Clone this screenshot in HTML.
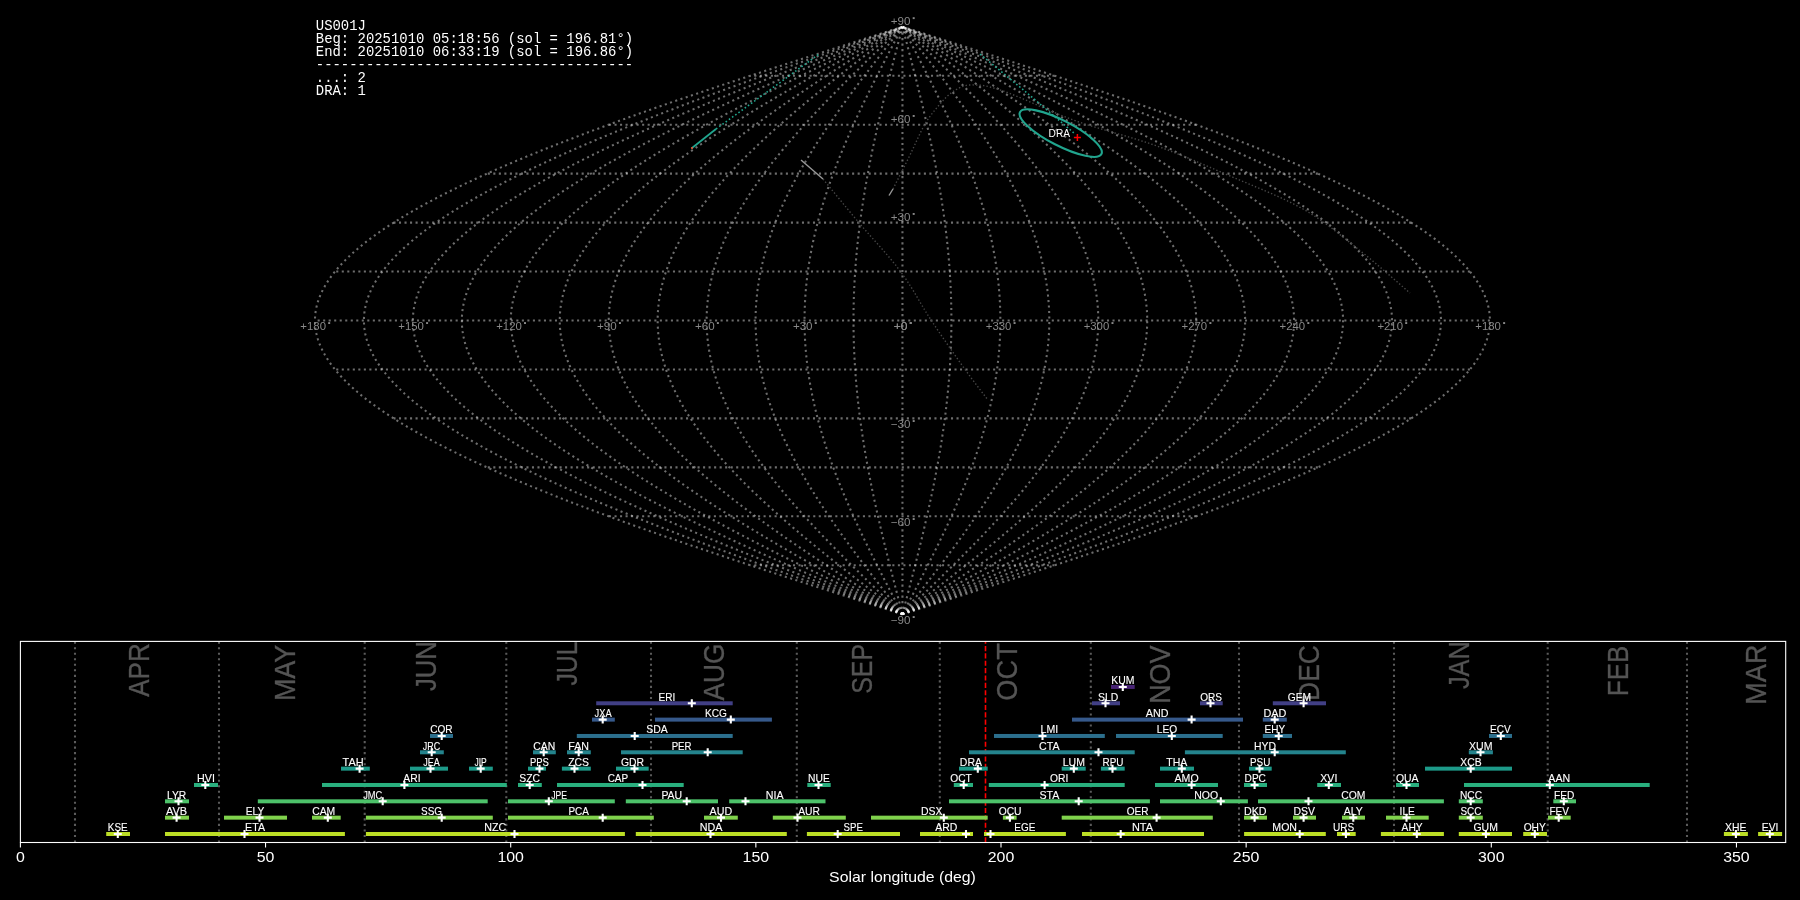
<!DOCTYPE html>
<html><head><meta charset="utf-8"><title>US001J radiants</title>
<style>html,body{margin:0;padding:0;background:#000;width:1800px;height:900px;overflow:hidden}svg{display:block}</style>
</head><body>
<svg width="1800" height="900" viewBox="0 0 1800 900">
<rect width="1800" height="900" fill="#000"/>
<g style="opacity:0.999">
<g fill="none" stroke="#ffffff" stroke-opacity="0.43" stroke-width="2.08" stroke-dasharray="2.08 3.44" stroke-linecap="butt">
<path d="M902.45 614.24 L897.32 612.61 L892.2 610.98 L887.07 609.34 L881.95 607.71 L876.82 606.08 L871.7 604.45 L866.59 602.82 L861.47 601.18 L856.36 599.55 L851.25 597.92 L846.14 596.29 L841.04 594.66 L835.95 593.02 L830.85 591.39 L825.77 589.76 L820.69 588.13 L815.62 586.5 L810.55 584.87 L805.49 583.23 L800.44 581.6 L795.39 579.97 L790.35 578.34 L785.33 576.71 L780.31 575.07 L775.3 573.44 L770.3 571.81 L765.31 570.18 L760.33 568.55 L755.36 566.91 L750.4 565.28 L745.45 563.65 L740.52 562.02 L735.6 560.39 L730.69 558.75 L725.79 557.12 L720.91 555.49 L716.04 553.86 L711.19 552.23 L706.35 550.6 L701.52 548.96 L696.71 547.33 L691.92 545.7 L687.14 544.07 L682.38 542.44 L677.63 540.8 L672.9 539.17 L668.19 537.54 L663.5 535.91 L658.83 534.28 L654.17 532.64 L649.53 531.01 L644.92 529.38 L640.32 527.75 L635.74 526.12 L631.18 524.49 L626.65 522.85 L622.13 521.22 L617.64 519.59 L613.16 517.96 L608.71 516.33 L604.28 514.69 L599.88 513.06 L595.49 511.43 L591.13 509.8 L586.8 508.17 L582.49 506.53 L578.2 504.9 L573.94 503.27 L569.7 501.64 L565.49 500.01 L561.3 498.38 L557.14 496.74 L553 495.11 L548.9 493.48 L544.82 491.85 L540.76 490.22 L536.74 488.58 L532.74 486.95 L528.77 485.32 L524.83 483.69 L520.91 482.06 L517.03 480.42 L513.18 478.79 L509.35 477.16 L505.56 475.53 L501.79 473.9 L498.06 472.27 L494.35 470.63 L490.68 469 L487.04 467.37 L483.43 465.74 L479.85 464.11 L476.31 462.47 L472.8 460.84 L469.32 459.21 L465.87 457.58 L462.46 455.95 L459.07 454.31 L455.73 452.68 L452.42 451.05 L449.14 449.42 L445.89 447.79 L442.69 446.15 L439.51 444.52 L436.37 442.89 L433.27 441.26 L430.2 439.63 L427.17 438 L424.18 436.36 L421.22 434.73 L418.29 433.1 L415.41 431.47 L412.56 429.84 L409.75 428.2 L406.98 426.57 L404.24 424.94 L401.54 423.31 L398.88 421.68 L396.26 420.04 L393.68 418.41 L391.14 416.78 L388.63 415.15 L386.16 413.52 L383.74 411.89 L381.35 410.25 L379 408.62 L376.7 406.99 L374.43 405.36 L372.2 403.73 L370.01 402.09 L367.87 400.46 L365.76 398.83 L363.7 397.2 L361.67 395.57 L359.69 393.93 L357.75 392.3 L355.85 390.67 L353.99 389.04 L352.18 387.41 L350.4 385.78 L348.67 384.14 L346.98 382.51 L345.33 380.88 L343.73 379.25 L342.16 377.62 L340.64 375.98 L339.16 374.35 L337.73 372.72 L336.34 371.09 L334.99 369.46 L333.68 367.82 L332.42 366.19 L331.2 364.56 L330.03 362.93 L328.9 361.3 L327.81 359.67 L326.77 358.03 L325.77 356.4 L324.81 354.77 L323.9 353.14 L323.03 351.51 L322.21 349.87 L321.43 348.24 L320.69 346.61 L320 344.98 L319.35 343.35 L318.75 341.71 L318.19 340.08 L317.68 338.45 L317.21 336.82 L316.78 335.19 L316.4 333.56 L316.07 331.92 L315.78 330.29 L315.53 328.66 L315.33 327.03 L315.17 325.4 L315.06 323.76 L314.99 322.13 L314.97 320.5 L314.99 318.87 L315.06 317.24 L315.17 315.6 L315.33 313.97 L315.53 312.34 L315.78 310.71 L316.07 309.08 L316.4 307.44 L316.78 305.81 L317.21 304.18 L317.68 302.55 L318.19 300.92 L318.75 299.29 L319.35 297.65 L320 296.02 L320.69 294.39 L321.43 292.76 L322.21 291.13 L323.03 289.49 L323.9 287.86 L324.81 286.23 L325.77 284.6 L326.77 282.97 L327.81 281.33 L328.9 279.7 L330.03 278.07 L331.2 276.44 L332.42 274.81 L333.68 273.18 L334.99 271.54 L336.34 269.91 L337.73 268.28 L339.16 266.65 L340.64 265.02 L342.16 263.38 L343.73 261.75 L345.33 260.12 L346.98 258.49 L348.67 256.86 L350.4 255.22 L352.18 253.59 L353.99 251.96 L355.85 250.33 L357.75 248.7 L359.69 247.07 L361.67 245.43 L363.7 243.8 L365.76 242.17 L367.87 240.54 L370.01 238.91 L372.2 237.27 L374.43 235.64 L376.7 234.01 L379 232.38 L381.35 230.75 L383.74 229.11 L386.16 227.48 L388.63 225.85 L391.14 224.22 L393.68 222.59 L396.26 220.96 L398.88 219.32 L401.54 217.69 L404.24 216.06 L406.98 214.43 L409.75 212.8 L412.56 211.16 L415.41 209.53 L418.29 207.9 L421.22 206.27 L424.18 204.64 L427.17 203 L430.2 201.37 L433.27 199.74 L436.37 198.11 L439.51 196.48 L442.69 194.85 L445.89 193.21 L449.14 191.58 L452.42 189.95 L455.73 188.32 L459.07 186.69 L462.46 185.05 L465.87 183.42 L469.32 181.79 L472.8 180.16 L476.31 178.53 L479.85 176.89 L483.43 175.26 L487.04 173.63 L490.68 172 L494.35 170.37 L498.06 168.73 L501.79 167.1 L505.56 165.47 L509.35 163.84 L513.18 162.21 L517.03 160.58 L520.91 158.94 L524.83 157.31 L528.77 155.68 L532.74 154.05 L536.74 152.42 L540.76 150.78 L544.82 149.15 L548.9 147.52 L553 145.89 L557.14 144.26 L561.3 142.62 L565.49 140.99 L569.7 139.36 L573.94 137.73 L578.2 136.1 L582.49 134.47 L586.8 132.83 L591.13 131.2 L595.49 129.57 L599.88 127.94 L604.28 126.31 L608.71 124.67 L613.16 123.04 L617.64 121.41 L622.13 119.78 L626.65 118.15 L631.18 116.51 L635.74 114.88 L640.32 113.25 L644.92 111.62 L649.53 109.99 L654.17 108.36 L658.83 106.72 L663.5 105.09 L668.19 103.46 L672.9 101.83 L677.63 100.2 L682.38 98.56 L687.14 96.93 L691.92 95.3 L696.71 93.67 L701.52 92.04 L706.35 90.4 L711.19 88.77 L716.04 87.14 L720.91 85.51 L725.79 83.88 L730.69 82.25 L735.6 80.61 L740.52 78.98 L745.45 77.35 L750.4 75.72 L755.36 74.09 L760.33 72.45 L765.31 70.82 L770.3 69.19 L775.3 67.56 L780.31 65.93 L785.33 64.29 L790.35 62.66 L795.39 61.03 L800.44 59.4 L805.49 57.77 L810.55 56.13 L815.62 54.5 L820.69 52.87 L825.77 51.24 L830.85 49.61 L835.95 47.98 L841.04 46.34 L846.14 44.71 L851.25 43.08 L856.36 41.45 L861.47 39.82 L866.59 38.18 L871.7 36.55 L876.82 34.92 L881.95 33.29 L887.07 31.66 L892.2 30.02 L897.32 28.39 L902.45 26.76"/>
<path d="M902.45 614.24 L897.75 612.61 L893.05 610.98 L888.35 609.34 L883.66 607.71 L878.96 606.08 L874.27 604.45 L869.57 602.82 L864.88 601.18 L860.2 599.55 L855.51 597.92 L850.84 596.29 L846.16 594.66 L841.49 593.02 L836.82 591.39 L832.16 589.76 L827.5 588.13 L822.85 586.5 L818.21 584.87 L813.57 583.23 L808.94 581.6 L804.31 579.97 L799.7 578.34 L795.09 576.71 L790.49 575.07 L785.89 573.44 L781.31 571.81 L776.73 570.18 L772.17 568.55 L767.62 566.91 L763.07 565.28 L758.54 563.65 L754.01 562.02 L749.5 560.39 L745 558.75 L740.51 557.12 L736.04 555.49 L731.57 553.86 L727.12 552.23 L722.69 550.6 L718.26 548.96 L713.86 547.33 L709.46 545.7 L705.08 544.07 L700.72 542.44 L696.37 540.8 L692.03 539.17 L687.72 537.54 L683.41 535.91 L679.13 534.28 L674.86 532.64 L670.61 531.01 L666.38 529.38 L662.16 527.75 L657.97 526.12 L653.79 524.49 L649.63 522.85 L645.49 521.22 L641.37 519.59 L637.27 517.96 L633.19 516.33 L629.13 514.69 L625.09 513.06 L621.07 511.43 L617.08 509.8 L613.1 508.17 L609.15 506.53 L605.22 504.9 L601.31 503.27 L597.43 501.64 L593.57 500.01 L589.73 498.38 L585.92 496.74 L582.13 495.11 L578.36 493.48 L574.62 491.85 L570.9 490.22 L567.21 488.58 L563.55 486.95 L559.91 485.32 L556.3 483.69 L552.71 482.06 L549.15 480.42 L545.61 478.79 L542.11 477.16 L538.63 475.53 L535.18 473.9 L531.76 472.27 L528.36 470.63 L525 469 L521.66 467.37 L518.35 465.74 L515.07 464.11 L511.82 462.47 L508.6 460.84 L505.41 459.21 L502.25 457.58 L499.12 455.95 L496.02 454.31 L492.96 452.68 L489.92 451.05 L486.91 449.42 L483.94 447.79 L481 446.15 L478.09 444.52 L475.21 442.89 L472.37 441.26 L469.56 439.63 L466.78 438 L464.03 436.36 L461.32 434.73 L458.64 433.1 L456 431.47 L453.38 429.84 L450.81 428.2 L448.27 426.57 L445.76 424.94 L443.29 423.31 L440.85 421.68 L438.44 420.04 L436.08 418.41 L433.74 416.78 L431.45 415.15 L429.19 413.52 L426.96 411.89 L424.78 410.25 L422.62 408.62 L420.51 406.99 L418.43 405.36 L416.39 403.73 L414.38 402.09 L412.42 400.46 L410.49 398.83 L408.59 397.2 L406.74 395.57 L404.92 393.93 L403.14 392.3 L401.4 390.67 L399.7 389.04 L398.03 387.41 L396.41 385.78 L394.82 384.14 L393.27 382.51 L391.76 380.88 L390.29 379.25 L388.85 377.62 L387.46 375.98 L386.11 374.35 L384.79 372.72 L383.51 371.09 L382.28 369.46 L381.08 367.82 L379.93 366.19 L378.81 364.56 L377.73 362.93 L376.69 361.3 L375.7 359.67 L374.74 358.03 L373.82 356.4 L372.95 354.77 L372.11 353.14 L371.31 351.51 L370.56 349.87 L369.84 348.24 L369.17 346.61 L368.54 344.98 L367.94 343.35 L367.39 341.71 L366.88 340.08 L366.41 338.45 L365.98 336.82 L365.59 335.19 L365.24 333.56 L364.93 331.92 L364.67 330.29 L364.44 328.66 L364.26 327.03 L364.11 325.4 L364.01 323.76 L363.95 322.13 L363.93 320.5 L363.95 318.87 L364.01 317.24 L364.11 315.6 L364.26 313.97 L364.44 312.34 L364.67 310.71 L364.93 309.08 L365.24 307.44 L365.59 305.81 L365.98 304.18 L366.41 302.55 L366.88 300.92 L367.39 299.29 L367.94 297.65 L368.54 296.02 L369.17 294.39 L369.84 292.76 L370.56 291.13 L371.31 289.49 L372.11 287.86 L372.95 286.23 L373.82 284.6 L374.74 282.97 L375.7 281.33 L376.69 279.7 L377.73 278.07 L378.81 276.44 L379.93 274.81 L381.08 273.18 L382.28 271.54 L383.51 269.91 L384.79 268.28 L386.11 266.65 L387.46 265.02 L388.85 263.38 L390.29 261.75 L391.76 260.12 L393.27 258.49 L394.82 256.86 L396.41 255.22 L398.03 253.59 L399.7 251.96 L401.4 250.33 L403.14 248.7 L404.92 247.07 L406.74 245.43 L408.59 243.8 L410.49 242.17 L412.42 240.54 L414.38 238.91 L416.39 237.27 L418.43 235.64 L420.51 234.01 L422.62 232.38 L424.78 230.75 L426.96 229.11 L429.19 227.48 L431.45 225.85 L433.74 224.22 L436.08 222.59 L438.44 220.96 L440.85 219.32 L443.29 217.69 L445.76 216.06 L448.27 214.43 L450.81 212.8 L453.38 211.16 L456 209.53 L458.64 207.9 L461.32 206.27 L464.03 204.64 L466.78 203 L469.56 201.37 L472.37 199.74 L475.21 198.11 L478.09 196.48 L481 194.85 L483.94 193.21 L486.91 191.58 L489.92 189.95 L492.96 188.32 L496.02 186.69 L499.12 185.05 L502.25 183.42 L505.41 181.79 L508.6 180.16 L511.82 178.53 L515.07 176.89 L518.35 175.26 L521.66 173.63 L525 172 L528.36 170.37 L531.76 168.73 L535.18 167.1 L538.63 165.47 L542.11 163.84 L545.61 162.21 L549.15 160.58 L552.71 158.94 L556.3 157.31 L559.91 155.68 L563.55 154.05 L567.21 152.42 L570.9 150.78 L574.62 149.15 L578.36 147.52 L582.13 145.89 L585.92 144.26 L589.73 142.62 L593.57 140.99 L597.43 139.36 L601.31 137.73 L605.22 136.1 L609.15 134.47 L613.1 132.83 L617.08 131.2 L621.07 129.57 L625.09 127.94 L629.13 126.31 L633.19 124.67 L637.27 123.04 L641.37 121.41 L645.49 119.78 L649.63 118.15 L653.79 116.51 L657.97 114.88 L662.16 113.25 L666.38 111.62 L670.61 109.99 L674.86 108.36 L679.13 106.72 L683.41 105.09 L687.72 103.46 L692.03 101.83 L696.37 100.2 L700.72 98.56 L705.08 96.93 L709.46 95.3 L713.86 93.67 L718.26 92.04 L722.69 90.4 L727.12 88.77 L731.57 87.14 L736.04 85.51 L740.51 83.88 L745 82.25 L749.5 80.61 L754.01 78.98 L758.54 77.35 L763.07 75.72 L767.62 74.09 L772.17 72.45 L776.73 70.82 L781.31 69.19 L785.89 67.56 L790.49 65.93 L795.09 64.29 L799.7 62.66 L804.31 61.03 L808.94 59.4 L813.57 57.77 L818.21 56.13 L822.85 54.5 L827.5 52.87 L832.16 51.24 L836.82 49.61 L841.49 47.98 L846.16 46.34 L850.84 44.71 L855.51 43.08 L860.2 41.45 L864.88 39.82 L869.57 38.18 L874.27 36.55 L878.96 34.92 L883.66 33.29 L888.35 31.66 L893.05 30.02 L897.75 28.39 L902.45 26.76"/>
<path d="M902.45 614.24 L898.18 612.61 L893.91 610.98 L889.63 609.34 L885.36 607.71 L881.1 606.08 L876.83 604.45 L872.56 602.82 L868.3 601.18 L864.04 599.55 L859.78 597.92 L855.53 596.29 L851.28 594.66 L847.03 593.02 L842.79 591.39 L838.55 589.76 L834.32 588.13 L830.09 586.5 L825.87 584.87 L821.65 583.23 L817.44 581.6 L813.23 579.97 L809.04 578.34 L804.85 576.71 L800.66 575.07 L796.49 573.44 L792.32 571.81 L788.16 570.18 L784.01 568.55 L779.87 566.91 L775.74 565.28 L771.62 563.65 L767.51 562.02 L763.41 560.39 L759.32 558.75 L755.24 557.12 L751.17 555.49 L747.11 553.86 L743.06 552.23 L739.03 550.6 L735.01 548.96 L731 547.33 L727.01 545.7 L723.02 544.07 L719.06 542.44 L715.1 540.8 L711.16 539.17 L707.24 537.54 L703.33 535.91 L699.43 534.28 L695.55 532.64 L691.69 531.01 L687.84 529.38 L684.01 527.75 L680.19 526.12 L676.39 524.49 L672.61 522.85 L668.85 521.22 L665.1 519.59 L661.38 517.96 L657.67 516.33 L653.98 514.69 L650.31 513.06 L646.65 511.43 L643.02 509.8 L639.41 508.17 L635.81 506.53 L632.24 504.9 L628.69 503.27 L625.16 501.64 L621.65 500.01 L618.16 498.38 L614.69 496.74 L611.25 495.11 L607.82 493.48 L604.42 491.85 L601.04 490.22 L597.69 488.58 L594.36 486.95 L591.05 485.32 L587.76 483.69 L584.5 482.06 L581.27 480.42 L578.05 478.79 L574.87 477.16 L571.7 475.53 L568.57 473.9 L565.46 472.27 L562.37 470.63 L559.31 469 L556.28 467.37 L553.27 465.74 L550.29 464.11 L547.33 462.47 L544.4 460.84 L541.5 459.21 L538.63 457.58 L535.79 455.95 L532.97 454.31 L530.18 452.68 L527.42 451.05 L524.69 449.42 L521.99 447.79 L519.31 446.15 L516.67 444.52 L514.05 442.89 L511.47 441.26 L508.91 439.63 L506.38 438 L503.89 436.36 L501.42 434.73 L498.99 433.1 L496.58 431.47 L494.21 429.84 L491.87 428.2 L489.56 426.57 L487.28 424.94 L485.03 423.31 L482.81 421.68 L480.63 420.04 L478.47 418.41 L476.35 416.78 L474.27 415.15 L472.21 413.52 L470.19 411.89 L468.2 410.25 L466.24 408.62 L464.32 406.99 L462.43 405.36 L460.58 403.73 L458.75 402.09 L456.96 400.46 L455.21 398.83 L453.49 397.2 L451.8 395.57 L450.15 393.93 L448.53 392.3 L446.95 390.67 L445.4 389.04 L443.89 387.41 L442.41 385.78 L440.97 384.14 L439.56 382.51 L438.18 380.88 L436.85 379.25 L435.54 377.62 L434.28 375.98 L433.05 374.35 L431.85 372.72 L430.69 371.09 L429.57 369.46 L428.48 367.82 L427.43 366.19 L426.41 364.56 L425.43 362.93 L424.49 361.3 L423.58 359.67 L422.71 358.03 L421.88 356.4 L421.08 354.77 L420.32 353.14 L419.6 351.51 L418.91 349.87 L418.26 348.24 L417.65 346.61 L417.07 344.98 L416.53 343.35 L416.03 341.71 L415.57 340.08 L415.14 338.45 L414.75 336.82 L414.39 335.19 L414.08 333.56 L413.8 331.92 L413.56 330.29 L413.35 328.66 L413.18 327.03 L413.05 325.4 L412.96 323.76 L412.9 322.13 L412.89 320.5 L412.9 318.87 L412.96 317.24 L413.05 315.6 L413.18 313.97 L413.35 312.34 L413.56 310.71 L413.8 309.08 L414.08 307.44 L414.39 305.81 L414.75 304.18 L415.14 302.55 L415.57 300.92 L416.03 299.29 L416.53 297.65 L417.07 296.02 L417.65 294.39 L418.26 292.76 L418.91 291.13 L419.6 289.49 L420.32 287.86 L421.08 286.23 L421.88 284.6 L422.71 282.97 L423.58 281.33 L424.49 279.7 L425.43 278.07 L426.41 276.44 L427.43 274.81 L428.48 273.18 L429.57 271.54 L430.69 269.91 L431.85 268.28 L433.05 266.65 L434.28 265.02 L435.54 263.38 L436.85 261.75 L438.18 260.12 L439.56 258.49 L440.97 256.86 L442.41 255.22 L443.89 253.59 L445.4 251.96 L446.95 250.33 L448.53 248.7 L450.15 247.07 L451.8 245.43 L453.49 243.8 L455.21 242.17 L456.96 240.54 L458.75 238.91 L460.58 237.27 L462.43 235.64 L464.32 234.01 L466.24 232.38 L468.2 230.75 L470.19 229.11 L472.21 227.48 L474.27 225.85 L476.35 224.22 L478.47 222.59 L480.63 220.96 L482.81 219.32 L485.03 217.69 L487.28 216.06 L489.56 214.43 L491.87 212.8 L494.21 211.16 L496.58 209.53 L498.99 207.9 L501.42 206.27 L503.89 204.64 L506.38 203 L508.91 201.37 L511.47 199.74 L514.05 198.11 L516.67 196.48 L519.31 194.85 L521.99 193.21 L524.69 191.58 L527.42 189.95 L530.18 188.32 L532.97 186.69 L535.79 185.05 L538.63 183.42 L541.5 181.79 L544.4 180.16 L547.33 178.53 L550.29 176.89 L553.27 175.26 L556.28 173.63 L559.31 172 L562.37 170.37 L565.46 168.73 L568.57 167.1 L571.7 165.47 L574.87 163.84 L578.05 162.21 L581.27 160.58 L584.5 158.94 L587.76 157.31 L591.05 155.68 L594.36 154.05 L597.69 152.42 L601.04 150.78 L604.42 149.15 L607.82 147.52 L611.25 145.89 L614.69 144.26 L618.16 142.62 L621.65 140.99 L625.16 139.36 L628.69 137.73 L632.24 136.1 L635.81 134.47 L639.41 132.83 L643.02 131.2 L646.65 129.57 L650.31 127.94 L653.98 126.31 L657.67 124.67 L661.38 123.04 L665.1 121.41 L668.85 119.78 L672.61 118.15 L676.39 116.51 L680.19 114.88 L684.01 113.25 L687.84 111.62 L691.69 109.99 L695.55 108.36 L699.43 106.72 L703.33 105.09 L707.24 103.46 L711.16 101.83 L715.1 100.2 L719.06 98.56 L723.02 96.93 L727.01 95.3 L731 93.67 L735.01 92.04 L739.03 90.4 L743.06 88.77 L747.11 87.14 L751.17 85.51 L755.24 83.88 L759.32 82.25 L763.41 80.61 L767.51 78.98 L771.62 77.35 L775.74 75.72 L779.87 74.09 L784.01 72.45 L788.16 70.82 L792.32 69.19 L796.49 67.56 L800.66 65.93 L804.85 64.29 L809.04 62.66 L813.23 61.03 L817.44 59.4 L821.65 57.77 L825.87 56.13 L830.09 54.5 L834.32 52.87 L838.55 51.24 L842.79 49.61 L847.03 47.98 L851.28 46.34 L855.53 44.71 L859.78 43.08 L864.04 41.45 L868.3 39.82 L872.56 38.18 L876.83 36.55 L881.1 34.92 L885.36 33.29 L889.63 31.66 L893.91 30.02 L898.18 28.39 L902.45 26.76"/>
<path d="M902.45 614.24 L898.61 612.61 L894.76 610.98 L890.92 609.34 L887.07 607.71 L883.23 606.08 L879.39 604.45 L875.55 602.82 L871.71 601.18 L867.88 599.55 L864.05 597.92 L860.22 596.29 L856.39 594.66 L852.57 593.02 L848.75 591.39 L844.94 589.76 L841.13 588.13 L837.32 586.5 L833.52 584.87 L829.73 583.23 L825.94 581.6 L822.16 579.97 L818.38 578.34 L814.61 576.71 L810.84 575.07 L807.08 573.44 L803.33 571.81 L799.59 570.18 L795.86 568.55 L792.13 566.91 L788.41 565.28 L784.7 563.65 L781 562.02 L777.31 560.39 L773.63 558.75 L769.96 557.12 L766.29 555.49 L762.64 553.86 L759 552.23 L755.37 550.6 L751.75 548.96 L748.15 547.33 L744.55 545.7 L740.97 544.07 L737.4 542.44 L733.84 540.8 L730.29 539.17 L726.76 537.54 L723.24 535.91 L719.73 534.28 L716.24 532.64 L712.76 531.01 L709.3 529.38 L705.85 527.75 L702.42 526.12 L699 524.49 L695.6 522.85 L692.21 521.22 L688.84 519.59 L685.48 517.96 L682.15 516.33 L678.82 514.69 L675.52 513.06 L672.23 511.43 L668.96 509.8 L665.71 508.17 L662.48 506.53 L659.26 504.9 L656.06 503.27 L652.89 501.64 L649.73 500.01 L646.59 498.38 L643.47 496.74 L640.37 495.11 L637.29 493.48 L634.22 491.85 L631.18 490.22 L628.16 488.58 L625.17 486.95 L622.19 485.32 L619.23 483.69 L616.3 482.06 L613.38 480.42 L610.49 478.79 L607.63 477.16 L604.78 475.53 L601.96 473.9 L599.16 472.27 L596.38 470.63 L593.62 469 L590.89 467.37 L588.19 465.74 L585.5 464.11 L582.84 462.47 L580.21 460.84 L577.6 459.21 L575.01 457.58 L572.45 455.95 L569.92 454.31 L567.41 452.68 L564.92 451.05 L562.47 449.42 L560.03 447.79 L557.63 446.15 L555.25 444.52 L552.89 442.89 L550.56 441.26 L548.26 439.63 L545.99 438 L543.74 436.36 L541.52 434.73 L539.33 433.1 L537.17 431.47 L535.03 429.84 L532.92 428.2 L530.84 426.57 L528.79 424.94 L526.77 423.31 L524.77 421.68 L522.81 420.04 L520.87 418.41 L518.96 416.78 L517.09 415.15 L515.24 413.52 L513.42 411.89 L511.63 410.25 L509.87 408.62 L508.13 406.99 L506.43 405.36 L504.76 403.73 L503.12 402.09 L501.51 400.46 L499.93 398.83 L498.39 397.2 L496.87 395.57 L495.38 393.93 L493.93 392.3 L492.5 390.67 L491.11 389.04 L489.74 387.41 L488.41 385.78 L487.11 384.14 L485.85 382.51 L484.61 380.88 L483.41 379.25 L482.23 377.62 L481.09 375.98 L479.99 374.35 L478.91 372.72 L477.87 371.09 L476.85 369.46 L475.88 367.82 L474.93 366.19 L474.02 364.56 L473.13 362.93 L472.29 361.3 L471.47 359.67 L470.69 358.03 L469.94 356.4 L469.22 354.77 L468.54 353.14 L467.88 351.51 L467.27 349.87 L466.68 348.24 L466.13 346.61 L465.61 344.98 L465.13 343.35 L464.67 341.71 L464.26 340.08 L463.87 338.45 L463.52 336.82 L463.2 335.19 L462.91 333.56 L462.66 331.92 L462.45 330.29 L462.26 328.66 L462.11 327.03 L461.99 325.4 L461.91 323.76 L461.86 322.13 L461.84 320.5 L461.86 318.87 L461.91 317.24 L461.99 315.6 L462.11 313.97 L462.26 312.34 L462.45 310.71 L462.66 309.08 L462.91 307.44 L463.2 305.81 L463.52 304.18 L463.87 302.55 L464.26 300.92 L464.67 299.29 L465.13 297.65 L465.61 296.02 L466.13 294.39 L466.68 292.76 L467.27 291.13 L467.88 289.49 L468.54 287.86 L469.22 286.23 L469.94 284.6 L470.69 282.97 L471.47 281.33 L472.29 279.7 L473.13 278.07 L474.02 276.44 L474.93 274.81 L475.88 273.18 L476.85 271.54 L477.87 269.91 L478.91 268.28 L479.99 266.65 L481.09 265.02 L482.23 263.38 L483.41 261.75 L484.61 260.12 L485.85 258.49 L487.11 256.86 L488.41 255.22 L489.74 253.59 L491.11 251.96 L492.5 250.33 L493.93 248.7 L495.38 247.07 L496.87 245.43 L498.39 243.8 L499.93 242.17 L501.51 240.54 L503.12 238.91 L504.76 237.27 L506.43 235.64 L508.13 234.01 L509.87 232.38 L511.63 230.75 L513.42 229.11 L515.24 227.48 L517.09 225.85 L518.96 224.22 L520.87 222.59 L522.81 220.96 L524.77 219.32 L526.77 217.69 L528.79 216.06 L530.84 214.43 L532.92 212.8 L535.03 211.16 L537.17 209.53 L539.33 207.9 L541.52 206.27 L543.74 204.64 L545.99 203 L548.26 201.37 L550.56 199.74 L552.89 198.11 L555.25 196.48 L557.63 194.85 L560.03 193.21 L562.47 191.58 L564.92 189.95 L567.41 188.32 L569.92 186.69 L572.45 185.05 L575.01 183.42 L577.6 181.79 L580.21 180.16 L582.84 178.53 L585.5 176.89 L588.19 175.26 L590.89 173.63 L593.62 172 L596.38 170.37 L599.16 168.73 L601.96 167.1 L604.78 165.47 L607.63 163.84 L610.49 162.21 L613.38 160.58 L616.3 158.94 L619.23 157.31 L622.19 155.68 L625.17 154.05 L628.16 152.42 L631.18 150.78 L634.22 149.15 L637.29 147.52 L640.37 145.89 L643.47 144.26 L646.59 142.62 L649.73 140.99 L652.89 139.36 L656.06 137.73 L659.26 136.1 L662.48 134.47 L665.71 132.83 L668.96 131.2 L672.23 129.57 L675.52 127.94 L678.82 126.31 L682.15 124.67 L685.48 123.04 L688.84 121.41 L692.21 119.78 L695.6 118.15 L699 116.51 L702.42 114.88 L705.85 113.25 L709.3 111.62 L712.76 109.99 L716.24 108.36 L719.73 106.72 L723.24 105.09 L726.76 103.46 L730.29 101.83 L733.84 100.2 L737.4 98.56 L740.97 96.93 L744.55 95.3 L748.15 93.67 L751.75 92.04 L755.37 90.4 L759 88.77 L762.64 87.14 L766.29 85.51 L769.96 83.88 L773.63 82.25 L777.31 80.61 L781 78.98 L784.7 77.35 L788.41 75.72 L792.13 74.09 L795.86 72.45 L799.59 70.82 L803.33 69.19 L807.08 67.56 L810.84 65.93 L814.61 64.29 L818.38 62.66 L822.16 61.03 L825.94 59.4 L829.73 57.77 L833.52 56.13 L837.32 54.5 L841.13 52.87 L844.94 51.24 L848.75 49.61 L852.57 47.98 L856.39 46.34 L860.22 44.71 L864.05 43.08 L867.88 41.45 L871.71 39.82 L875.55 38.18 L879.39 36.55 L883.23 34.92 L887.07 33.29 L890.92 31.66 L894.76 30.02 L898.61 28.39 L902.45 26.76"/>
<path d="M902.45 614.24 L899.03 612.61 L895.61 610.98 L892.2 609.34 L888.78 607.71 L885.37 606.08 L881.95 604.45 L878.54 602.82 L875.13 601.18 L871.72 599.55 L868.32 597.92 L864.91 596.29 L861.51 594.66 L858.11 593.02 L854.72 591.39 L851.33 589.76 L847.94 588.13 L844.56 586.5 L841.18 584.87 L837.81 583.23 L834.44 581.6 L831.08 579.97 L827.72 578.34 L824.37 576.71 L821.02 575.07 L817.68 573.44 L814.35 571.81 L811.02 570.18 L807.7 568.55 L804.39 566.91 L801.08 565.28 L797.79 563.65 L794.5 562.02 L791.21 560.39 L787.94 558.75 L784.68 557.12 L781.42 555.49 L778.18 553.86 L774.94 552.23 L771.71 550.6 L768.5 548.96 L765.29 547.33 L762.09 545.7 L758.91 544.07 L755.73 542.44 L752.57 540.8 L749.42 539.17 L746.28 537.54 L743.15 535.91 L740.03 534.28 L736.93 532.64 L733.84 531.01 L730.76 529.38 L727.7 527.75 L724.64 526.12 L721.61 524.49 L718.58 522.85 L715.57 521.22 L712.57 519.59 L709.59 517.96 L706.62 516.33 L703.67 514.69 L700.73 513.06 L697.81 511.43 L694.91 509.8 L692.02 508.17 L689.14 506.53 L686.28 504.9 L683.44 503.27 L680.62 501.64 L677.81 500.01 L675.02 498.38 L672.24 496.74 L669.49 495.11 L666.75 493.48 L664.03 491.85 L661.33 490.22 L658.64 488.58 L655.98 486.95 L653.33 485.32 L650.7 483.69 L648.09 482.06 L645.5 480.42 L642.93 478.79 L640.38 477.16 L637.85 475.53 L635.34 473.9 L632.85 472.27 L630.39 470.63 L627.94 469 L625.51 467.37 L623.1 465.74 L620.72 464.11 L618.36 462.47 L616.01 460.84 L613.69 459.21 L611.4 457.58 L609.12 455.95 L606.87 454.31 L604.64 452.68 L602.43 451.05 L600.24 449.42 L598.08 447.79 L595.94 446.15 L593.82 444.52 L591.73 442.89 L589.66 441.26 L587.62 439.63 L585.6 438 L583.6 436.36 L581.63 434.73 L579.68 433.1 L577.76 431.47 L575.86 429.84 L573.98 428.2 L572.13 426.57 L570.31 424.94 L568.51 423.31 L566.74 421.68 L564.99 420.04 L563.27 418.41 L561.57 416.78 L559.9 415.15 L558.26 413.52 L556.64 411.89 L555.05 410.25 L553.49 408.62 L551.95 406.99 L550.44 405.36 L548.95 403.73 L547.49 402.09 L546.06 400.46 L544.66 398.83 L543.28 397.2 L541.93 395.57 L540.61 393.93 L539.32 392.3 L538.05 390.67 L536.81 389.04 L535.6 387.41 L534.42 385.78 L533.26 384.14 L532.14 382.51 L531.04 380.88 L529.97 379.25 L528.92 377.62 L527.91 375.98 L526.93 374.35 L525.97 372.72 L525.04 371.09 L524.14 369.46 L523.27 367.82 L522.43 366.19 L521.62 364.56 L520.84 362.93 L520.08 361.3 L519.36 359.67 L518.66 358.03 L517.99 356.4 L517.36 354.77 L516.75 353.14 L516.17 351.51 L515.62 349.87 L515.1 348.24 L514.61 346.61 L514.15 344.98 L513.72 343.35 L513.32 341.71 L512.94 340.08 L512.6 338.45 L512.29 336.82 L512.01 335.19 L511.75 333.56 L511.53 331.92 L511.33 330.29 L511.17 328.66 L511.04 327.03 L510.93 325.4 L510.86 323.76 L510.81 322.13 L510.8 320.5 L510.81 318.87 L510.86 317.24 L510.93 315.6 L511.04 313.97 L511.17 312.34 L511.33 310.71 L511.53 309.08 L511.75 307.44 L512.01 305.81 L512.29 304.18 L512.6 302.55 L512.94 300.92 L513.32 299.29 L513.72 297.65 L514.15 296.02 L514.61 294.39 L515.1 292.76 L515.62 291.13 L516.17 289.49 L516.75 287.86 L517.36 286.23 L517.99 284.6 L518.66 282.97 L519.36 281.33 L520.08 279.7 L520.84 278.07 L521.62 276.44 L522.43 274.81 L523.27 273.18 L524.14 271.54 L525.04 269.91 L525.97 268.28 L526.93 266.65 L527.91 265.02 L528.92 263.38 L529.97 261.75 L531.04 260.12 L532.14 258.49 L533.26 256.86 L534.42 255.22 L535.6 253.59 L536.81 251.96 L538.05 250.33 L539.32 248.7 L540.61 247.07 L541.93 245.43 L543.28 243.8 L544.66 242.17 L546.06 240.54 L547.49 238.91 L548.95 237.27 L550.44 235.64 L551.95 234.01 L553.49 232.38 L555.05 230.75 L556.64 229.11 L558.26 227.48 L559.9 225.85 L561.57 224.22 L563.27 222.59 L564.99 220.96 L566.74 219.32 L568.51 217.69 L570.31 216.06 L572.13 214.43 L573.98 212.8 L575.86 211.16 L577.76 209.53 L579.68 207.9 L581.63 206.27 L583.6 204.64 L585.6 203 L587.62 201.37 L589.66 199.74 L591.73 198.11 L593.82 196.48 L595.94 194.85 L598.08 193.21 L600.24 191.58 L602.43 189.95 L604.64 188.32 L606.87 186.69 L609.12 185.05 L611.4 183.42 L613.69 181.79 L616.01 180.16 L618.36 178.53 L620.72 176.89 L623.1 175.26 L625.51 173.63 L627.94 172 L630.39 170.37 L632.85 168.73 L635.34 167.1 L637.85 165.47 L640.38 163.84 L642.93 162.21 L645.5 160.58 L648.09 158.94 L650.7 157.31 L653.33 155.68 L655.98 154.05 L658.64 152.42 L661.33 150.78 L664.03 149.15 L666.75 147.52 L669.49 145.89 L672.24 144.26 L675.02 142.62 L677.81 140.99 L680.62 139.36 L683.44 137.73 L686.28 136.1 L689.14 134.47 L692.02 132.83 L694.91 131.2 L697.81 129.57 L700.73 127.94 L703.67 126.31 L706.62 124.67 L709.59 123.04 L712.57 121.41 L715.57 119.78 L718.58 118.15 L721.61 116.51 L724.64 114.88 L727.7 113.25 L730.76 111.62 L733.84 109.99 L736.93 108.36 L740.03 106.72 L743.15 105.09 L746.28 103.46 L749.42 101.83 L752.57 100.2 L755.73 98.56 L758.91 96.93 L762.09 95.3 L765.29 93.67 L768.5 92.04 L771.71 90.4 L774.94 88.77 L778.18 87.14 L781.42 85.51 L784.68 83.88 L787.94 82.25 L791.21 80.61 L794.5 78.98 L797.79 77.35 L801.08 75.72 L804.39 74.09 L807.7 72.45 L811.02 70.82 L814.35 69.19 L817.68 67.56 L821.02 65.93 L824.37 64.29 L827.72 62.66 L831.08 61.03 L834.44 59.4 L837.81 57.77 L841.18 56.13 L844.56 54.5 L847.94 52.87 L851.33 51.24 L854.72 49.61 L858.11 47.98 L861.51 46.34 L864.91 44.71 L868.32 43.08 L871.72 41.45 L875.13 39.82 L878.54 38.18 L881.95 36.55 L885.37 34.92 L888.78 33.29 L892.2 31.66 L895.61 30.02 L899.03 28.39 L902.45 26.76"/>
<path d="M902.45 614.24 L899.46 612.61 L896.47 610.98 L893.48 609.34 L890.49 607.71 L887.5 606.08 L884.51 604.45 L881.53 602.82 L878.54 601.18 L875.56 599.55 L872.58 597.92 L869.6 596.29 L866.63 594.66 L863.66 593.02 L860.69 591.39 L857.72 589.76 L854.76 588.13 L851.8 586.5 L848.84 584.87 L845.89 583.23 L842.94 581.6 L840 579.97 L837.06 578.34 L834.13 576.71 L831.2 575.07 L828.28 573.44 L825.36 571.81 L822.45 570.18 L819.54 568.55 L816.65 566.91 L813.75 565.28 L810.87 563.65 L807.99 562.02 L805.12 560.39 L802.26 558.75 L799.4 557.12 L796.55 555.49 L793.71 553.86 L790.88 552.23 L788.06 550.6 L785.24 548.96 L782.44 547.33 L779.64 545.7 L776.85 544.07 L774.07 542.44 L771.31 540.8 L768.55 539.17 L765.8 537.54 L763.06 535.91 L760.34 534.28 L757.62 532.64 L754.92 531.01 L752.22 529.38 L749.54 527.75 L746.87 526.12 L744.21 524.49 L741.56 522.85 L738.93 521.22 L736.31 519.59 L733.7 517.96 L731.1 516.33 L728.52 514.69 L725.95 513.06 L723.39 511.43 L720.85 509.8 L718.32 508.17 L715.8 506.53 L713.3 504.9 L710.82 503.27 L708.35 501.64 L705.89 500.01 L703.45 498.38 L701.02 496.74 L698.61 495.11 L696.21 493.48 L693.83 491.85 L691.47 490.22 L689.12 488.58 L686.78 486.95 L684.47 485.32 L682.17 483.69 L679.89 482.06 L677.62 480.42 L675.37 478.79 L673.14 477.16 L670.93 475.53 L668.73 473.9 L666.55 472.27 L664.39 470.63 L662.25 469 L660.13 467.37 L658.02 465.74 L655.94 464.11 L653.87 462.47 L651.82 460.84 L649.79 459.21 L647.78 457.58 L645.79 455.95 L643.81 454.31 L641.86 452.68 L639.93 451.05 L638.02 449.42 L636.13 447.79 L634.25 446.15 L632.4 444.52 L630.57 442.89 L628.76 441.26 L626.97 439.63 L625.2 438 L623.46 436.36 L621.73 434.73 L620.03 433.1 L618.34 431.47 L616.68 429.84 L615.04 428.2 L613.42 426.57 L611.83 424.94 L610.25 423.31 L608.7 421.68 L607.17 420.04 L605.67 418.41 L604.18 416.78 L602.72 415.15 L601.28 413.52 L599.87 411.89 L598.48 410.25 L597.11 408.62 L595.76 406.99 L594.44 405.36 L593.14 403.73 L591.86 402.09 L590.61 400.46 L589.38 398.83 L588.18 397.2 L587 395.57 L585.84 393.93 L584.71 392.3 L583.6 390.67 L582.52 389.04 L581.46 387.41 L580.42 385.78 L579.41 384.14 L578.43 382.51 L577.46 380.88 L576.53 379.25 L575.62 377.62 L574.73 375.98 L573.87 374.35 L573.03 372.72 L572.22 371.09 L571.43 369.46 L570.67 367.82 L569.93 366.19 L569.22 364.56 L568.54 362.93 L567.88 361.3 L567.24 359.67 L566.63 358.03 L566.05 356.4 L565.49 354.77 L564.96 353.14 L564.45 351.51 L563.97 349.87 L563.52 348.24 L563.09 346.61 L562.69 344.98 L562.31 343.35 L561.96 341.71 L561.63 340.08 L561.33 338.45 L561.06 336.82 L560.81 335.19 L560.59 333.56 L560.39 331.92 L560.22 330.29 L560.08 328.66 L559.96 327.03 L559.87 325.4 L559.81 323.76 L559.77 322.13 L559.75 320.5 L559.77 318.87 L559.81 317.24 L559.87 315.6 L559.96 313.97 L560.08 312.34 L560.22 310.71 L560.39 309.08 L560.59 307.44 L560.81 305.81 L561.06 304.18 L561.33 302.55 L561.63 300.92 L561.96 299.29 L562.31 297.65 L562.69 296.02 L563.09 294.39 L563.52 292.76 L563.97 291.13 L564.45 289.49 L564.96 287.86 L565.49 286.23 L566.05 284.6 L566.63 282.97 L567.24 281.33 L567.88 279.7 L568.54 278.07 L569.22 276.44 L569.93 274.81 L570.67 273.18 L571.43 271.54 L572.22 269.91 L573.03 268.28 L573.87 266.65 L574.73 265.02 L575.62 263.38 L576.53 261.75 L577.46 260.12 L578.43 258.49 L579.41 256.86 L580.42 255.22 L581.46 253.59 L582.52 251.96 L583.6 250.33 L584.71 248.7 L585.84 247.07 L587 245.43 L588.18 243.8 L589.38 242.17 L590.61 240.54 L591.86 238.91 L593.14 237.27 L594.44 235.64 L595.76 234.01 L597.11 232.38 L598.48 230.75 L599.87 229.11 L601.28 227.48 L602.72 225.85 L604.18 224.22 L605.67 222.59 L607.17 220.96 L608.7 219.32 L610.25 217.69 L611.83 216.06 L613.42 214.43 L615.04 212.8 L616.68 211.16 L618.34 209.53 L620.03 207.9 L621.73 206.27 L623.46 204.64 L625.2 203 L626.97 201.37 L628.76 199.74 L630.57 198.11 L632.4 196.48 L634.25 194.85 L636.13 193.21 L638.02 191.58 L639.93 189.95 L641.86 188.32 L643.81 186.69 L645.79 185.05 L647.78 183.42 L649.79 181.79 L651.82 180.16 L653.87 178.53 L655.94 176.89 L658.02 175.26 L660.13 173.63 L662.25 172 L664.39 170.37 L666.55 168.73 L668.73 167.1 L670.93 165.47 L673.14 163.84 L675.37 162.21 L677.62 160.58 L679.89 158.94 L682.17 157.31 L684.47 155.68 L686.78 154.05 L689.12 152.42 L691.47 150.78 L693.83 149.15 L696.21 147.52 L698.61 145.89 L701.02 144.26 L703.45 142.62 L705.89 140.99 L708.35 139.36 L710.82 137.73 L713.3 136.1 L715.8 134.47 L718.32 132.83 L720.85 131.2 L723.39 129.57 L725.95 127.94 L728.52 126.31 L731.1 124.67 L733.7 123.04 L736.31 121.41 L738.93 119.78 L741.56 118.15 L744.21 116.51 L746.87 114.88 L749.54 113.25 L752.22 111.62 L754.92 109.99 L757.62 108.36 L760.34 106.72 L763.06 105.09 L765.8 103.46 L768.55 101.83 L771.31 100.2 L774.07 98.56 L776.85 96.93 L779.64 95.3 L782.44 93.67 L785.24 92.04 L788.06 90.4 L790.88 88.77 L793.71 87.14 L796.55 85.51 L799.4 83.88 L802.26 82.25 L805.12 80.61 L807.99 78.98 L810.87 77.35 L813.75 75.72 L816.65 74.09 L819.54 72.45 L822.45 70.82 L825.36 69.19 L828.28 67.56 L831.2 65.93 L834.13 64.29 L837.06 62.66 L840 61.03 L842.94 59.4 L845.89 57.77 L848.84 56.13 L851.8 54.5 L854.76 52.87 L857.72 51.24 L860.69 49.61 L863.66 47.98 L866.63 46.34 L869.6 44.71 L872.58 43.08 L875.56 41.45 L878.54 39.82 L881.53 38.18 L884.51 36.55 L887.5 34.92 L890.49 33.29 L893.48 31.66 L896.47 30.02 L899.46 28.39 L902.45 26.76"/>
<path d="M902.45 614.24 L899.89 612.61 L897.32 610.98 L894.76 609.34 L892.2 607.71 L889.64 606.08 L887.08 604.45 L884.52 602.82 L881.96 601.18 L879.4 599.55 L876.85 597.92 L874.3 596.29 L871.75 594.66 L869.2 593.02 L866.65 591.39 L864.11 589.76 L861.57 588.13 L859.03 586.5 L856.5 584.87 L853.97 583.23 L851.44 581.6 L848.92 579.97 L846.4 578.34 L843.89 576.71 L841.38 575.07 L838.87 573.44 L836.37 571.81 L833.88 570.18 L831.39 568.55 L828.9 566.91 L826.42 565.28 L823.95 563.65 L821.48 562.02 L819.02 560.39 L816.57 558.75 L814.12 557.12 L811.68 555.49 L809.25 553.86 L806.82 552.23 L804.4 550.6 L801.99 548.96 L799.58 547.33 L797.18 545.7 L794.79 544.07 L792.41 542.44 L790.04 540.8 L787.68 539.17 L785.32 537.54 L782.98 535.91 L780.64 534.28 L778.31 532.64 L775.99 531.01 L773.68 529.38 L771.38 527.75 L769.1 526.12 L766.82 524.49 L764.55 522.85 L762.29 521.22 L760.04 519.59 L757.81 517.96 L755.58 516.33 L753.37 514.69 L751.16 513.06 L748.97 511.43 L746.79 509.8 L744.62 508.17 L742.47 506.53 L740.32 504.9 L738.19 503.27 L736.07 501.64 L733.97 500.01 L731.87 498.38 L729.79 496.74 L727.73 495.11 L725.67 493.48 L723.63 491.85 L721.61 490.22 L719.59 488.58 L717.59 486.95 L715.61 485.32 L713.64 483.69 L711.68 482.06 L709.74 480.42 L707.81 478.79 L705.9 477.16 L704 475.53 L702.12 473.9 L700.25 472.27 L698.4 470.63 L696.57 469 L694.75 467.37 L692.94 465.74 L691.15 464.11 L689.38 462.47 L687.62 460.84 L685.88 459.21 L684.16 457.58 L682.45 455.95 L680.76 454.31 L679.09 452.68 L677.43 451.05 L675.79 449.42 L674.17 447.79 L672.57 446.15 L670.98 444.52 L669.41 442.89 L667.86 441.26 L666.33 439.63 L664.81 438 L663.31 436.36 L661.83 434.73 L660.37 433.1 L658.93 431.47 L657.51 429.84 L656.1 428.2 L654.71 426.57 L653.35 424.94 L652 423.31 L650.67 421.68 L649.36 420.04 L648.06 418.41 L646.79 416.78 L645.54 415.15 L644.31 413.52 L643.09 411.89 L641.9 410.25 L640.73 408.62 L639.57 406.99 L638.44 405.36 L637.33 403.73 L636.23 402.09 L635.16 400.46 L634.11 398.83 L633.07 397.2 L632.06 395.57 L631.07 393.93 L630.1 392.3 L629.15 390.67 L628.22 389.04 L627.31 387.41 L626.43 385.78 L625.56 384.14 L624.71 382.51 L623.89 380.88 L623.09 379.25 L622.31 377.62 L621.55 375.98 L620.81 374.35 L620.09 372.72 L619.39 371.09 L618.72 369.46 L618.07 367.82 L617.44 366.19 L616.83 364.56 L616.24 362.93 L615.67 361.3 L615.13 359.67 L614.61 358.03 L614.11 356.4 L613.63 354.77 L613.17 353.14 L612.74 351.51 L612.33 349.87 L611.94 348.24 L611.57 346.61 L611.22 344.98 L610.9 343.35 L610.6 341.71 L610.32 340.08 L610.06 338.45 L609.83 336.82 L609.62 335.19 L609.43 333.56 L609.26 331.92 L609.11 330.29 L608.99 328.66 L608.89 327.03 L608.81 325.4 L608.76 323.76 L608.72 322.13 L608.71 320.5 L608.72 318.87 L608.76 317.24 L608.81 315.6 L608.89 313.97 L608.99 312.34 L609.11 310.71 L609.26 309.08 L609.43 307.44 L609.62 305.81 L609.83 304.18 L610.06 302.55 L610.32 300.92 L610.6 299.29 L610.9 297.65 L611.22 296.02 L611.57 294.39 L611.94 292.76 L612.33 291.13 L612.74 289.49 L613.17 287.86 L613.63 286.23 L614.11 284.6 L614.61 282.97 L615.13 281.33 L615.67 279.7 L616.24 278.07 L616.83 276.44 L617.44 274.81 L618.07 273.18 L618.72 271.54 L619.39 269.91 L620.09 268.28 L620.81 266.65 L621.55 265.02 L622.31 263.38 L623.09 261.75 L623.89 260.12 L624.71 258.49 L625.56 256.86 L626.43 255.22 L627.31 253.59 L628.22 251.96 L629.15 250.33 L630.1 248.7 L631.07 247.07 L632.06 245.43 L633.07 243.8 L634.11 242.17 L635.16 240.54 L636.23 238.91 L637.33 237.27 L638.44 235.64 L639.57 234.01 L640.73 232.38 L641.9 230.75 L643.09 229.11 L644.31 227.48 L645.54 225.85 L646.79 224.22 L648.06 222.59 L649.36 220.96 L650.67 219.32 L652 217.69 L653.35 216.06 L654.71 214.43 L656.1 212.8 L657.51 211.16 L658.93 209.53 L660.37 207.9 L661.83 206.27 L663.31 204.64 L664.81 203 L666.33 201.37 L667.86 199.74 L669.41 198.11 L670.98 196.48 L672.57 194.85 L674.17 193.21 L675.79 191.58 L677.43 189.95 L679.09 188.32 L680.76 186.69 L682.45 185.05 L684.16 183.42 L685.88 181.79 L687.62 180.16 L689.38 178.53 L691.15 176.89 L692.94 175.26 L694.75 173.63 L696.57 172 L698.4 170.37 L700.25 168.73 L702.12 167.1 L704 165.47 L705.9 163.84 L707.81 162.21 L709.74 160.58 L711.68 158.94 L713.64 157.31 L715.61 155.68 L717.59 154.05 L719.59 152.42 L721.61 150.78 L723.63 149.15 L725.67 147.52 L727.73 145.89 L729.79 144.26 L731.87 142.62 L733.97 140.99 L736.07 139.36 L738.19 137.73 L740.32 136.1 L742.47 134.47 L744.62 132.83 L746.79 131.2 L748.97 129.57 L751.16 127.94 L753.37 126.31 L755.58 124.67 L757.81 123.04 L760.04 121.41 L762.29 119.78 L764.55 118.15 L766.82 116.51 L769.1 114.88 L771.38 113.25 L773.68 111.62 L775.99 109.99 L778.31 108.36 L780.64 106.72 L782.98 105.09 L785.32 103.46 L787.68 101.83 L790.04 100.2 L792.41 98.56 L794.79 96.93 L797.18 95.3 L799.58 93.67 L801.99 92.04 L804.4 90.4 L806.82 88.77 L809.25 87.14 L811.68 85.51 L814.12 83.88 L816.57 82.25 L819.02 80.61 L821.48 78.98 L823.95 77.35 L826.42 75.72 L828.9 74.09 L831.39 72.45 L833.88 70.82 L836.37 69.19 L838.87 67.56 L841.38 65.93 L843.89 64.29 L846.4 62.66 L848.92 61.03 L851.44 59.4 L853.97 57.77 L856.5 56.13 L859.03 54.5 L861.57 52.87 L864.11 51.24 L866.65 49.61 L869.2 47.98 L871.75 46.34 L874.3 44.71 L876.85 43.08 L879.4 41.45 L881.96 39.82 L884.52 38.18 L887.08 36.55 L889.64 34.92 L892.2 33.29 L894.76 31.66 L897.32 30.02 L899.89 28.39 L902.45 26.76"/>
<path d="M902.45 614.24 L900.31 612.61 L898.18 610.98 L896.04 609.34 L893.91 607.71 L891.77 606.08 L889.64 604.45 L887.51 602.82 L885.37 601.18 L883.24 599.55 L881.12 597.92 L878.99 596.29 L876.86 594.66 L874.74 593.02 L872.62 591.39 L870.5 589.76 L868.38 588.13 L866.27 586.5 L864.16 584.87 L862.05 583.23 L859.94 581.6 L857.84 579.97 L855.74 578.34 L853.65 576.71 L851.56 575.07 L849.47 573.44 L847.39 571.81 L845.31 570.18 L843.23 568.55 L841.16 566.91 L839.1 565.28 L837.03 563.65 L834.98 562.02 L832.93 560.39 L830.88 558.75 L828.84 557.12 L826.81 555.49 L824.78 553.86 L822.76 552.23 L820.74 550.6 L818.73 548.96 L816.73 547.33 L814.73 545.7 L812.74 544.07 L810.75 542.44 L808.78 540.8 L806.81 539.17 L804.84 537.54 L802.89 535.91 L800.94 534.28 L799 532.64 L797.07 531.01 L795.14 529.38 L793.23 527.75 L791.32 526.12 L789.42 524.49 L787.53 522.85 L785.65 521.22 L783.78 519.59 L781.91 517.96 L780.06 516.33 L778.21 514.69 L776.38 513.06 L774.55 511.43 L772.74 509.8 L770.93 508.17 L769.13 506.53 L767.35 504.9 L765.57 503.27 L763.8 501.64 L762.05 500.01 L760.3 498.38 L758.57 496.74 L756.85 495.11 L755.14 493.48 L753.44 491.85 L751.75 490.22 L750.07 488.58 L748.4 486.95 L746.75 485.32 L745.11 483.69 L743.48 482.06 L741.86 480.42 L740.25 478.79 L738.66 477.16 L737.08 475.53 L735.51 473.9 L733.95 472.27 L732.41 470.63 L730.88 469 L729.36 467.37 L727.86 465.74 L726.37 464.11 L724.89 462.47 L723.43 460.84 L721.98 459.21 L720.54 457.58 L719.12 455.95 L717.71 454.31 L716.32 452.68 L714.94 451.05 L713.57 449.42 L712.22 447.79 L710.88 446.15 L709.56 444.52 L708.25 442.89 L706.96 441.26 L705.68 439.63 L704.42 438 L703.17 436.36 L701.94 434.73 L700.72 433.1 L699.52 431.47 L698.33 429.84 L697.16 428.2 L696 426.57 L694.86 424.94 L693.74 423.31 L692.63 421.68 L691.54 420.04 L690.46 418.41 L689.4 416.78 L688.36 415.15 L687.33 413.52 L686.32 411.89 L685.33 410.25 L684.35 408.62 L683.39 406.99 L682.44 405.36 L681.51 403.73 L680.6 402.09 L679.71 400.46 L678.83 398.83 L677.97 397.2 L677.13 395.57 L676.3 393.93 L675.49 392.3 L674.7 390.67 L673.93 389.04 L673.17 387.41 L672.43 385.78 L671.71 384.14 L671 382.51 L670.32 380.88 L669.65 379.25 L669 377.62 L668.36 375.98 L667.75 374.35 L667.15 372.72 L666.57 371.09 L666.01 369.46 L665.46 367.82 L664.94 366.19 L664.43 364.56 L663.94 362.93 L663.47 361.3 L663.02 359.67 L662.58 358.03 L662.16 356.4 L661.77 354.77 L661.39 353.14 L661.02 351.51 L660.68 349.87 L660.36 348.24 L660.05 346.61 L659.76 344.98 L659.49 343.35 L659.24 341.71 L659.01 340.08 L658.79 338.45 L658.6 336.82 L658.42 335.19 L658.26 333.56 L658.12 331.92 L658 330.29 L657.9 328.66 L657.82 327.03 L657.75 325.4 L657.7 323.76 L657.68 322.13 L657.67 320.5 L657.68 318.87 L657.7 317.24 L657.75 315.6 L657.82 313.97 L657.9 312.34 L658 310.71 L658.12 309.08 L658.26 307.44 L658.42 305.81 L658.6 304.18 L658.79 302.55 L659.01 300.92 L659.24 299.29 L659.49 297.65 L659.76 296.02 L660.05 294.39 L660.36 292.76 L660.68 291.13 L661.02 289.49 L661.39 287.86 L661.77 286.23 L662.16 284.6 L662.58 282.97 L663.02 281.33 L663.47 279.7 L663.94 278.07 L664.43 276.44 L664.94 274.81 L665.46 273.18 L666.01 271.54 L666.57 269.91 L667.15 268.28 L667.75 266.65 L668.36 265.02 L669 263.38 L669.65 261.75 L670.32 260.12 L671 258.49 L671.71 256.86 L672.43 255.22 L673.17 253.59 L673.93 251.96 L674.7 250.33 L675.49 248.7 L676.3 247.07 L677.13 245.43 L677.97 243.8 L678.83 242.17 L679.71 240.54 L680.6 238.91 L681.51 237.27 L682.44 235.64 L683.39 234.01 L684.35 232.38 L685.33 230.75 L686.32 229.11 L687.33 227.48 L688.36 225.85 L689.4 224.22 L690.46 222.59 L691.54 220.96 L692.63 219.32 L693.74 217.69 L694.86 216.06 L696 214.43 L697.16 212.8 L698.33 211.16 L699.52 209.53 L700.72 207.9 L701.94 206.27 L703.17 204.64 L704.42 203 L705.68 201.37 L706.96 199.74 L708.25 198.11 L709.56 196.48 L710.88 194.85 L712.22 193.21 L713.57 191.58 L714.94 189.95 L716.32 188.32 L717.71 186.69 L719.12 185.05 L720.54 183.42 L721.98 181.79 L723.43 180.16 L724.89 178.53 L726.37 176.89 L727.86 175.26 L729.36 173.63 L730.88 172 L732.41 170.37 L733.95 168.73 L735.51 167.1 L737.08 165.47 L738.66 163.84 L740.25 162.21 L741.86 160.58 L743.48 158.94 L745.11 157.31 L746.75 155.68 L748.4 154.05 L750.07 152.42 L751.75 150.78 L753.44 149.15 L755.14 147.52 L756.85 145.89 L758.57 144.26 L760.3 142.62 L762.05 140.99 L763.8 139.36 L765.57 137.73 L767.35 136.1 L769.13 134.47 L770.93 132.83 L772.74 131.2 L774.55 129.57 L776.38 127.94 L778.21 126.31 L780.06 124.67 L781.91 123.04 L783.78 121.41 L785.65 119.78 L787.53 118.15 L789.42 116.51 L791.32 114.88 L793.23 113.25 L795.14 111.62 L797.07 109.99 L799 108.36 L800.94 106.72 L802.89 105.09 L804.84 103.46 L806.81 101.83 L808.78 100.2 L810.75 98.56 L812.74 96.93 L814.73 95.3 L816.73 93.67 L818.73 92.04 L820.74 90.4 L822.76 88.77 L824.78 87.14 L826.81 85.51 L828.84 83.88 L830.88 82.25 L832.93 80.61 L834.98 78.98 L837.03 77.35 L839.1 75.72 L841.16 74.09 L843.23 72.45 L845.31 70.82 L847.39 69.19 L849.47 67.56 L851.56 65.93 L853.65 64.29 L855.74 62.66 L857.84 61.03 L859.94 59.4 L862.05 57.77 L864.16 56.13 L866.27 54.5 L868.38 52.87 L870.5 51.24 L872.62 49.61 L874.74 47.98 L876.86 46.34 L878.99 44.71 L881.12 43.08 L883.24 41.45 L885.37 39.82 L887.51 38.18 L889.64 36.55 L891.77 34.92 L893.91 33.29 L896.04 31.66 L898.18 30.02 L900.31 28.39 L902.45 26.76"/>
<path d="M902.45 614.24 L900.74 612.61 L899.03 610.98 L897.32 609.34 L895.62 607.71 L893.91 606.08 L892.2 604.45 L890.5 602.82 L888.79 601.18 L887.09 599.55 L885.38 597.92 L883.68 596.29 L881.98 594.66 L880.28 593.02 L878.58 591.39 L876.89 589.76 L875.2 588.13 L873.51 586.5 L871.82 584.87 L870.13 583.23 L868.45 581.6 L866.76 579.97 L865.08 578.34 L863.41 576.71 L861.74 575.07 L860.07 573.44 L858.4 571.81 L856.74 570.18 L855.08 568.55 L853.42 566.91 L851.77 565.28 L850.12 563.65 L848.47 562.02 L846.83 560.39 L845.2 558.75 L843.56 557.12 L841.94 555.49 L840.31 553.86 L838.7 552.23 L837.08 550.6 L835.47 548.96 L833.87 547.33 L832.27 545.7 L830.68 544.07 L829.09 542.44 L827.51 540.8 L825.93 539.17 L824.36 537.54 L822.8 535.91 L821.24 534.28 L819.69 532.64 L818.14 531.01 L816.61 529.38 L815.07 527.75 L813.55 526.12 L812.03 524.49 L810.52 522.85 L809.01 521.22 L807.51 519.59 L806.02 517.96 L804.54 516.33 L803.06 514.69 L801.59 513.06 L800.13 511.43 L798.68 509.8 L797.23 508.17 L795.8 506.53 L794.37 504.9 L792.95 503.27 L791.53 501.64 L790.13 500.01 L788.73 498.38 L787.35 496.74 L785.97 495.11 L784.6 493.48 L783.24 491.85 L781.89 490.22 L780.55 488.58 L779.21 486.95 L777.89 485.32 L776.58 483.69 L775.27 482.06 L773.98 480.42 L772.69 478.79 L771.42 477.16 L770.15 475.53 L768.9 473.9 L767.65 472.27 L766.42 470.63 L765.19 469 L763.98 467.37 L762.78 465.74 L761.58 464.11 L760.4 462.47 L759.23 460.84 L758.07 459.21 L756.92 457.58 L755.79 455.95 L754.66 454.31 L753.54 452.68 L752.44 451.05 L751.35 449.42 L750.26 447.79 L749.2 446.15 L748.14 444.52 L747.09 442.89 L746.06 441.26 L745.03 439.63 L744.02 438 L743.03 436.36 L742.04 434.73 L741.06 433.1 L740.1 431.47 L739.15 429.84 L738.22 428.2 L737.29 426.57 L736.38 424.94 L735.48 423.31 L734.59 421.68 L733.72 420.04 L732.86 418.41 L732.01 416.78 L731.18 415.15 L730.35 413.52 L729.55 411.89 L728.75 410.25 L727.97 408.62 L727.2 406.99 L726.44 405.36 L725.7 403.73 L724.97 402.09 L724.26 400.46 L723.55 398.83 L722.87 397.2 L722.19 395.57 L721.53 393.93 L720.88 392.3 L720.25 390.67 L719.63 389.04 L719.03 387.41 L718.43 385.78 L717.86 384.14 L717.29 382.51 L716.74 380.88 L716.21 379.25 L715.69 377.62 L715.18 375.98 L714.69 374.35 L714.21 372.72 L713.75 371.09 L713.3 369.46 L712.86 367.82 L712.44 366.19 L712.03 364.56 L711.64 362.93 L711.27 361.3 L710.9 359.67 L710.56 358.03 L710.22 356.4 L709.9 354.77 L709.6 353.14 L709.31 351.51 L709.04 349.87 L708.78 348.24 L708.53 346.61 L708.3 344.98 L708.08 343.35 L707.88 341.71 L707.7 340.08 L707.53 338.45 L707.37 336.82 L707.23 335.19 L707.1 333.56 L706.99 331.92 L706.89 330.29 L706.81 328.66 L706.74 327.03 L706.69 325.4 L706.65 323.76 L706.63 322.13 L706.62 320.5 L706.63 318.87 L706.65 317.24 L706.69 315.6 L706.74 313.97 L706.81 312.34 L706.89 310.71 L706.99 309.08 L707.1 307.44 L707.23 305.81 L707.37 304.18 L707.53 302.55 L707.7 300.92 L707.88 299.29 L708.08 297.65 L708.3 296.02 L708.53 294.39 L708.78 292.76 L709.04 291.13 L709.31 289.49 L709.6 287.86 L709.9 286.23 L710.22 284.6 L710.56 282.97 L710.9 281.33 L711.27 279.7 L711.64 278.07 L712.03 276.44 L712.44 274.81 L712.86 273.18 L713.3 271.54 L713.75 269.91 L714.21 268.28 L714.69 266.65 L715.18 265.02 L715.69 263.38 L716.21 261.75 L716.74 260.12 L717.29 258.49 L717.86 256.86 L718.43 255.22 L719.03 253.59 L719.63 251.96 L720.25 250.33 L720.88 248.7 L721.53 247.07 L722.19 245.43 L722.87 243.8 L723.55 242.17 L724.26 240.54 L724.97 238.91 L725.7 237.27 L726.44 235.64 L727.2 234.01 L727.97 232.38 L728.75 230.75 L729.55 229.11 L730.35 227.48 L731.18 225.85 L732.01 224.22 L732.86 222.59 L733.72 220.96 L734.59 219.32 L735.48 217.69 L736.38 216.06 L737.29 214.43 L738.22 212.8 L739.15 211.16 L740.1 209.53 L741.06 207.9 L742.04 206.27 L743.03 204.64 L744.02 203 L745.03 201.37 L746.06 199.74 L747.09 198.11 L748.14 196.48 L749.2 194.85 L750.26 193.21 L751.35 191.58 L752.44 189.95 L753.54 188.32 L754.66 186.69 L755.79 185.05 L756.92 183.42 L758.07 181.79 L759.23 180.16 L760.4 178.53 L761.58 176.89 L762.78 175.26 L763.98 173.63 L765.19 172 L766.42 170.37 L767.65 168.73 L768.9 167.1 L770.15 165.47 L771.42 163.84 L772.69 162.21 L773.98 160.58 L775.27 158.94 L776.58 157.31 L777.89 155.68 L779.21 154.05 L780.55 152.42 L781.89 150.78 L783.24 149.15 L784.6 147.52 L785.97 145.89 L787.35 144.26 L788.73 142.62 L790.13 140.99 L791.53 139.36 L792.95 137.73 L794.37 136.1 L795.8 134.47 L797.23 132.83 L798.68 131.2 L800.13 129.57 L801.59 127.94 L803.06 126.31 L804.54 124.67 L806.02 123.04 L807.51 121.41 L809.01 119.78 L810.52 118.15 L812.03 116.51 L813.55 114.88 L815.07 113.25 L816.61 111.62 L818.14 109.99 L819.69 108.36 L821.24 106.72 L822.8 105.09 L824.36 103.46 L825.93 101.83 L827.51 100.2 L829.09 98.56 L830.68 96.93 L832.27 95.3 L833.87 93.67 L835.47 92.04 L837.08 90.4 L838.7 88.77 L840.31 87.14 L841.94 85.51 L843.56 83.88 L845.2 82.25 L846.83 80.61 L848.47 78.98 L850.12 77.35 L851.77 75.72 L853.42 74.09 L855.08 72.45 L856.74 70.82 L858.4 69.19 L860.07 67.56 L861.74 65.93 L863.41 64.29 L865.08 62.66 L866.76 61.03 L868.45 59.4 L870.13 57.77 L871.82 56.13 L873.51 54.5 L875.2 52.87 L876.89 51.24 L878.58 49.61 L880.28 47.98 L881.98 46.34 L883.68 44.71 L885.38 43.08 L887.09 41.45 L888.79 39.82 L890.5 38.18 L892.2 36.55 L893.91 34.92 L895.62 33.29 L897.32 31.66 L899.03 30.02 L900.74 28.39 L902.45 26.76"/>
<path d="M902.45 614.24 L901.17 612.61 L899.89 610.98 L898.61 609.34 L897.32 607.71 L896.04 606.08 L894.76 604.45 L893.48 602.82 L892.2 601.18 L890.93 599.55 L889.65 597.92 L888.37 596.29 L887.1 594.66 L885.82 593.02 L884.55 591.39 L883.28 589.76 L882.01 588.13 L880.74 586.5 L879.47 584.87 L878.21 583.23 L876.95 581.6 L875.69 579.97 L874.43 578.34 L873.17 576.71 L871.91 575.07 L870.66 573.44 L869.41 571.81 L868.16 570.18 L866.92 568.55 L865.68 566.91 L864.44 565.28 L863.2 563.65 L861.97 562.02 L860.74 560.39 L859.51 558.75 L858.29 557.12 L857.06 555.49 L855.85 553.86 L854.63 552.23 L853.42 550.6 L852.22 548.96 L851.02 547.33 L849.82 545.7 L848.62 544.07 L847.43 542.44 L846.25 540.8 L845.06 539.17 L843.89 537.54 L842.71 535.91 L841.54 534.28 L840.38 532.64 L839.22 531.01 L838.07 529.38 L836.92 527.75 L835.77 526.12 L834.63 524.49 L833.5 522.85 L832.37 521.22 L831.25 519.59 L830.13 517.96 L829.02 516.33 L827.91 514.69 L826.81 513.06 L825.71 511.43 L824.62 509.8 L823.54 508.17 L822.46 506.53 L821.39 504.9 L820.32 503.27 L819.26 501.64 L818.21 500.01 L817.16 498.38 L816.12 496.74 L815.09 495.11 L814.06 493.48 L813.04 491.85 L812.03 490.22 L811.02 488.58 L810.02 486.95 L809.03 485.32 L808.04 483.69 L807.07 482.06 L806.09 480.42 L805.13 478.79 L804.18 477.16 L803.23 475.53 L802.29 473.9 L801.35 472.27 L800.43 470.63 L799.51 469 L798.6 467.37 L797.7 465.74 L796.8 464.11 L795.91 462.47 L795.04 460.84 L794.17 459.21 L793.3 457.58 L792.45 455.95 L791.61 454.31 L790.77 452.68 L789.94 451.05 L789.12 449.42 L788.31 447.79 L787.51 446.15 L786.72 444.52 L785.93 442.89 L785.15 441.26 L784.39 439.63 L783.63 438 L782.88 436.36 L782.14 434.73 L781.41 433.1 L780.69 431.47 L779.98 429.84 L779.27 428.2 L778.58 426.57 L777.9 424.94 L777.22 423.31 L776.56 421.68 L775.9 420.04 L775.26 418.41 L774.62 416.78 L774 415.15 L773.38 413.52 L772.77 411.89 L772.18 410.25 L771.59 408.62 L771.01 406.99 L770.44 405.36 L769.89 403.73 L769.34 402.09 L768.8 400.46 L768.28 398.83 L767.76 397.2 L767.26 395.57 L766.76 393.93 L766.28 392.3 L765.8 390.67 L765.34 389.04 L764.88 387.41 L764.44 385.78 L764 384.14 L763.58 382.51 L763.17 380.88 L762.77 379.25 L762.38 377.62 L762 375.98 L761.63 374.35 L761.27 372.72 L760.92 371.09 L760.58 369.46 L760.26 367.82 L759.94 366.19 L759.64 364.56 L759.34 362.93 L759.06 361.3 L758.79 359.67 L758.53 358.03 L758.28 356.4 L758.04 354.77 L757.81 353.14 L757.59 351.51 L757.39 349.87 L757.19 348.24 L757.01 346.61 L756.84 344.98 L756.68 343.35 L756.52 341.71 L756.39 340.08 L756.26 338.45 L756.14 336.82 L756.03 335.19 L755.94 333.56 L755.85 331.92 L755.78 330.29 L755.72 328.66 L755.67 327.03 L755.63 325.4 L755.6 323.76 L755.59 322.13 L755.58 320.5 L755.59 318.87 L755.6 317.24 L755.63 315.6 L755.67 313.97 L755.72 312.34 L755.78 310.71 L755.85 309.08 L755.94 307.44 L756.03 305.81 L756.14 304.18 L756.26 302.55 L756.39 300.92 L756.52 299.29 L756.68 297.65 L756.84 296.02 L757.01 294.39 L757.19 292.76 L757.39 291.13 L757.59 289.49 L757.81 287.86 L758.04 286.23 L758.28 284.6 L758.53 282.97 L758.79 281.33 L759.06 279.7 L759.34 278.07 L759.64 276.44 L759.94 274.81 L760.26 273.18 L760.58 271.54 L760.92 269.91 L761.27 268.28 L761.63 266.65 L762 265.02 L762.38 263.38 L762.77 261.75 L763.17 260.12 L763.58 258.49 L764 256.86 L764.44 255.22 L764.88 253.59 L765.34 251.96 L765.8 250.33 L766.28 248.7 L766.76 247.07 L767.26 245.43 L767.76 243.8 L768.28 242.17 L768.8 240.54 L769.34 238.91 L769.89 237.27 L770.44 235.64 L771.01 234.01 L771.59 232.38 L772.18 230.75 L772.77 229.11 L773.38 227.48 L774 225.85 L774.62 224.22 L775.26 222.59 L775.9 220.96 L776.56 219.32 L777.22 217.69 L777.9 216.06 L778.58 214.43 L779.27 212.8 L779.98 211.16 L780.69 209.53 L781.41 207.9 L782.14 206.27 L782.88 204.64 L783.63 203 L784.39 201.37 L785.15 199.74 L785.93 198.11 L786.72 196.48 L787.51 194.85 L788.31 193.21 L789.12 191.58 L789.94 189.95 L790.77 188.32 L791.61 186.69 L792.45 185.05 L793.3 183.42 L794.17 181.79 L795.04 180.16 L795.91 178.53 L796.8 176.89 L797.7 175.26 L798.6 173.63 L799.51 172 L800.43 170.37 L801.35 168.73 L802.29 167.1 L803.23 165.47 L804.18 163.84 L805.13 162.21 L806.09 160.58 L807.07 158.94 L808.04 157.31 L809.03 155.68 L810.02 154.05 L811.02 152.42 L812.03 150.78 L813.04 149.15 L814.06 147.52 L815.09 145.89 L816.12 144.26 L817.16 142.62 L818.21 140.99 L819.26 139.36 L820.32 137.73 L821.39 136.1 L822.46 134.47 L823.54 132.83 L824.62 131.2 L825.71 129.57 L826.81 127.94 L827.91 126.31 L829.02 124.67 L830.13 123.04 L831.25 121.41 L832.37 119.78 L833.5 118.15 L834.63 116.51 L835.77 114.88 L836.92 113.25 L838.07 111.62 L839.22 109.99 L840.38 108.36 L841.54 106.72 L842.71 105.09 L843.89 103.46 L845.06 101.83 L846.25 100.2 L847.43 98.56 L848.62 96.93 L849.82 95.3 L851.02 93.67 L852.22 92.04 L853.42 90.4 L854.63 88.77 L855.85 87.14 L857.06 85.51 L858.29 83.88 L859.51 82.25 L860.74 80.61 L861.97 78.98 L863.2 77.35 L864.44 75.72 L865.68 74.09 L866.92 72.45 L868.16 70.82 L869.41 69.19 L870.66 67.56 L871.91 65.93 L873.17 64.29 L874.43 62.66 L875.69 61.03 L876.95 59.4 L878.21 57.77 L879.47 56.13 L880.74 54.5 L882.01 52.87 L883.28 51.24 L884.55 49.61 L885.82 47.98 L887.1 46.34 L888.37 44.71 L889.65 43.08 L890.93 41.45 L892.2 39.82 L893.48 38.18 L894.76 36.55 L896.04 34.92 L897.32 33.29 L898.61 31.66 L899.89 30.02 L901.17 28.39 L902.45 26.76"/>
<path d="M902.45 614.24 L901.6 612.61 L900.74 610.98 L899.89 609.34 L899.03 607.71 L898.18 606.08 L897.33 604.45 L896.47 602.82 L895.62 601.18 L894.77 599.55 L893.92 597.92 L893.07 596.29 L892.22 594.66 L891.37 593.02 L890.52 591.39 L889.67 589.76 L888.82 588.13 L887.98 586.5 L887.13 584.87 L886.29 583.23 L885.45 581.6 L884.61 579.97 L883.77 578.34 L882.93 576.71 L882.09 575.07 L881.26 573.44 L880.42 571.81 L879.59 570.18 L878.76 568.55 L877.93 566.91 L877.11 565.28 L876.28 563.65 L875.46 562.02 L874.64 560.39 L873.82 558.75 L873.01 557.12 L872.19 555.49 L871.38 553.86 L870.57 552.23 L869.77 550.6 L868.96 548.96 L868.16 547.33 L867.36 545.7 L866.56 544.07 L865.77 542.44 L864.98 540.8 L864.19 539.17 L863.41 537.54 L862.63 535.91 L861.85 534.28 L861.07 532.64 L860.3 531.01 L859.53 529.38 L858.76 527.75 L858 526.12 L857.24 524.49 L856.48 522.85 L855.73 521.22 L854.98 519.59 L854.24 517.96 L853.49 516.33 L852.76 514.69 L852.02 513.06 L851.29 511.43 L850.56 509.8 L849.84 508.17 L849.12 506.53 L848.41 504.9 L847.7 503.27 L846.99 501.64 L846.29 500.01 L845.59 498.38 L844.9 496.74 L844.21 495.11 L843.52 493.48 L842.84 491.85 L842.17 490.22 L841.5 488.58 L840.83 486.95 L840.17 485.32 L839.51 483.69 L838.86 482.06 L838.21 480.42 L837.57 478.79 L836.93 477.16 L836.3 475.53 L835.67 473.9 L835.05 472.27 L834.43 470.63 L833.82 469 L833.22 467.37 L832.61 465.74 L832.02 464.11 L831.43 462.47 L830.84 460.84 L830.26 459.21 L829.69 457.58 L829.12 455.95 L828.55 454.31 L828 452.68 L827.44 451.05 L826.9 449.42 L826.36 447.79 L825.82 446.15 L825.29 444.52 L824.77 442.89 L824.25 441.26 L823.74 439.63 L823.24 438 L822.74 436.36 L822.24 434.73 L821.76 433.1 L821.28 431.47 L820.8 429.84 L820.33 428.2 L819.87 426.57 L819.42 424.94 L818.97 423.31 L818.52 421.68 L818.09 420.04 L817.65 418.41 L817.23 416.78 L816.81 415.15 L816.4 413.52 L816 411.89 L815.6 410.25 L815.21 408.62 L814.82 406.99 L814.45 405.36 L814.08 403.73 L813.71 402.09 L813.35 400.46 L813 398.83 L812.66 397.2 L812.32 395.57 L811.99 393.93 L811.67 392.3 L811.35 390.67 L811.04 389.04 L810.74 387.41 L810.44 385.78 L810.15 384.14 L809.87 382.51 L809.6 380.88 L809.33 379.25 L809.07 377.62 L808.82 375.98 L808.57 374.35 L808.33 372.72 L808.1 371.09 L807.87 369.46 L807.66 367.82 L807.45 366.19 L807.24 364.56 L807.05 362.93 L806.86 361.3 L806.68 359.67 L806.5 358.03 L806.34 356.4 L806.18 354.77 L806.02 353.14 L805.88 351.51 L805.74 349.87 L805.61 348.24 L805.49 346.61 L805.37 344.98 L805.27 343.35 L805.17 341.71 L805.07 340.08 L804.99 338.45 L804.91 336.82 L804.84 335.19 L804.78 333.56 L804.72 331.92 L804.67 330.29 L804.63 328.66 L804.6 327.03 L804.57 325.4 L804.55 323.76 L804.54 322.13 L804.54 320.5 L804.54 318.87 L804.55 317.24 L804.57 315.6 L804.6 313.97 L804.63 312.34 L804.67 310.71 L804.72 309.08 L804.78 307.44 L804.84 305.81 L804.91 304.18 L804.99 302.55 L805.07 300.92 L805.17 299.29 L805.27 297.65 L805.37 296.02 L805.49 294.39 L805.61 292.76 L805.74 291.13 L805.88 289.49 L806.02 287.86 L806.18 286.23 L806.34 284.6 L806.5 282.97 L806.68 281.33 L806.86 279.7 L807.05 278.07 L807.24 276.44 L807.45 274.81 L807.66 273.18 L807.87 271.54 L808.1 269.91 L808.33 268.28 L808.57 266.65 L808.82 265.02 L809.07 263.38 L809.33 261.75 L809.6 260.12 L809.87 258.49 L810.15 256.86 L810.44 255.22 L810.74 253.59 L811.04 251.96 L811.35 250.33 L811.67 248.7 L811.99 247.07 L812.32 245.43 L812.66 243.8 L813 242.17 L813.35 240.54 L813.71 238.91 L814.08 237.27 L814.45 235.64 L814.82 234.01 L815.21 232.38 L815.6 230.75 L816 229.11 L816.4 227.48 L816.81 225.85 L817.23 224.22 L817.65 222.59 L818.09 220.96 L818.52 219.32 L818.97 217.69 L819.42 216.06 L819.87 214.43 L820.33 212.8 L820.8 211.16 L821.28 209.53 L821.76 207.9 L822.24 206.27 L822.74 204.64 L823.24 203 L823.74 201.37 L824.25 199.74 L824.77 198.11 L825.29 196.48 L825.82 194.85 L826.36 193.21 L826.9 191.58 L827.44 189.95 L828 188.32 L828.55 186.69 L829.12 185.05 L829.69 183.42 L830.26 181.79 L830.84 180.16 L831.43 178.53 L832.02 176.89 L832.61 175.26 L833.22 173.63 L833.82 172 L834.43 170.37 L835.05 168.73 L835.67 167.1 L836.3 165.47 L836.93 163.84 L837.57 162.21 L838.21 160.58 L838.86 158.94 L839.51 157.31 L840.17 155.68 L840.83 154.05 L841.5 152.42 L842.17 150.78 L842.84 149.15 L843.52 147.52 L844.21 145.89 L844.9 144.26 L845.59 142.62 L846.29 140.99 L846.99 139.36 L847.7 137.73 L848.41 136.1 L849.12 134.47 L849.84 132.83 L850.56 131.2 L851.29 129.57 L852.02 127.94 L852.76 126.31 L853.49 124.67 L854.24 123.04 L854.98 121.41 L855.73 119.78 L856.48 118.15 L857.24 116.51 L858 114.88 L858.76 113.25 L859.53 111.62 L860.3 109.99 L861.07 108.36 L861.85 106.72 L862.63 105.09 L863.41 103.46 L864.19 101.83 L864.98 100.2 L865.77 98.56 L866.56 96.93 L867.36 95.3 L868.16 93.67 L868.96 92.04 L869.77 90.4 L870.57 88.77 L871.38 87.14 L872.19 85.51 L873.01 83.88 L873.82 82.25 L874.64 80.61 L875.46 78.98 L876.28 77.35 L877.11 75.72 L877.93 74.09 L878.76 72.45 L879.59 70.82 L880.42 69.19 L881.26 67.56 L882.09 65.93 L882.93 64.29 L883.77 62.66 L884.61 61.03 L885.45 59.4 L886.29 57.77 L887.13 56.13 L887.98 54.5 L888.82 52.87 L889.67 51.24 L890.52 49.61 L891.37 47.98 L892.22 46.34 L893.07 44.71 L893.92 43.08 L894.77 41.45 L895.62 39.82 L896.47 38.18 L897.33 36.55 L898.18 34.92 L899.03 33.29 L899.89 31.66 L900.74 30.02 L901.6 28.39 L902.45 26.76"/>
<path d="M902.45 614.24 L902.02 612.61 L901.6 610.98 L901.17 609.34 L900.74 607.71 L900.31 606.08 L899.89 604.45 L899.46 602.82 L899.03 601.18 L898.61 599.55 L898.18 597.92 L897.76 596.29 L897.33 594.66 L896.91 593.02 L896.48 591.39 L896.06 589.76 L895.64 588.13 L895.21 586.5 L894.79 584.87 L894.37 583.23 L893.95 581.6 L893.53 579.97 L893.11 578.34 L892.69 576.71 L892.27 575.07 L891.85 573.44 L891.44 571.81 L891.02 570.18 L890.61 568.55 L890.19 566.91 L889.78 565.28 L889.37 563.65 L888.96 562.02 L888.55 560.39 L888.14 558.75 L887.73 557.12 L887.32 555.49 L886.92 553.86 L886.51 552.23 L886.11 550.6 L885.71 548.96 L885.31 547.33 L884.91 545.7 L884.51 544.07 L884.11 542.44 L883.72 540.8 L883.32 539.17 L882.93 537.54 L882.54 535.91 L882.15 534.28 L881.76 532.64 L881.37 531.01 L880.99 529.38 L880.61 527.75 L880.22 526.12 L879.84 524.49 L879.47 522.85 L879.09 521.22 L878.72 519.59 L878.34 517.96 L877.97 516.33 L877.6 514.69 L877.24 513.06 L876.87 511.43 L876.51 509.8 L876.15 508.17 L875.79 506.53 L875.43 504.9 L875.07 503.27 L874.72 501.64 L874.37 500.01 L874.02 498.38 L873.67 496.74 L873.33 495.11 L872.99 493.48 L872.65 491.85 L872.31 490.22 L871.97 488.58 L871.64 486.95 L871.31 485.32 L870.98 483.69 L870.66 482.06 L870.33 480.42 L870.01 478.79 L869.69 477.16 L869.38 475.53 L869.06 473.9 L868.75 472.27 L868.44 470.63 L868.14 469 L867.83 467.37 L867.53 465.74 L867.23 464.11 L866.94 462.47 L866.65 460.84 L866.36 459.21 L866.07 457.58 L865.78 455.95 L865.5 454.31 L865.22 452.68 L864.95 451.05 L864.67 449.42 L864.4 447.79 L864.14 446.15 L863.87 444.52 L863.61 442.89 L863.35 441.26 L863.1 439.63 L862.84 438 L862.59 436.36 L862.35 434.73 L862.1 433.1 L861.86 431.47 L861.63 429.84 L861.39 428.2 L861.16 426.57 L860.93 424.94 L860.71 423.31 L860.49 421.68 L860.27 420.04 L860.05 418.41 L859.84 416.78 L859.63 415.15 L859.43 413.52 L859.22 411.89 L859.03 410.25 L858.83 408.62 L858.64 406.99 L858.45 405.36 L858.26 403.73 L858.08 402.09 L857.9 400.46 L857.73 398.83 L857.55 397.2 L857.39 395.57 L857.22 393.93 L857.06 392.3 L856.9 390.67 L856.75 389.04 L856.59 387.41 L856.45 385.78 L856.3 384.14 L856.16 382.51 L856.02 380.88 L855.89 379.25 L855.76 377.62 L855.63 375.98 L855.51 374.35 L855.39 372.72 L855.27 371.09 L855.16 369.46 L855.05 367.82 L854.95 366.19 L854.85 364.56 L854.75 362.93 L854.65 361.3 L854.56 359.67 L854.48 358.03 L854.39 356.4 L854.31 354.77 L854.24 353.14 L854.16 351.51 L854.1 349.87 L854.03 348.24 L853.97 346.61 L853.91 344.98 L853.86 343.35 L853.81 341.71 L853.76 340.08 L853.72 338.45 L853.68 336.82 L853.64 335.19 L853.61 333.56 L853.58 331.92 L853.56 330.29 L853.54 328.66 L853.52 327.03 L853.51 325.4 L853.5 323.76 L853.5 322.13 L853.49 320.5 L853.5 318.87 L853.5 317.24 L853.51 315.6 L853.52 313.97 L853.54 312.34 L853.56 310.71 L853.58 309.08 L853.61 307.44 L853.64 305.81 L853.68 304.18 L853.72 302.55 L853.76 300.92 L853.81 299.29 L853.86 297.65 L853.91 296.02 L853.97 294.39 L854.03 292.76 L854.1 291.13 L854.16 289.49 L854.24 287.86 L854.31 286.23 L854.39 284.6 L854.48 282.97 L854.56 281.33 L854.65 279.7 L854.75 278.07 L854.85 276.44 L854.95 274.81 L855.05 273.18 L855.16 271.54 L855.27 269.91 L855.39 268.28 L855.51 266.65 L855.63 265.02 L855.76 263.38 L855.89 261.75 L856.02 260.12 L856.16 258.49 L856.3 256.86 L856.45 255.22 L856.59 253.59 L856.75 251.96 L856.9 250.33 L857.06 248.7 L857.22 247.07 L857.39 245.43 L857.55 243.8 L857.73 242.17 L857.9 240.54 L858.08 238.91 L858.26 237.27 L858.45 235.64 L858.64 234.01 L858.83 232.38 L859.03 230.75 L859.22 229.11 L859.43 227.48 L859.63 225.85 L859.84 224.22 L860.05 222.59 L860.27 220.96 L860.49 219.32 L860.71 217.69 L860.93 216.06 L861.16 214.43 L861.39 212.8 L861.63 211.16 L861.86 209.53 L862.1 207.9 L862.35 206.27 L862.59 204.64 L862.84 203 L863.1 201.37 L863.35 199.74 L863.61 198.11 L863.87 196.48 L864.14 194.85 L864.4 193.21 L864.67 191.58 L864.95 189.95 L865.22 188.32 L865.5 186.69 L865.78 185.05 L866.07 183.42 L866.36 181.79 L866.65 180.16 L866.94 178.53 L867.23 176.89 L867.53 175.26 L867.83 173.63 L868.14 172 L868.44 170.37 L868.75 168.73 L869.06 167.1 L869.38 165.47 L869.69 163.84 L870.01 162.21 L870.33 160.58 L870.66 158.94 L870.98 157.31 L871.31 155.68 L871.64 154.05 L871.97 152.42 L872.31 150.78 L872.65 149.15 L872.99 147.52 L873.33 145.89 L873.67 144.26 L874.02 142.62 L874.37 140.99 L874.72 139.36 L875.07 137.73 L875.43 136.1 L875.79 134.47 L876.15 132.83 L876.51 131.2 L876.87 129.57 L877.24 127.94 L877.6 126.31 L877.97 124.67 L878.34 123.04 L878.72 121.41 L879.09 119.78 L879.47 118.15 L879.84 116.51 L880.22 114.88 L880.61 113.25 L880.99 111.62 L881.37 109.99 L881.76 108.36 L882.15 106.72 L882.54 105.09 L882.93 103.46 L883.32 101.83 L883.72 100.2 L884.11 98.56 L884.51 96.93 L884.91 95.3 L885.31 93.67 L885.71 92.04 L886.11 90.4 L886.51 88.77 L886.92 87.14 L887.32 85.51 L887.73 83.88 L888.14 82.25 L888.55 80.61 L888.96 78.98 L889.37 77.35 L889.78 75.72 L890.19 74.09 L890.61 72.45 L891.02 70.82 L891.44 69.19 L891.85 67.56 L892.27 65.93 L892.69 64.29 L893.11 62.66 L893.53 61.03 L893.95 59.4 L894.37 57.77 L894.79 56.13 L895.21 54.5 L895.64 52.87 L896.06 51.24 L896.48 49.61 L896.91 47.98 L897.33 46.34 L897.76 44.71 L898.18 43.08 L898.61 41.45 L899.03 39.82 L899.46 38.18 L899.89 36.55 L900.31 34.92 L900.74 33.29 L901.17 31.66 L901.6 30.02 L902.02 28.39 L902.45 26.76"/>
<path d="M902.45 614.24 L902.45 612.61 L902.45 610.98 L902.45 609.34 L902.45 607.71 L902.45 606.08 L902.45 604.45 L902.45 602.82 L902.45 601.18 L902.45 599.55 L902.45 597.92 L902.45 596.29 L902.45 594.66 L902.45 593.02 L902.45 591.39 L902.45 589.76 L902.45 588.13 L902.45 586.5 L902.45 584.87 L902.45 583.23 L902.45 581.6 L902.45 579.97 L902.45 578.34 L902.45 576.71 L902.45 575.07 L902.45 573.44 L902.45 571.81 L902.45 570.18 L902.45 568.55 L902.45 566.91 L902.45 565.28 L902.45 563.65 L902.45 562.02 L902.45 560.39 L902.45 558.75 L902.45 557.12 L902.45 555.49 L902.45 553.86 L902.45 552.23 L902.45 550.6 L902.45 548.96 L902.45 547.33 L902.45 545.7 L902.45 544.07 L902.45 542.44 L902.45 540.8 L902.45 539.17 L902.45 537.54 L902.45 535.91 L902.45 534.28 L902.45 532.64 L902.45 531.01 L902.45 529.38 L902.45 527.75 L902.45 526.12 L902.45 524.49 L902.45 522.85 L902.45 521.22 L902.45 519.59 L902.45 517.96 L902.45 516.33 L902.45 514.69 L902.45 513.06 L902.45 511.43 L902.45 509.8 L902.45 508.17 L902.45 506.53 L902.45 504.9 L902.45 503.27 L902.45 501.64 L902.45 500.01 L902.45 498.38 L902.45 496.74 L902.45 495.11 L902.45 493.48 L902.45 491.85 L902.45 490.22 L902.45 488.58 L902.45 486.95 L902.45 485.32 L902.45 483.69 L902.45 482.06 L902.45 480.42 L902.45 478.79 L902.45 477.16 L902.45 475.53 L902.45 473.9 L902.45 472.27 L902.45 470.63 L902.45 469 L902.45 467.37 L902.45 465.74 L902.45 464.11 L902.45 462.47 L902.45 460.84 L902.45 459.21 L902.45 457.58 L902.45 455.95 L902.45 454.31 L902.45 452.68 L902.45 451.05 L902.45 449.42 L902.45 447.79 L902.45 446.15 L902.45 444.52 L902.45 442.89 L902.45 441.26 L902.45 439.63 L902.45 438 L902.45 436.36 L902.45 434.73 L902.45 433.1 L902.45 431.47 L902.45 429.84 L902.45 428.2 L902.45 426.57 L902.45 424.94 L902.45 423.31 L902.45 421.68 L902.45 420.04 L902.45 418.41 L902.45 416.78 L902.45 415.15 L902.45 413.52 L902.45 411.89 L902.45 410.25 L902.45 408.62 L902.45 406.99 L902.45 405.36 L902.45 403.73 L902.45 402.09 L902.45 400.46 L902.45 398.83 L902.45 397.2 L902.45 395.57 L902.45 393.93 L902.45 392.3 L902.45 390.67 L902.45 389.04 L902.45 387.41 L902.45 385.78 L902.45 384.14 L902.45 382.51 L902.45 380.88 L902.45 379.25 L902.45 377.62 L902.45 375.98 L902.45 374.35 L902.45 372.72 L902.45 371.09 L902.45 369.46 L902.45 367.82 L902.45 366.19 L902.45 364.56 L902.45 362.93 L902.45 361.3 L902.45 359.67 L902.45 358.03 L902.45 356.4 L902.45 354.77 L902.45 353.14 L902.45 351.51 L902.45 349.87 L902.45 348.24 L902.45 346.61 L902.45 344.98 L902.45 343.35 L902.45 341.71 L902.45 340.08 L902.45 338.45 L902.45 336.82 L902.45 335.19 L902.45 333.56 L902.45 331.92 L902.45 330.29 L902.45 328.66 L902.45 327.03 L902.45 325.4 L902.45 323.76 L902.45 322.13 L902.45 320.5 L902.45 318.87 L902.45 317.24 L902.45 315.6 L902.45 313.97 L902.45 312.34 L902.45 310.71 L902.45 309.08 L902.45 307.44 L902.45 305.81 L902.45 304.18 L902.45 302.55 L902.45 300.92 L902.45 299.29 L902.45 297.65 L902.45 296.02 L902.45 294.39 L902.45 292.76 L902.45 291.13 L902.45 289.49 L902.45 287.86 L902.45 286.23 L902.45 284.6 L902.45 282.97 L902.45 281.33 L902.45 279.7 L902.45 278.07 L902.45 276.44 L902.45 274.81 L902.45 273.18 L902.45 271.54 L902.45 269.91 L902.45 268.28 L902.45 266.65 L902.45 265.02 L902.45 263.38 L902.45 261.75 L902.45 260.12 L902.45 258.49 L902.45 256.86 L902.45 255.22 L902.45 253.59 L902.45 251.96 L902.45 250.33 L902.45 248.7 L902.45 247.07 L902.45 245.43 L902.45 243.8 L902.45 242.17 L902.45 240.54 L902.45 238.91 L902.45 237.27 L902.45 235.64 L902.45 234.01 L902.45 232.38 L902.45 230.75 L902.45 229.11 L902.45 227.48 L902.45 225.85 L902.45 224.22 L902.45 222.59 L902.45 220.96 L902.45 219.32 L902.45 217.69 L902.45 216.06 L902.45 214.43 L902.45 212.8 L902.45 211.16 L902.45 209.53 L902.45 207.9 L902.45 206.27 L902.45 204.64 L902.45 203 L902.45 201.37 L902.45 199.74 L902.45 198.11 L902.45 196.48 L902.45 194.85 L902.45 193.21 L902.45 191.58 L902.45 189.95 L902.45 188.32 L902.45 186.69 L902.45 185.05 L902.45 183.42 L902.45 181.79 L902.45 180.16 L902.45 178.53 L902.45 176.89 L902.45 175.26 L902.45 173.63 L902.45 172 L902.45 170.37 L902.45 168.73 L902.45 167.1 L902.45 165.47 L902.45 163.84 L902.45 162.21 L902.45 160.58 L902.45 158.94 L902.45 157.31 L902.45 155.68 L902.45 154.05 L902.45 152.42 L902.45 150.78 L902.45 149.15 L902.45 147.52 L902.45 145.89 L902.45 144.26 L902.45 142.62 L902.45 140.99 L902.45 139.36 L902.45 137.73 L902.45 136.1 L902.45 134.47 L902.45 132.83 L902.45 131.2 L902.45 129.57 L902.45 127.94 L902.45 126.31 L902.45 124.67 L902.45 123.04 L902.45 121.41 L902.45 119.78 L902.45 118.15 L902.45 116.51 L902.45 114.88 L902.45 113.25 L902.45 111.62 L902.45 109.99 L902.45 108.36 L902.45 106.72 L902.45 105.09 L902.45 103.46 L902.45 101.83 L902.45 100.2 L902.45 98.56 L902.45 96.93 L902.45 95.3 L902.45 93.67 L902.45 92.04 L902.45 90.4 L902.45 88.77 L902.45 87.14 L902.45 85.51 L902.45 83.88 L902.45 82.25 L902.45 80.61 L902.45 78.98 L902.45 77.35 L902.45 75.72 L902.45 74.09 L902.45 72.45 L902.45 70.82 L902.45 69.19 L902.45 67.56 L902.45 65.93 L902.45 64.29 L902.45 62.66 L902.45 61.03 L902.45 59.4 L902.45 57.77 L902.45 56.13 L902.45 54.5 L902.45 52.87 L902.45 51.24 L902.45 49.61 L902.45 47.98 L902.45 46.34 L902.45 44.71 L902.45 43.08 L902.45 41.45 L902.45 39.82 L902.45 38.18 L902.45 36.55 L902.45 34.92 L902.45 33.29 L902.45 31.66 L902.45 30.02 L902.45 28.39 L902.45 26.76"/>
<path d="M902.45 614.24 L902.88 612.61 L903.3 610.98 L903.73 609.34 L904.16 607.71 L904.59 606.08 L905.01 604.45 L905.44 602.82 L905.87 601.18 L906.29 599.55 L906.72 597.92 L907.14 596.29 L907.57 594.66 L907.99 593.02 L908.42 591.39 L908.84 589.76 L909.26 588.13 L909.69 586.5 L910.11 584.87 L910.53 583.23 L910.95 581.6 L911.37 579.97 L911.79 578.34 L912.21 576.71 L912.63 575.07 L913.05 573.44 L913.46 571.81 L913.88 570.18 L914.29 568.55 L914.71 566.91 L915.12 565.28 L915.53 563.65 L915.94 562.02 L916.35 560.39 L916.76 558.75 L917.17 557.12 L917.58 555.49 L917.98 553.86 L918.39 552.23 L918.79 550.6 L919.19 548.96 L919.59 547.33 L919.99 545.7 L920.39 544.07 L920.79 542.44 L921.18 540.8 L921.58 539.17 L921.97 537.54 L922.36 535.91 L922.75 534.28 L923.14 532.64 L923.53 531.01 L923.91 529.38 L924.29 527.75 L924.68 526.12 L925.06 524.49 L925.43 522.85 L925.81 521.22 L926.18 519.59 L926.56 517.96 L926.93 516.33 L927.3 514.69 L927.66 513.06 L928.03 511.43 L928.39 509.8 L928.75 508.17 L929.11 506.53 L929.47 504.9 L929.83 503.27 L930.18 501.64 L930.53 500.01 L930.88 498.38 L931.23 496.74 L931.57 495.11 L931.91 493.48 L932.25 491.85 L932.59 490.22 L932.93 488.58 L933.26 486.95 L933.59 485.32 L933.92 483.69 L934.24 482.06 L934.57 480.42 L934.89 478.79 L935.21 477.16 L935.52 475.53 L935.84 473.9 L936.15 472.27 L936.46 470.63 L936.76 469 L937.07 467.37 L937.37 465.74 L937.67 464.11 L937.96 462.47 L938.25 460.84 L938.54 459.21 L938.83 457.58 L939.12 455.95 L939.4 454.31 L939.68 452.68 L939.95 451.05 L940.23 449.42 L940.5 447.79 L940.76 446.15 L941.03 444.52 L941.29 442.89 L941.55 441.26 L941.8 439.63 L942.06 438 L942.31 436.36 L942.55 434.73 L942.8 433.1 L943.04 431.47 L943.27 429.84 L943.51 428.2 L943.74 426.57 L943.97 424.94 L944.19 423.31 L944.41 421.68 L944.63 420.04 L944.85 418.41 L945.06 416.78 L945.27 415.15 L945.47 413.52 L945.68 411.89 L945.87 410.25 L946.07 408.62 L946.26 406.99 L946.45 405.36 L946.64 403.73 L946.82 402.09 L947 400.46 L947.17 398.83 L947.35 397.2 L947.51 395.57 L947.68 393.93 L947.84 392.3 L948 390.67 L948.15 389.04 L948.31 387.41 L948.45 385.78 L948.6 384.14 L948.74 382.51 L948.88 380.88 L949.01 379.25 L949.14 377.62 L949.27 375.98 L949.39 374.35 L949.51 372.72 L949.63 371.09 L949.74 369.46 L949.85 367.82 L949.95 366.19 L950.05 364.56 L950.15 362.93 L950.25 361.3 L950.34 359.67 L950.42 358.03 L950.51 356.4 L950.59 354.77 L950.66 353.14 L950.74 351.51 L950.8 349.87 L950.87 348.24 L950.93 346.61 L950.99 344.98 L951.04 343.35 L951.09 341.71 L951.14 340.08 L951.18 338.45 L951.22 336.82 L951.26 335.19 L951.29 333.56 L951.32 331.92 L951.34 330.29 L951.36 328.66 L951.38 327.03 L951.39 325.4 L951.4 323.76 L951.4 322.13 L951.41 320.5 L951.4 318.87 L951.4 317.24 L951.39 315.6 L951.38 313.97 L951.36 312.34 L951.34 310.71 L951.32 309.08 L951.29 307.44 L951.26 305.81 L951.22 304.18 L951.18 302.55 L951.14 300.92 L951.09 299.29 L951.04 297.65 L950.99 296.02 L950.93 294.39 L950.87 292.76 L950.8 291.13 L950.74 289.49 L950.66 287.86 L950.59 286.23 L950.51 284.6 L950.42 282.97 L950.34 281.33 L950.25 279.7 L950.15 278.07 L950.05 276.44 L949.95 274.81 L949.85 273.18 L949.74 271.54 L949.63 269.91 L949.51 268.28 L949.39 266.65 L949.27 265.02 L949.14 263.38 L949.01 261.75 L948.88 260.12 L948.74 258.49 L948.6 256.86 L948.45 255.22 L948.31 253.59 L948.15 251.96 L948 250.33 L947.84 248.7 L947.68 247.07 L947.51 245.43 L947.35 243.8 L947.17 242.17 L947 240.54 L946.82 238.91 L946.64 237.27 L946.45 235.64 L946.26 234.01 L946.07 232.38 L945.87 230.75 L945.68 229.11 L945.47 227.48 L945.27 225.85 L945.06 224.22 L944.85 222.59 L944.63 220.96 L944.41 219.32 L944.19 217.69 L943.97 216.06 L943.74 214.43 L943.51 212.8 L943.27 211.16 L943.04 209.53 L942.8 207.9 L942.55 206.27 L942.31 204.64 L942.06 203 L941.8 201.37 L941.55 199.74 L941.29 198.11 L941.03 196.48 L940.76 194.85 L940.5 193.21 L940.23 191.58 L939.95 189.95 L939.68 188.32 L939.4 186.69 L939.12 185.05 L938.83 183.42 L938.54 181.79 L938.25 180.16 L937.96 178.53 L937.67 176.89 L937.37 175.26 L937.07 173.63 L936.76 172 L936.46 170.37 L936.15 168.73 L935.84 167.1 L935.52 165.47 L935.21 163.84 L934.89 162.21 L934.57 160.58 L934.24 158.94 L933.92 157.31 L933.59 155.68 L933.26 154.05 L932.93 152.42 L932.59 150.78 L932.25 149.15 L931.91 147.52 L931.57 145.89 L931.23 144.26 L930.88 142.62 L930.53 140.99 L930.18 139.36 L929.83 137.73 L929.47 136.1 L929.11 134.47 L928.75 132.83 L928.39 131.2 L928.03 129.57 L927.66 127.94 L927.3 126.31 L926.93 124.67 L926.56 123.04 L926.18 121.41 L925.81 119.78 L925.43 118.15 L925.06 116.51 L924.68 114.88 L924.29 113.25 L923.91 111.62 L923.53 109.99 L923.14 108.36 L922.75 106.72 L922.36 105.09 L921.97 103.46 L921.58 101.83 L921.18 100.2 L920.79 98.56 L920.39 96.93 L919.99 95.3 L919.59 93.67 L919.19 92.04 L918.79 90.4 L918.39 88.77 L917.98 87.14 L917.58 85.51 L917.17 83.88 L916.76 82.25 L916.35 80.61 L915.94 78.98 L915.53 77.35 L915.12 75.72 L914.71 74.09 L914.29 72.45 L913.88 70.82 L913.46 69.19 L913.05 67.56 L912.63 65.93 L912.21 64.29 L911.79 62.66 L911.37 61.03 L910.95 59.4 L910.53 57.77 L910.11 56.13 L909.69 54.5 L909.26 52.87 L908.84 51.24 L908.42 49.61 L907.99 47.98 L907.57 46.34 L907.14 44.71 L906.72 43.08 L906.29 41.45 L905.87 39.82 L905.44 38.18 L905.01 36.55 L904.59 34.92 L904.16 33.29 L903.73 31.66 L903.3 30.02 L902.88 28.39 L902.45 26.76"/>
<path d="M902.45 614.24 L903.3 612.61 L904.16 610.98 L905.01 609.34 L905.87 607.71 L906.72 606.08 L907.57 604.45 L908.43 602.82 L909.28 601.18 L910.13 599.55 L910.98 597.92 L911.83 596.29 L912.68 594.66 L913.53 593.02 L914.38 591.39 L915.23 589.76 L916.08 588.13 L916.92 586.5 L917.77 584.87 L918.61 583.23 L919.45 581.6 L920.29 579.97 L921.13 578.34 L921.97 576.71 L922.81 575.07 L923.64 573.44 L924.48 571.81 L925.31 570.18 L926.14 568.55 L926.97 566.91 L927.79 565.28 L928.62 563.65 L929.44 562.02 L930.26 560.39 L931.08 558.75 L931.89 557.12 L932.71 555.49 L933.52 553.86 L934.33 552.23 L935.13 550.6 L935.94 548.96 L936.74 547.33 L937.54 545.7 L938.34 544.07 L939.13 542.44 L939.92 540.8 L940.71 539.17 L941.49 537.54 L942.27 535.91 L943.05 534.28 L943.83 532.64 L944.6 531.01 L945.37 529.38 L946.14 527.75 L946.9 526.12 L947.66 524.49 L948.42 522.85 L949.17 521.22 L949.92 519.59 L950.66 517.96 L951.41 516.33 L952.14 514.69 L952.88 513.06 L953.61 511.43 L954.34 509.8 L955.06 508.17 L955.78 506.53 L956.49 504.9 L957.2 503.27 L957.91 501.64 L958.61 500.01 L959.31 498.38 L960 496.74 L960.69 495.11 L961.38 493.48 L962.06 491.85 L962.73 490.22 L963.4 488.58 L964.07 486.95 L964.73 485.32 L965.39 483.69 L966.04 482.06 L966.69 480.42 L967.33 478.79 L967.97 477.16 L968.6 475.53 L969.23 473.9 L969.85 472.27 L970.47 470.63 L971.08 469 L971.68 467.37 L972.29 465.74 L972.88 464.11 L973.47 462.47 L974.06 460.84 L974.64 459.21 L975.21 457.58 L975.78 455.95 L976.35 454.31 L976.9 452.68 L977.46 451.05 L978 449.42 L978.54 447.79 L979.08 446.15 L979.61 444.52 L980.13 442.89 L980.65 441.26 L981.16 439.63 L981.66 438 L982.16 436.36 L982.66 434.73 L983.14 433.1 L983.62 431.47 L984.1 429.84 L984.57 428.2 L985.03 426.57 L985.48 424.94 L985.93 423.31 L986.38 421.68 L986.81 420.04 L987.25 418.41 L987.67 416.78 L988.09 415.15 L988.5 413.52 L988.9 411.89 L989.3 410.25 L989.69 408.62 L990.08 406.99 L990.45 405.36 L990.82 403.73 L991.19 402.09 L991.55 400.46 L991.9 398.83 L992.24 397.2 L992.58 395.57 L992.91 393.93 L993.23 392.3 L993.55 390.67 L993.86 389.04 L994.16 387.41 L994.46 385.78 L994.75 384.14 L995.03 382.51 L995.3 380.88 L995.57 379.25 L995.83 377.62 L996.08 375.98 L996.33 374.35 L996.57 372.72 L996.8 371.09 L997.03 369.46 L997.24 367.82 L997.45 366.19 L997.66 364.56 L997.85 362.93 L998.04 361.3 L998.22 359.67 L998.4 358.03 L998.56 356.4 L998.72 354.77 L998.88 353.14 L999.02 351.51 L999.16 349.87 L999.29 348.24 L999.41 346.61 L999.53 344.98 L999.63 343.35 L999.73 341.71 L999.83 340.08 L999.91 338.45 L999.99 336.82 L1000.06 335.19 L1000.12 333.56 L1000.18 331.92 L1000.23 330.29 L1000.27 328.66 L1000.3 327.03 L1000.33 325.4 L1000.35 323.76 L1000.36 322.13 L1000.36 320.5 L1000.36 318.87 L1000.35 317.24 L1000.33 315.6 L1000.3 313.97 L1000.27 312.34 L1000.23 310.71 L1000.18 309.08 L1000.12 307.44 L1000.06 305.81 L999.99 304.18 L999.91 302.55 L999.83 300.92 L999.73 299.29 L999.63 297.65 L999.53 296.02 L999.41 294.39 L999.29 292.76 L999.16 291.13 L999.02 289.49 L998.88 287.86 L998.72 286.23 L998.56 284.6 L998.4 282.97 L998.22 281.33 L998.04 279.7 L997.85 278.07 L997.66 276.44 L997.45 274.81 L997.24 273.18 L997.03 271.54 L996.8 269.91 L996.57 268.28 L996.33 266.65 L996.08 265.02 L995.83 263.38 L995.57 261.75 L995.3 260.12 L995.03 258.49 L994.75 256.86 L994.46 255.22 L994.16 253.59 L993.86 251.96 L993.55 250.33 L993.23 248.7 L992.91 247.07 L992.58 245.43 L992.24 243.8 L991.9 242.17 L991.55 240.54 L991.19 238.91 L990.82 237.27 L990.45 235.64 L990.08 234.01 L989.69 232.38 L989.3 230.75 L988.9 229.11 L988.5 227.48 L988.09 225.85 L987.67 224.22 L987.25 222.59 L986.81 220.96 L986.38 219.32 L985.93 217.69 L985.48 216.06 L985.03 214.43 L984.57 212.8 L984.1 211.16 L983.62 209.53 L983.14 207.9 L982.66 206.27 L982.16 204.64 L981.66 203 L981.16 201.37 L980.65 199.74 L980.13 198.11 L979.61 196.48 L979.08 194.85 L978.54 193.21 L978 191.58 L977.46 189.95 L976.9 188.32 L976.35 186.69 L975.78 185.05 L975.21 183.42 L974.64 181.79 L974.06 180.16 L973.47 178.53 L972.88 176.89 L972.29 175.26 L971.68 173.63 L971.08 172 L970.47 170.37 L969.85 168.73 L969.23 167.1 L968.6 165.47 L967.97 163.84 L967.33 162.21 L966.69 160.58 L966.04 158.94 L965.39 157.31 L964.73 155.68 L964.07 154.05 L963.4 152.42 L962.73 150.78 L962.06 149.15 L961.38 147.52 L960.69 145.89 L960 144.26 L959.31 142.62 L958.61 140.99 L957.91 139.36 L957.2 137.73 L956.49 136.1 L955.78 134.47 L955.06 132.83 L954.34 131.2 L953.61 129.57 L952.88 127.94 L952.14 126.31 L951.41 124.67 L950.66 123.04 L949.92 121.41 L949.17 119.78 L948.42 118.15 L947.66 116.51 L946.9 114.88 L946.14 113.25 L945.37 111.62 L944.6 109.99 L943.83 108.36 L943.05 106.72 L942.27 105.09 L941.49 103.46 L940.71 101.83 L939.92 100.2 L939.13 98.56 L938.34 96.93 L937.54 95.3 L936.74 93.67 L935.94 92.04 L935.13 90.4 L934.33 88.77 L933.52 87.14 L932.71 85.51 L931.89 83.88 L931.08 82.25 L930.26 80.61 L929.44 78.98 L928.62 77.35 L927.79 75.72 L926.97 74.09 L926.14 72.45 L925.31 70.82 L924.48 69.19 L923.64 67.56 L922.81 65.93 L921.97 64.29 L921.13 62.66 L920.29 61.03 L919.45 59.4 L918.61 57.77 L917.77 56.13 L916.92 54.5 L916.08 52.87 L915.23 51.24 L914.38 49.61 L913.53 47.98 L912.68 46.34 L911.83 44.71 L910.98 43.08 L910.13 41.45 L909.28 39.82 L908.43 38.18 L907.57 36.55 L906.72 34.92 L905.87 33.29 L905.01 31.66 L904.16 30.02 L903.3 28.39 L902.45 26.76"/>
<path d="M902.45 614.24 L903.73 612.61 L905.01 610.98 L906.29 609.34 L907.58 607.71 L908.86 606.08 L910.14 604.45 L911.42 602.82 L912.7 601.18 L913.97 599.55 L915.25 597.92 L916.53 596.29 L917.8 594.66 L919.08 593.02 L920.35 591.39 L921.62 589.76 L922.89 588.13 L924.16 586.5 L925.43 584.87 L926.69 583.23 L927.95 581.6 L929.21 579.97 L930.47 578.34 L931.73 576.71 L932.99 575.07 L934.24 573.44 L935.49 571.81 L936.74 570.18 L937.98 568.55 L939.22 566.91 L940.46 565.28 L941.7 563.65 L942.93 562.02 L944.16 560.39 L945.39 558.75 L946.61 557.12 L947.84 555.49 L949.05 553.86 L950.27 552.23 L951.48 550.6 L952.68 548.96 L953.88 547.33 L955.08 545.7 L956.28 544.07 L957.47 542.44 L958.65 540.8 L959.84 539.17 L961.01 537.54 L962.19 535.91 L963.36 534.28 L964.52 532.64 L965.68 531.01 L966.83 529.38 L967.98 527.75 L969.13 526.12 L970.27 524.49 L971.4 522.85 L972.53 521.22 L973.65 519.59 L974.77 517.96 L975.88 516.33 L976.99 514.69 L978.09 513.06 L979.19 511.43 L980.28 509.8 L981.36 508.17 L982.44 506.53 L983.51 504.9 L984.58 503.27 L985.64 501.64 L986.69 500.01 L987.74 498.38 L988.78 496.74 L989.81 495.11 L990.84 493.48 L991.86 491.85 L992.87 490.22 L993.88 488.58 L994.88 486.95 L995.87 485.32 L996.86 483.69 L997.83 482.06 L998.81 480.42 L999.77 478.79 L1000.72 477.16 L1001.67 475.53 L1002.61 473.9 L1003.55 472.27 L1004.47 470.63 L1005.39 469 L1006.3 467.37 L1007.2 465.74 L1008.1 464.11 L1008.99 462.47 L1009.86 460.84 L1010.73 459.21 L1011.6 457.58 L1012.45 455.95 L1013.29 454.31 L1014.13 452.68 L1014.96 451.05 L1015.78 449.42 L1016.59 447.79 L1017.39 446.15 L1018.18 444.52 L1018.97 442.89 L1019.75 441.26 L1020.51 439.63 L1021.27 438 L1022.02 436.36 L1022.76 434.73 L1023.49 433.1 L1024.21 431.47 L1024.92 429.84 L1025.63 428.2 L1026.32 426.57 L1027 424.94 L1027.68 423.31 L1028.34 421.68 L1029 420.04 L1029.64 418.41 L1030.28 416.78 L1030.9 415.15 L1031.52 413.52 L1032.13 411.89 L1032.72 410.25 L1033.31 408.62 L1033.89 406.99 L1034.46 405.36 L1035.01 403.73 L1035.56 402.09 L1036.1 400.46 L1036.62 398.83 L1037.14 397.2 L1037.64 395.57 L1038.14 393.93 L1038.62 392.3 L1039.1 390.67 L1039.56 389.04 L1040.02 387.41 L1040.46 385.78 L1040.9 384.14 L1041.32 382.51 L1041.73 380.88 L1042.13 379.25 L1042.52 377.62 L1042.9 375.98 L1043.27 374.35 L1043.63 372.72 L1043.98 371.09 L1044.32 369.46 L1044.64 367.82 L1044.96 366.19 L1045.26 364.56 L1045.56 362.93 L1045.84 361.3 L1046.11 359.67 L1046.37 358.03 L1046.62 356.4 L1046.86 354.77 L1047.09 353.14 L1047.31 351.51 L1047.51 349.87 L1047.71 348.24 L1047.89 346.61 L1048.06 344.98 L1048.22 343.35 L1048.38 341.71 L1048.51 340.08 L1048.64 338.45 L1048.76 336.82 L1048.87 335.19 L1048.96 333.56 L1049.05 331.92 L1049.12 330.29 L1049.18 328.66 L1049.23 327.03 L1049.27 325.4 L1049.3 323.76 L1049.31 322.13 L1049.32 320.5 L1049.31 318.87 L1049.3 317.24 L1049.27 315.6 L1049.23 313.97 L1049.18 312.34 L1049.12 310.71 L1049.05 309.08 L1048.96 307.44 L1048.87 305.81 L1048.76 304.18 L1048.64 302.55 L1048.51 300.92 L1048.38 299.29 L1048.22 297.65 L1048.06 296.02 L1047.89 294.39 L1047.71 292.76 L1047.51 291.13 L1047.31 289.49 L1047.09 287.86 L1046.86 286.23 L1046.62 284.6 L1046.37 282.97 L1046.11 281.33 L1045.84 279.7 L1045.56 278.07 L1045.26 276.44 L1044.96 274.81 L1044.64 273.18 L1044.32 271.54 L1043.98 269.91 L1043.63 268.28 L1043.27 266.65 L1042.9 265.02 L1042.52 263.38 L1042.13 261.75 L1041.73 260.12 L1041.32 258.49 L1040.9 256.86 L1040.46 255.22 L1040.02 253.59 L1039.56 251.96 L1039.1 250.33 L1038.62 248.7 L1038.14 247.07 L1037.64 245.43 L1037.14 243.8 L1036.62 242.17 L1036.1 240.54 L1035.56 238.91 L1035.01 237.27 L1034.46 235.64 L1033.89 234.01 L1033.31 232.38 L1032.72 230.75 L1032.13 229.11 L1031.52 227.48 L1030.9 225.85 L1030.28 224.22 L1029.64 222.59 L1029 220.96 L1028.34 219.32 L1027.68 217.69 L1027 216.06 L1026.32 214.43 L1025.63 212.8 L1024.92 211.16 L1024.21 209.53 L1023.49 207.9 L1022.76 206.27 L1022.02 204.64 L1021.27 203 L1020.51 201.37 L1019.75 199.74 L1018.97 198.11 L1018.18 196.48 L1017.39 194.85 L1016.59 193.21 L1015.78 191.58 L1014.96 189.95 L1014.13 188.32 L1013.29 186.69 L1012.45 185.05 L1011.6 183.42 L1010.73 181.79 L1009.86 180.16 L1008.99 178.53 L1008.1 176.89 L1007.2 175.26 L1006.3 173.63 L1005.39 172 L1004.47 170.37 L1003.55 168.73 L1002.61 167.1 L1001.67 165.47 L1000.72 163.84 L999.77 162.21 L998.81 160.58 L997.83 158.94 L996.86 157.31 L995.87 155.68 L994.88 154.05 L993.88 152.42 L992.87 150.78 L991.86 149.15 L990.84 147.52 L989.81 145.89 L988.78 144.26 L987.74 142.62 L986.69 140.99 L985.64 139.36 L984.58 137.73 L983.51 136.1 L982.44 134.47 L981.36 132.83 L980.28 131.2 L979.19 129.57 L978.09 127.94 L976.99 126.31 L975.88 124.67 L974.77 123.04 L973.65 121.41 L972.53 119.78 L971.4 118.15 L970.27 116.51 L969.13 114.88 L967.98 113.25 L966.83 111.62 L965.68 109.99 L964.52 108.36 L963.36 106.72 L962.19 105.09 L961.01 103.46 L959.84 101.83 L958.65 100.2 L957.47 98.56 L956.28 96.93 L955.08 95.3 L953.88 93.67 L952.68 92.04 L951.48 90.4 L950.27 88.77 L949.05 87.14 L947.84 85.51 L946.61 83.88 L945.39 82.25 L944.16 80.61 L942.93 78.98 L941.7 77.35 L940.46 75.72 L939.22 74.09 L937.98 72.45 L936.74 70.82 L935.49 69.19 L934.24 67.56 L932.99 65.93 L931.73 64.29 L930.47 62.66 L929.21 61.03 L927.95 59.4 L926.69 57.77 L925.43 56.13 L924.16 54.5 L922.89 52.87 L921.62 51.24 L920.35 49.61 L919.08 47.98 L917.8 46.34 L916.53 44.71 L915.25 43.08 L913.97 41.45 L912.7 39.82 L911.42 38.18 L910.14 36.55 L908.86 34.92 L907.58 33.29 L906.29 31.66 L905.01 30.02 L903.73 28.39 L902.45 26.76"/>
<path d="M902.45 614.24 L904.16 612.61 L905.87 610.98 L907.58 609.34 L909.28 607.71 L910.99 606.08 L912.7 604.45 L914.4 602.82 L916.11 601.18 L917.81 599.55 L919.52 597.92 L921.22 596.29 L922.92 594.66 L924.62 593.02 L926.32 591.39 L928.01 589.76 L929.7 588.13 L931.39 586.5 L933.08 584.87 L934.77 583.23 L936.45 581.6 L938.14 579.97 L939.82 578.34 L941.49 576.71 L943.16 575.07 L944.83 573.44 L946.5 571.81 L948.16 570.18 L949.82 568.55 L951.48 566.91 L953.13 565.28 L954.78 563.65 L956.43 562.02 L958.07 560.39 L959.7 558.75 L961.34 557.12 L962.96 555.49 L964.59 553.86 L966.2 552.23 L967.82 550.6 L969.43 548.96 L971.03 547.33 L972.63 545.7 L974.22 544.07 L975.81 542.44 L977.39 540.8 L978.97 539.17 L980.54 537.54 L982.1 535.91 L983.66 534.28 L985.21 532.64 L986.76 531.01 L988.29 529.38 L989.83 527.75 L991.35 526.12 L992.87 524.49 L994.38 522.85 L995.89 521.22 L997.39 519.59 L998.88 517.96 L1000.36 516.33 L1001.84 514.69 L1003.31 513.06 L1004.77 511.43 L1006.22 509.8 L1007.67 508.17 L1009.1 506.53 L1010.53 504.9 L1011.95 503.27 L1013.37 501.64 L1014.77 500.01 L1016.17 498.38 L1017.55 496.74 L1018.93 495.11 L1020.3 493.48 L1021.66 491.85 L1023.01 490.22 L1024.35 488.58 L1025.69 486.95 L1027.01 485.32 L1028.32 483.69 L1029.63 482.06 L1030.92 480.42 L1032.21 478.79 L1033.48 477.16 L1034.75 475.53 L1036 473.9 L1037.25 472.27 L1038.48 470.63 L1039.71 469 L1040.92 467.37 L1042.12 465.74 L1043.32 464.11 L1044.5 462.47 L1045.67 460.84 L1046.83 459.21 L1047.98 457.58 L1049.11 455.95 L1050.24 454.31 L1051.36 452.68 L1052.46 451.05 L1053.55 449.42 L1054.64 447.79 L1055.7 446.15 L1056.76 444.52 L1057.81 442.89 L1058.84 441.26 L1059.87 439.63 L1060.88 438 L1061.87 436.36 L1062.86 434.73 L1063.84 433.1 L1064.8 431.47 L1065.75 429.84 L1066.68 428.2 L1067.61 426.57 L1068.52 424.94 L1069.42 423.31 L1070.31 421.68 L1071.18 420.04 L1072.04 418.41 L1072.89 416.78 L1073.72 415.15 L1074.55 413.52 L1075.35 411.89 L1076.15 410.25 L1076.93 408.62 L1077.7 406.99 L1078.46 405.36 L1079.2 403.73 L1079.93 402.09 L1080.64 400.46 L1081.35 398.83 L1082.03 397.2 L1082.71 395.57 L1083.37 393.93 L1084.02 392.3 L1084.65 390.67 L1085.27 389.04 L1085.87 387.41 L1086.47 385.78 L1087.04 384.14 L1087.61 382.51 L1088.16 380.88 L1088.69 379.25 L1089.21 377.62 L1089.72 375.98 L1090.21 374.35 L1090.69 372.72 L1091.15 371.09 L1091.6 369.46 L1092.04 367.82 L1092.46 366.19 L1092.87 364.56 L1093.26 362.93 L1093.63 361.3 L1094 359.67 L1094.34 358.03 L1094.68 356.4 L1095 354.77 L1095.3 353.14 L1095.59 351.51 L1095.86 349.87 L1096.12 348.24 L1096.37 346.61 L1096.6 344.98 L1096.82 343.35 L1097.02 341.71 L1097.2 340.08 L1097.37 338.45 L1097.53 336.82 L1097.67 335.19 L1097.8 333.56 L1097.91 331.92 L1098.01 330.29 L1098.09 328.66 L1098.16 327.03 L1098.21 325.4 L1098.25 323.76 L1098.27 322.13 L1098.28 320.5 L1098.27 318.87 L1098.25 317.24 L1098.21 315.6 L1098.16 313.97 L1098.09 312.34 L1098.01 310.71 L1097.91 309.08 L1097.8 307.44 L1097.67 305.81 L1097.53 304.18 L1097.37 302.55 L1097.2 300.92 L1097.02 299.29 L1096.82 297.65 L1096.6 296.02 L1096.37 294.39 L1096.12 292.76 L1095.86 291.13 L1095.59 289.49 L1095.3 287.86 L1095 286.23 L1094.68 284.6 L1094.34 282.97 L1094 281.33 L1093.63 279.7 L1093.26 278.07 L1092.87 276.44 L1092.46 274.81 L1092.04 273.18 L1091.6 271.54 L1091.15 269.91 L1090.69 268.28 L1090.21 266.65 L1089.72 265.02 L1089.21 263.38 L1088.69 261.75 L1088.16 260.12 L1087.61 258.49 L1087.04 256.86 L1086.47 255.22 L1085.87 253.59 L1085.27 251.96 L1084.65 250.33 L1084.02 248.7 L1083.37 247.07 L1082.71 245.43 L1082.03 243.8 L1081.35 242.17 L1080.64 240.54 L1079.93 238.91 L1079.2 237.27 L1078.46 235.64 L1077.7 234.01 L1076.93 232.38 L1076.15 230.75 L1075.35 229.11 L1074.55 227.48 L1073.72 225.85 L1072.89 224.22 L1072.04 222.59 L1071.18 220.96 L1070.31 219.32 L1069.42 217.69 L1068.52 216.06 L1067.61 214.43 L1066.68 212.8 L1065.75 211.16 L1064.8 209.53 L1063.84 207.9 L1062.86 206.27 L1061.87 204.64 L1060.88 203 L1059.87 201.37 L1058.84 199.74 L1057.81 198.11 L1056.76 196.48 L1055.7 194.85 L1054.64 193.21 L1053.55 191.58 L1052.46 189.95 L1051.36 188.32 L1050.24 186.69 L1049.11 185.05 L1047.98 183.42 L1046.83 181.79 L1045.67 180.16 L1044.5 178.53 L1043.32 176.89 L1042.12 175.26 L1040.92 173.63 L1039.71 172 L1038.48 170.37 L1037.25 168.73 L1036 167.1 L1034.75 165.47 L1033.48 163.84 L1032.21 162.21 L1030.92 160.58 L1029.63 158.94 L1028.32 157.31 L1027.01 155.68 L1025.69 154.05 L1024.35 152.42 L1023.01 150.78 L1021.66 149.15 L1020.3 147.52 L1018.93 145.89 L1017.55 144.26 L1016.17 142.62 L1014.77 140.99 L1013.37 139.36 L1011.95 137.73 L1010.53 136.1 L1009.1 134.47 L1007.67 132.83 L1006.22 131.2 L1004.77 129.57 L1003.31 127.94 L1001.84 126.31 L1000.36 124.67 L998.88 123.04 L997.39 121.41 L995.89 119.78 L994.38 118.15 L992.87 116.51 L991.35 114.88 L989.83 113.25 L988.29 111.62 L986.76 109.99 L985.21 108.36 L983.66 106.72 L982.1 105.09 L980.54 103.46 L978.97 101.83 L977.39 100.2 L975.81 98.56 L974.22 96.93 L972.63 95.3 L971.03 93.67 L969.43 92.04 L967.82 90.4 L966.2 88.77 L964.59 87.14 L962.96 85.51 L961.34 83.88 L959.7 82.25 L958.07 80.61 L956.43 78.98 L954.78 77.35 L953.13 75.72 L951.48 74.09 L949.82 72.45 L948.16 70.82 L946.5 69.19 L944.83 67.56 L943.16 65.93 L941.49 64.29 L939.82 62.66 L938.14 61.03 L936.45 59.4 L934.77 57.77 L933.08 56.13 L931.39 54.5 L929.7 52.87 L928.01 51.24 L926.32 49.61 L924.62 47.98 L922.92 46.34 L921.22 44.71 L919.52 43.08 L917.81 41.45 L916.11 39.82 L914.4 38.18 L912.7 36.55 L910.99 34.92 L909.28 33.29 L907.58 31.66 L905.87 30.02 L904.16 28.39 L902.45 26.76"/>
<path d="M902.45 614.24 L904.59 612.61 L906.72 610.98 L908.86 609.34 L910.99 607.71 L913.13 606.08 L915.26 604.45 L917.39 602.82 L919.53 601.18 L921.66 599.55 L923.78 597.92 L925.91 596.29 L928.04 594.66 L930.16 593.02 L932.28 591.39 L934.4 589.76 L936.52 588.13 L938.63 586.5 L940.74 584.87 L942.85 583.23 L944.96 581.6 L947.06 579.97 L949.16 578.34 L951.25 576.71 L953.34 575.07 L955.43 573.44 L957.51 571.81 L959.59 570.18 L961.67 568.55 L963.74 566.91 L965.8 565.28 L967.87 563.65 L969.92 562.02 L971.97 560.39 L974.02 558.75 L976.06 557.12 L978.09 555.49 L980.12 553.86 L982.14 552.23 L984.16 550.6 L986.17 548.96 L988.17 547.33 L990.17 545.7 L992.16 544.07 L994.15 542.44 L996.12 540.8 L998.09 539.17 L1000.06 537.54 L1002.01 535.91 L1003.96 534.28 L1005.9 532.64 L1007.83 531.01 L1009.76 529.38 L1011.67 527.75 L1013.58 526.12 L1015.48 524.49 L1017.37 522.85 L1019.25 521.22 L1021.12 519.59 L1022.99 517.96 L1024.84 516.33 L1026.69 514.69 L1028.52 513.06 L1030.35 511.43 L1032.16 509.8 L1033.97 508.17 L1035.77 506.53 L1037.55 504.9 L1039.33 503.27 L1041.1 501.64 L1042.85 500.01 L1044.6 498.38 L1046.33 496.74 L1048.05 495.11 L1049.76 493.48 L1051.46 491.85 L1053.15 490.22 L1054.83 488.58 L1056.5 486.95 L1058.15 485.32 L1059.79 483.69 L1061.42 482.06 L1063.04 480.42 L1064.65 478.79 L1066.24 477.16 L1067.82 475.53 L1069.39 473.9 L1070.95 472.27 L1072.49 470.63 L1074.02 469 L1075.54 467.37 L1077.04 465.74 L1078.53 464.11 L1080.01 462.47 L1081.47 460.84 L1082.92 459.21 L1084.36 457.58 L1085.78 455.95 L1087.19 454.31 L1088.58 452.68 L1089.96 451.05 L1091.33 449.42 L1092.68 447.79 L1094.02 446.15 L1095.34 444.52 L1096.65 442.89 L1097.94 441.26 L1099.22 439.63 L1100.48 438 L1101.73 436.36 L1102.96 434.73 L1104.18 433.1 L1105.38 431.47 L1106.57 429.84 L1107.74 428.2 L1108.9 426.57 L1110.04 424.94 L1111.16 423.31 L1112.27 421.68 L1113.36 420.04 L1114.44 418.41 L1115.5 416.78 L1116.54 415.15 L1117.57 413.52 L1118.58 411.89 L1119.57 410.25 L1120.55 408.62 L1121.51 406.99 L1122.46 405.36 L1123.39 403.73 L1124.3 402.09 L1125.19 400.46 L1126.07 398.83 L1126.93 397.2 L1127.77 395.57 L1128.6 393.93 L1129.41 392.3 L1130.2 390.67 L1130.97 389.04 L1131.73 387.41 L1132.47 385.78 L1133.19 384.14 L1133.9 382.51 L1134.58 380.88 L1135.25 379.25 L1135.9 377.62 L1136.54 375.98 L1137.15 374.35 L1137.75 372.72 L1138.33 371.09 L1138.89 369.46 L1139.44 367.82 L1139.96 366.19 L1140.47 364.56 L1140.96 362.93 L1141.43 361.3 L1141.88 359.67 L1142.32 358.03 L1142.74 356.4 L1143.13 354.77 L1143.51 353.14 L1143.88 351.51 L1144.22 349.87 L1144.54 348.24 L1144.85 346.61 L1145.14 344.98 L1145.41 343.35 L1145.66 341.71 L1145.89 340.08 L1146.11 338.45 L1146.3 336.82 L1146.48 335.19 L1146.64 333.56 L1146.78 331.92 L1146.9 330.29 L1147 328.66 L1147.08 327.03 L1147.15 325.4 L1147.2 323.76 L1147.22 322.13 L1147.23 320.5 L1147.22 318.87 L1147.2 317.24 L1147.15 315.6 L1147.08 313.97 L1147 312.34 L1146.9 310.71 L1146.78 309.08 L1146.64 307.44 L1146.48 305.81 L1146.3 304.18 L1146.11 302.55 L1145.89 300.92 L1145.66 299.29 L1145.41 297.65 L1145.14 296.02 L1144.85 294.39 L1144.54 292.76 L1144.22 291.13 L1143.88 289.49 L1143.51 287.86 L1143.13 286.23 L1142.74 284.6 L1142.32 282.97 L1141.88 281.33 L1141.43 279.7 L1140.96 278.07 L1140.47 276.44 L1139.96 274.81 L1139.44 273.18 L1138.89 271.54 L1138.33 269.91 L1137.75 268.28 L1137.15 266.65 L1136.54 265.02 L1135.9 263.38 L1135.25 261.75 L1134.58 260.12 L1133.9 258.49 L1133.19 256.86 L1132.47 255.22 L1131.73 253.59 L1130.97 251.96 L1130.2 250.33 L1129.41 248.7 L1128.6 247.07 L1127.77 245.43 L1126.93 243.8 L1126.07 242.17 L1125.19 240.54 L1124.3 238.91 L1123.39 237.27 L1122.46 235.64 L1121.51 234.01 L1120.55 232.38 L1119.57 230.75 L1118.58 229.11 L1117.57 227.48 L1116.54 225.85 L1115.5 224.22 L1114.44 222.59 L1113.36 220.96 L1112.27 219.32 L1111.16 217.69 L1110.04 216.06 L1108.9 214.43 L1107.74 212.8 L1106.57 211.16 L1105.38 209.53 L1104.18 207.9 L1102.96 206.27 L1101.73 204.64 L1100.48 203 L1099.22 201.37 L1097.94 199.74 L1096.65 198.11 L1095.34 196.48 L1094.02 194.85 L1092.68 193.21 L1091.33 191.58 L1089.96 189.95 L1088.58 188.32 L1087.19 186.69 L1085.78 185.05 L1084.36 183.42 L1082.92 181.79 L1081.47 180.16 L1080.01 178.53 L1078.53 176.89 L1077.04 175.26 L1075.54 173.63 L1074.02 172 L1072.49 170.37 L1070.95 168.73 L1069.39 167.1 L1067.82 165.47 L1066.24 163.84 L1064.65 162.21 L1063.04 160.58 L1061.42 158.94 L1059.79 157.31 L1058.15 155.68 L1056.5 154.05 L1054.83 152.42 L1053.15 150.78 L1051.46 149.15 L1049.76 147.52 L1048.05 145.89 L1046.33 144.26 L1044.6 142.62 L1042.85 140.99 L1041.1 139.36 L1039.33 137.73 L1037.55 136.1 L1035.77 134.47 L1033.97 132.83 L1032.16 131.2 L1030.35 129.57 L1028.52 127.94 L1026.69 126.31 L1024.84 124.67 L1022.99 123.04 L1021.12 121.41 L1019.25 119.78 L1017.37 118.15 L1015.48 116.51 L1013.58 114.88 L1011.67 113.25 L1009.76 111.62 L1007.83 109.99 L1005.9 108.36 L1003.96 106.72 L1002.01 105.09 L1000.06 103.46 L998.09 101.83 L996.12 100.2 L994.15 98.56 L992.16 96.93 L990.17 95.3 L988.17 93.67 L986.17 92.04 L984.16 90.4 L982.14 88.77 L980.12 87.14 L978.09 85.51 L976.06 83.88 L974.02 82.25 L971.97 80.61 L969.92 78.98 L967.87 77.35 L965.8 75.72 L963.74 74.09 L961.67 72.45 L959.59 70.82 L957.51 69.19 L955.43 67.56 L953.34 65.93 L951.25 64.29 L949.16 62.66 L947.06 61.03 L944.96 59.4 L942.85 57.77 L940.74 56.13 L938.63 54.5 L936.52 52.87 L934.4 51.24 L932.28 49.61 L930.16 47.98 L928.04 46.34 L925.91 44.71 L923.78 43.08 L921.66 41.45 L919.53 39.82 L917.39 38.18 L915.26 36.55 L913.13 34.92 L910.99 33.29 L908.86 31.66 L906.72 30.02 L904.59 28.39 L902.45 26.76"/>
<path d="M902.45 614.24 L905.01 612.61 L907.58 610.98 L910.14 609.34 L912.7 607.71 L915.26 606.08 L917.82 604.45 L920.38 602.82 L922.94 601.18 L925.5 599.55 L928.05 597.92 L930.6 596.29 L933.15 594.66 L935.7 593.02 L938.25 591.39 L940.79 589.76 L943.33 588.13 L945.87 586.5 L948.4 584.87 L950.93 583.23 L953.46 581.6 L955.98 579.97 L958.5 578.34 L961.01 576.71 L963.52 575.07 L966.03 573.44 L968.53 571.81 L971.02 570.18 L973.51 568.55 L976 566.91 L978.48 565.28 L980.95 563.65 L983.42 562.02 L985.88 560.39 L988.33 558.75 L990.78 557.12 L993.22 555.49 L995.65 553.86 L998.08 552.23 L1000.5 550.6 L1002.91 548.96 L1005.32 547.33 L1007.72 545.7 L1010.11 544.07 L1012.49 542.44 L1014.86 540.8 L1017.22 539.17 L1019.58 537.54 L1021.92 535.91 L1024.26 534.28 L1026.59 532.64 L1028.91 531.01 L1031.22 529.38 L1033.52 527.75 L1035.8 526.12 L1038.08 524.49 L1040.35 522.85 L1042.61 521.22 L1044.86 519.59 L1047.09 517.96 L1049.32 516.33 L1051.53 514.69 L1053.74 513.06 L1055.93 511.43 L1058.11 509.8 L1060.28 508.17 L1062.43 506.53 L1064.58 504.9 L1066.71 503.27 L1068.83 501.64 L1070.93 500.01 L1073.03 498.38 L1075.11 496.74 L1077.17 495.11 L1079.23 493.48 L1081.27 491.85 L1083.29 490.22 L1085.31 488.58 L1087.31 486.95 L1089.29 485.32 L1091.26 483.69 L1093.22 482.06 L1095.16 480.42 L1097.09 478.79 L1099 477.16 L1100.9 475.53 L1102.78 473.9 L1104.65 472.27 L1106.5 470.63 L1108.33 469 L1110.15 467.37 L1111.96 465.74 L1113.75 464.11 L1115.52 462.47 L1117.28 460.84 L1119.02 459.21 L1120.74 457.58 L1122.45 455.95 L1124.14 454.31 L1125.81 452.68 L1127.47 451.05 L1129.11 449.42 L1130.73 447.79 L1132.33 446.15 L1133.92 444.52 L1135.49 442.89 L1137.04 441.26 L1138.57 439.63 L1140.09 438 L1141.59 436.36 L1143.07 434.73 L1144.53 433.1 L1145.97 431.47 L1147.39 429.84 L1148.8 428.2 L1150.19 426.57 L1151.55 424.94 L1152.9 423.31 L1154.23 421.68 L1155.54 420.04 L1156.84 418.41 L1158.11 416.78 L1159.36 415.15 L1160.59 413.52 L1161.81 411.89 L1163 410.25 L1164.17 408.62 L1165.33 406.99 L1166.46 405.36 L1167.57 403.73 L1168.67 402.09 L1169.74 400.46 L1170.79 398.83 L1171.83 397.2 L1172.84 395.57 L1173.83 393.93 L1174.8 392.3 L1175.75 390.67 L1176.68 389.04 L1177.59 387.41 L1178.47 385.78 L1179.34 384.14 L1180.19 382.51 L1181.01 380.88 L1181.81 379.25 L1182.59 377.62 L1183.35 375.98 L1184.09 374.35 L1184.81 372.72 L1185.51 371.09 L1186.18 369.46 L1186.83 367.82 L1187.46 366.19 L1188.07 364.56 L1188.66 362.93 L1189.23 361.3 L1189.77 359.67 L1190.29 358.03 L1190.79 356.4 L1191.27 354.77 L1191.73 353.14 L1192.16 351.51 L1192.57 349.87 L1192.96 348.24 L1193.33 346.61 L1193.68 344.98 L1194 343.35 L1194.3 341.71 L1194.58 340.08 L1194.84 338.45 L1195.07 336.82 L1195.28 335.19 L1195.47 333.56 L1195.64 331.92 L1195.79 330.29 L1195.91 328.66 L1196.01 327.03 L1196.09 325.4 L1196.14 323.76 L1196.18 322.13 L1196.19 320.5 L1196.18 318.87 L1196.14 317.24 L1196.09 315.6 L1196.01 313.97 L1195.91 312.34 L1195.79 310.71 L1195.64 309.08 L1195.47 307.44 L1195.28 305.81 L1195.07 304.18 L1194.84 302.55 L1194.58 300.92 L1194.3 299.29 L1194 297.65 L1193.68 296.02 L1193.33 294.39 L1192.96 292.76 L1192.57 291.13 L1192.16 289.49 L1191.73 287.86 L1191.27 286.23 L1190.79 284.6 L1190.29 282.97 L1189.77 281.33 L1189.23 279.7 L1188.66 278.07 L1188.07 276.44 L1187.46 274.81 L1186.83 273.18 L1186.18 271.54 L1185.51 269.91 L1184.81 268.28 L1184.09 266.65 L1183.35 265.02 L1182.59 263.38 L1181.81 261.75 L1181.01 260.12 L1180.19 258.49 L1179.34 256.86 L1178.47 255.22 L1177.59 253.59 L1176.68 251.96 L1175.75 250.33 L1174.8 248.7 L1173.83 247.07 L1172.84 245.43 L1171.83 243.8 L1170.79 242.17 L1169.74 240.54 L1168.67 238.91 L1167.57 237.27 L1166.46 235.64 L1165.33 234.01 L1164.17 232.38 L1163 230.75 L1161.81 229.11 L1160.59 227.48 L1159.36 225.85 L1158.11 224.22 L1156.84 222.59 L1155.54 220.96 L1154.23 219.32 L1152.9 217.69 L1151.55 216.06 L1150.19 214.43 L1148.8 212.8 L1147.39 211.16 L1145.97 209.53 L1144.53 207.9 L1143.07 206.27 L1141.59 204.64 L1140.09 203 L1138.57 201.37 L1137.04 199.74 L1135.49 198.11 L1133.92 196.48 L1132.33 194.85 L1130.73 193.21 L1129.11 191.58 L1127.47 189.95 L1125.81 188.32 L1124.14 186.69 L1122.45 185.05 L1120.74 183.42 L1119.02 181.79 L1117.28 180.16 L1115.52 178.53 L1113.75 176.89 L1111.96 175.26 L1110.15 173.63 L1108.33 172 L1106.5 170.37 L1104.65 168.73 L1102.78 167.1 L1100.9 165.47 L1099 163.84 L1097.09 162.21 L1095.16 160.58 L1093.22 158.94 L1091.26 157.31 L1089.29 155.68 L1087.31 154.05 L1085.31 152.42 L1083.29 150.78 L1081.27 149.15 L1079.23 147.52 L1077.17 145.89 L1075.11 144.26 L1073.03 142.62 L1070.93 140.99 L1068.83 139.36 L1066.71 137.73 L1064.58 136.1 L1062.43 134.47 L1060.28 132.83 L1058.11 131.2 L1055.93 129.57 L1053.74 127.94 L1051.53 126.31 L1049.32 124.67 L1047.09 123.04 L1044.86 121.41 L1042.61 119.78 L1040.35 118.15 L1038.08 116.51 L1035.8 114.88 L1033.52 113.25 L1031.22 111.62 L1028.91 109.99 L1026.59 108.36 L1024.26 106.72 L1021.92 105.09 L1019.58 103.46 L1017.22 101.83 L1014.86 100.2 L1012.49 98.56 L1010.11 96.93 L1007.72 95.3 L1005.32 93.67 L1002.91 92.04 L1000.5 90.4 L998.08 88.77 L995.65 87.14 L993.22 85.51 L990.78 83.88 L988.33 82.25 L985.88 80.61 L983.42 78.98 L980.95 77.35 L978.48 75.72 L976 74.09 L973.51 72.45 L971.02 70.82 L968.53 69.19 L966.03 67.56 L963.52 65.93 L961.01 64.29 L958.5 62.66 L955.98 61.03 L953.46 59.4 L950.93 57.77 L948.4 56.13 L945.87 54.5 L943.33 52.87 L940.79 51.24 L938.25 49.61 L935.7 47.98 L933.15 46.34 L930.6 44.71 L928.05 43.08 L925.5 41.45 L922.94 39.82 L920.38 38.18 L917.82 36.55 L915.26 34.92 L912.7 33.29 L910.14 31.66 L907.58 30.02 L905.01 28.39 L902.45 26.76"/>
<path d="M902.45 614.24 L905.44 612.61 L908.43 610.98 L911.42 609.34 L914.41 607.71 L917.4 606.08 L920.39 604.45 L923.37 602.82 L926.36 601.18 L929.34 599.55 L932.32 597.92 L935.3 596.29 L938.27 594.66 L941.24 593.02 L944.21 591.39 L947.18 589.76 L950.14 588.13 L953.1 586.5 L956.06 584.87 L959.01 583.23 L961.96 581.6 L964.9 579.97 L967.84 578.34 L970.77 576.71 L973.7 575.07 L976.62 573.44 L979.54 571.81 L982.45 570.18 L985.36 568.55 L988.25 566.91 L991.15 565.28 L994.03 563.65 L996.91 562.02 L999.78 560.39 L1002.64 558.75 L1005.5 557.12 L1008.35 555.49 L1011.19 553.86 L1014.02 552.23 L1016.84 550.6 L1019.66 548.96 L1022.46 547.33 L1025.26 545.7 L1028.05 544.07 L1030.83 542.44 L1033.59 540.8 L1036.35 539.17 L1039.1 537.54 L1041.84 535.91 L1044.56 534.28 L1047.28 532.64 L1049.98 531.01 L1052.68 529.38 L1055.36 527.75 L1058.03 526.12 L1060.69 524.49 L1063.34 522.85 L1065.97 521.22 L1068.59 519.59 L1071.2 517.96 L1073.8 516.33 L1076.38 514.69 L1078.95 513.06 L1081.51 511.43 L1084.05 509.8 L1086.58 508.17 L1089.1 506.53 L1091.6 504.9 L1094.08 503.27 L1096.55 501.64 L1099.01 500.01 L1101.45 498.38 L1103.88 496.74 L1106.29 495.11 L1108.69 493.48 L1111.07 491.85 L1113.43 490.22 L1115.78 488.58 L1118.12 486.95 L1120.43 485.32 L1122.73 483.69 L1125.01 482.06 L1127.28 480.42 L1129.53 478.79 L1131.76 477.16 L1133.97 475.53 L1136.17 473.9 L1138.35 472.27 L1140.51 470.63 L1142.65 469 L1144.77 467.37 L1146.88 465.74 L1148.96 464.11 L1151.03 462.47 L1153.08 460.84 L1155.11 459.21 L1157.12 457.58 L1159.11 455.95 L1161.09 454.31 L1163.04 452.68 L1164.97 451.05 L1166.88 449.42 L1168.77 447.79 L1170.65 446.15 L1172.5 444.52 L1174.33 442.89 L1176.14 441.26 L1177.93 439.63 L1179.7 438 L1181.44 436.36 L1183.17 434.73 L1184.87 433.1 L1186.56 431.47 L1188.22 429.84 L1189.86 428.2 L1191.48 426.57 L1193.07 424.94 L1194.65 423.31 L1196.2 421.68 L1197.73 420.04 L1199.23 418.41 L1200.72 416.78 L1202.18 415.15 L1203.62 413.52 L1205.03 411.89 L1206.42 410.25 L1207.79 408.62 L1209.14 406.99 L1210.46 405.36 L1211.76 403.73 L1213.04 402.09 L1214.29 400.46 L1215.52 398.83 L1216.72 397.2 L1217.9 395.57 L1219.06 393.93 L1220.19 392.3 L1221.3 390.67 L1222.38 389.04 L1223.44 387.41 L1224.48 385.78 L1225.49 384.14 L1226.47 382.51 L1227.44 380.88 L1228.37 379.25 L1229.28 377.62 L1230.17 375.98 L1231.03 374.35 L1231.87 372.72 L1232.68 371.09 L1233.47 369.46 L1234.23 367.82 L1234.97 366.19 L1235.68 364.56 L1236.36 362.93 L1237.02 361.3 L1237.66 359.67 L1238.27 358.03 L1238.85 356.4 L1239.41 354.77 L1239.94 353.14 L1240.45 351.51 L1240.93 349.87 L1241.38 348.24 L1241.81 346.61 L1242.21 344.98 L1242.59 343.35 L1242.94 341.71 L1243.27 340.08 L1243.57 338.45 L1243.84 336.82 L1244.09 335.19 L1244.31 333.56 L1244.51 331.92 L1244.68 330.29 L1244.82 328.66 L1244.94 327.03 L1245.03 325.4 L1245.09 323.76 L1245.13 322.13 L1245.15 320.5 L1245.13 318.87 L1245.09 317.24 L1245.03 315.6 L1244.94 313.97 L1244.82 312.34 L1244.68 310.71 L1244.51 309.08 L1244.31 307.44 L1244.09 305.81 L1243.84 304.18 L1243.57 302.55 L1243.27 300.92 L1242.94 299.29 L1242.59 297.65 L1242.21 296.02 L1241.81 294.39 L1241.38 292.76 L1240.93 291.13 L1240.45 289.49 L1239.94 287.86 L1239.41 286.23 L1238.85 284.6 L1238.27 282.97 L1237.66 281.33 L1237.02 279.7 L1236.36 278.07 L1235.68 276.44 L1234.97 274.81 L1234.23 273.18 L1233.47 271.54 L1232.68 269.91 L1231.87 268.28 L1231.03 266.65 L1230.17 265.02 L1229.28 263.38 L1228.37 261.75 L1227.44 260.12 L1226.47 258.49 L1225.49 256.86 L1224.48 255.22 L1223.44 253.59 L1222.38 251.96 L1221.3 250.33 L1220.19 248.7 L1219.06 247.07 L1217.9 245.43 L1216.72 243.8 L1215.52 242.17 L1214.29 240.54 L1213.04 238.91 L1211.76 237.27 L1210.46 235.64 L1209.14 234.01 L1207.79 232.38 L1206.42 230.75 L1205.03 229.11 L1203.62 227.48 L1202.18 225.85 L1200.72 224.22 L1199.23 222.59 L1197.73 220.96 L1196.2 219.32 L1194.65 217.69 L1193.07 216.06 L1191.48 214.43 L1189.86 212.8 L1188.22 211.16 L1186.56 209.53 L1184.87 207.9 L1183.17 206.27 L1181.44 204.64 L1179.7 203 L1177.93 201.37 L1176.14 199.74 L1174.33 198.11 L1172.5 196.48 L1170.65 194.85 L1168.77 193.21 L1166.88 191.58 L1164.97 189.95 L1163.04 188.32 L1161.09 186.69 L1159.11 185.05 L1157.12 183.42 L1155.11 181.79 L1153.08 180.16 L1151.03 178.53 L1148.96 176.89 L1146.88 175.26 L1144.77 173.63 L1142.65 172 L1140.51 170.37 L1138.35 168.73 L1136.17 167.1 L1133.97 165.47 L1131.76 163.84 L1129.53 162.21 L1127.28 160.58 L1125.01 158.94 L1122.73 157.31 L1120.43 155.68 L1118.12 154.05 L1115.78 152.42 L1113.43 150.78 L1111.07 149.15 L1108.69 147.52 L1106.29 145.89 L1103.88 144.26 L1101.45 142.62 L1099.01 140.99 L1096.55 139.36 L1094.08 137.73 L1091.6 136.1 L1089.1 134.47 L1086.58 132.83 L1084.05 131.2 L1081.51 129.57 L1078.95 127.94 L1076.38 126.31 L1073.8 124.67 L1071.2 123.04 L1068.59 121.41 L1065.97 119.78 L1063.34 118.15 L1060.69 116.51 L1058.03 114.88 L1055.36 113.25 L1052.68 111.62 L1049.98 109.99 L1047.28 108.36 L1044.56 106.72 L1041.84 105.09 L1039.1 103.46 L1036.35 101.83 L1033.59 100.2 L1030.83 98.56 L1028.05 96.93 L1025.26 95.3 L1022.46 93.67 L1019.66 92.04 L1016.84 90.4 L1014.02 88.77 L1011.19 87.14 L1008.35 85.51 L1005.5 83.88 L1002.64 82.25 L999.78 80.61 L996.91 78.98 L994.03 77.35 L991.15 75.72 L988.25 74.09 L985.36 72.45 L982.45 70.82 L979.54 69.19 L976.62 67.56 L973.7 65.93 L970.77 64.29 L967.84 62.66 L964.9 61.03 L961.96 59.4 L959.01 57.77 L956.06 56.13 L953.1 54.5 L950.14 52.87 L947.18 51.24 L944.21 49.61 L941.24 47.98 L938.27 46.34 L935.3 44.71 L932.32 43.08 L929.34 41.45 L926.36 39.82 L923.37 38.18 L920.39 36.55 L917.4 34.92 L914.41 33.29 L911.42 31.66 L908.43 30.02 L905.44 28.39 L902.45 26.76"/>
<path d="M902.45 614.24 L905.87 612.61 L909.29 610.98 L912.7 609.34 L916.12 607.71 L919.53 606.08 L922.95 604.45 L926.36 602.82 L929.77 601.18 L933.18 599.55 L936.58 597.92 L939.99 596.29 L943.39 594.66 L946.79 593.02 L950.18 591.39 L953.57 589.76 L956.96 588.13 L960.34 586.5 L963.72 584.87 L967.09 583.23 L970.46 581.6 L973.82 579.97 L977.18 578.34 L980.53 576.71 L983.88 575.07 L987.22 573.44 L990.55 571.81 L993.88 570.18 L997.2 568.55 L1000.51 566.91 L1003.82 565.28 L1007.11 563.65 L1010.4 562.02 L1013.69 560.39 L1016.96 558.75 L1020.22 557.12 L1023.48 555.49 L1026.72 553.86 L1029.96 552.23 L1033.19 550.6 L1036.4 548.96 L1039.61 547.33 L1042.81 545.7 L1045.99 544.07 L1049.17 542.44 L1052.33 540.8 L1055.48 539.17 L1058.62 537.54 L1061.75 535.91 L1064.87 534.28 L1067.97 532.64 L1071.06 531.01 L1074.14 529.38 L1077.2 527.75 L1080.26 526.12 L1083.29 524.49 L1086.32 522.85 L1089.33 521.22 L1092.33 519.59 L1095.31 517.96 L1098.28 516.33 L1101.23 514.69 L1104.17 513.06 L1107.09 511.43 L1109.99 509.8 L1112.88 508.17 L1115.76 506.53 L1118.62 504.9 L1121.46 503.27 L1124.28 501.64 L1127.09 500.01 L1129.88 498.38 L1132.66 496.74 L1135.41 495.11 L1138.15 493.48 L1140.87 491.85 L1143.57 490.22 L1146.26 488.58 L1148.92 486.95 L1151.57 485.32 L1154.2 483.69 L1156.81 482.06 L1159.4 480.42 L1161.97 478.79 L1164.52 477.16 L1167.05 475.53 L1169.56 473.9 L1172.05 472.27 L1174.51 470.63 L1176.96 469 L1179.39 467.37 L1181.8 465.74 L1184.18 464.11 L1186.54 462.47 L1188.89 460.84 L1191.21 459.21 L1193.5 457.58 L1195.78 455.95 L1198.03 454.31 L1200.26 452.68 L1202.47 451.05 L1204.66 449.42 L1206.82 447.79 L1208.96 446.15 L1211.08 444.52 L1213.17 442.89 L1215.24 441.26 L1217.28 439.63 L1219.3 438 L1221.3 436.36 L1223.27 434.73 L1225.22 433.1 L1227.14 431.47 L1229.04 429.84 L1230.92 428.2 L1232.77 426.57 L1234.59 424.94 L1236.39 423.31 L1238.16 421.68 L1239.91 420.04 L1241.63 418.41 L1243.33 416.78 L1245 415.15 L1246.64 413.52 L1248.26 411.89 L1249.85 410.25 L1251.41 408.62 L1252.95 406.99 L1254.46 405.36 L1255.95 403.73 L1257.41 402.09 L1258.84 400.46 L1260.24 398.83 L1261.62 397.2 L1262.97 395.57 L1264.29 393.93 L1265.58 392.3 L1266.85 390.67 L1268.09 389.04 L1269.3 387.41 L1270.48 385.78 L1271.64 384.14 L1272.76 382.51 L1273.86 380.88 L1274.93 379.25 L1275.98 377.62 L1276.99 375.98 L1277.97 374.35 L1278.93 372.72 L1279.86 371.09 L1280.76 369.46 L1281.63 367.82 L1282.47 366.19 L1283.28 364.56 L1284.06 362.93 L1284.82 361.3 L1285.54 359.67 L1286.24 358.03 L1286.91 356.4 L1287.54 354.77 L1288.15 353.14 L1288.73 351.51 L1289.28 349.87 L1289.8 348.24 L1290.29 346.61 L1290.75 344.98 L1291.18 343.35 L1291.58 341.71 L1291.96 340.08 L1292.3 338.45 L1292.61 336.82 L1292.89 335.19 L1293.15 333.56 L1293.37 331.92 L1293.57 330.29 L1293.73 328.66 L1293.86 327.03 L1293.97 325.4 L1294.04 323.76 L1294.09 322.13 L1294.1 320.5 L1294.09 318.87 L1294.04 317.24 L1293.97 315.6 L1293.86 313.97 L1293.73 312.34 L1293.57 310.71 L1293.37 309.08 L1293.15 307.44 L1292.89 305.81 L1292.61 304.18 L1292.3 302.55 L1291.96 300.92 L1291.58 299.29 L1291.18 297.65 L1290.75 296.02 L1290.29 294.39 L1289.8 292.76 L1289.28 291.13 L1288.73 289.49 L1288.15 287.86 L1287.54 286.23 L1286.91 284.6 L1286.24 282.97 L1285.54 281.33 L1284.82 279.7 L1284.06 278.07 L1283.28 276.44 L1282.47 274.81 L1281.63 273.18 L1280.76 271.54 L1279.86 269.91 L1278.93 268.28 L1277.97 266.65 L1276.99 265.02 L1275.98 263.38 L1274.93 261.75 L1273.86 260.12 L1272.76 258.49 L1271.64 256.86 L1270.48 255.22 L1269.3 253.59 L1268.09 251.96 L1266.85 250.33 L1265.58 248.7 L1264.29 247.07 L1262.97 245.43 L1261.62 243.8 L1260.24 242.17 L1258.84 240.54 L1257.41 238.91 L1255.95 237.27 L1254.46 235.64 L1252.95 234.01 L1251.41 232.38 L1249.85 230.75 L1248.26 229.11 L1246.64 227.48 L1245 225.85 L1243.33 224.22 L1241.63 222.59 L1239.91 220.96 L1238.16 219.32 L1236.39 217.69 L1234.59 216.06 L1232.77 214.43 L1230.92 212.8 L1229.04 211.16 L1227.14 209.53 L1225.22 207.9 L1223.27 206.27 L1221.3 204.64 L1219.3 203 L1217.28 201.37 L1215.24 199.74 L1213.17 198.11 L1211.08 196.48 L1208.96 194.85 L1206.82 193.21 L1204.66 191.58 L1202.47 189.95 L1200.26 188.32 L1198.03 186.69 L1195.78 185.05 L1193.5 183.42 L1191.21 181.79 L1188.89 180.16 L1186.54 178.53 L1184.18 176.89 L1181.8 175.26 L1179.39 173.63 L1176.96 172 L1174.51 170.37 L1172.05 168.73 L1169.56 167.1 L1167.05 165.47 L1164.52 163.84 L1161.97 162.21 L1159.4 160.58 L1156.81 158.94 L1154.2 157.31 L1151.57 155.68 L1148.92 154.05 L1146.26 152.42 L1143.57 150.78 L1140.87 149.15 L1138.15 147.52 L1135.41 145.89 L1132.66 144.26 L1129.88 142.62 L1127.09 140.99 L1124.28 139.36 L1121.46 137.73 L1118.62 136.1 L1115.76 134.47 L1112.88 132.83 L1109.99 131.2 L1107.09 129.57 L1104.17 127.94 L1101.23 126.31 L1098.28 124.67 L1095.31 123.04 L1092.33 121.41 L1089.33 119.78 L1086.32 118.15 L1083.29 116.51 L1080.26 114.88 L1077.2 113.25 L1074.14 111.62 L1071.06 109.99 L1067.97 108.36 L1064.87 106.72 L1061.75 105.09 L1058.62 103.46 L1055.48 101.83 L1052.33 100.2 L1049.17 98.56 L1045.99 96.93 L1042.81 95.3 L1039.61 93.67 L1036.4 92.04 L1033.19 90.4 L1029.96 88.77 L1026.72 87.14 L1023.48 85.51 L1020.22 83.88 L1016.96 82.25 L1013.69 80.61 L1010.4 78.98 L1007.11 77.35 L1003.82 75.72 L1000.51 74.09 L997.2 72.45 L993.88 70.82 L990.55 69.19 L987.22 67.56 L983.88 65.93 L980.53 64.29 L977.18 62.66 L973.82 61.03 L970.46 59.4 L967.09 57.77 L963.72 56.13 L960.34 54.5 L956.96 52.87 L953.57 51.24 L950.18 49.61 L946.79 47.98 L943.39 46.34 L939.99 44.71 L936.58 43.08 L933.18 41.45 L929.77 39.82 L926.36 38.18 L922.95 36.55 L919.53 34.92 L916.12 33.29 L912.7 31.66 L909.29 30.02 L905.87 28.39 L902.45 26.76"/>
<path d="M902.45 614.24 L906.29 612.61 L910.14 610.98 L913.98 609.34 L917.83 607.71 L921.67 606.08 L925.51 604.45 L929.35 602.82 L933.19 601.18 L937.02 599.55 L940.85 597.92 L944.68 596.29 L948.51 594.66 L952.33 593.02 L956.15 591.39 L959.96 589.76 L963.77 588.13 L967.58 586.5 L971.38 584.87 L975.17 583.23 L978.96 581.6 L982.74 579.97 L986.52 578.34 L990.29 576.71 L994.06 575.07 L997.82 573.44 L1001.57 571.81 L1005.31 570.18 L1009.04 568.55 L1012.77 566.91 L1016.49 565.28 L1020.2 563.65 L1023.9 562.02 L1027.59 560.39 L1031.27 558.75 L1034.94 557.12 L1038.61 555.49 L1042.26 553.86 L1045.9 552.23 L1049.53 550.6 L1053.15 548.96 L1056.75 547.33 L1060.35 545.7 L1063.93 544.07 L1067.5 542.44 L1071.06 540.8 L1074.61 539.17 L1078.14 537.54 L1081.66 535.91 L1085.17 534.28 L1088.66 532.64 L1092.14 531.01 L1095.6 529.38 L1099.05 527.75 L1102.48 526.12 L1105.9 524.49 L1109.3 522.85 L1112.69 521.22 L1116.06 519.59 L1119.42 517.96 L1122.75 516.33 L1126.08 514.69 L1129.38 513.06 L1132.67 511.43 L1135.94 509.8 L1139.19 508.17 L1142.42 506.53 L1145.64 504.9 L1148.84 503.27 L1152.01 501.64 L1155.17 500.01 L1158.31 498.38 L1161.43 496.74 L1164.53 495.11 L1167.61 493.48 L1170.68 491.85 L1173.72 490.22 L1176.74 488.58 L1179.73 486.95 L1182.71 485.32 L1185.67 483.69 L1188.6 482.06 L1191.52 480.42 L1194.41 478.79 L1197.27 477.16 L1200.12 475.53 L1202.94 473.9 L1205.74 472.27 L1208.52 470.63 L1211.28 469 L1214.01 467.37 L1216.71 465.74 L1219.4 464.11 L1222.06 462.47 L1224.69 460.84 L1227.3 459.21 L1229.89 457.58 L1232.45 455.95 L1234.98 454.31 L1237.49 452.68 L1239.98 451.05 L1242.43 449.42 L1244.87 447.79 L1247.27 446.15 L1249.65 444.52 L1252.01 442.89 L1254.34 441.26 L1256.64 439.63 L1258.91 438 L1261.16 436.36 L1263.38 434.73 L1265.57 433.1 L1267.73 431.47 L1269.87 429.84 L1271.98 428.2 L1274.06 426.57 L1276.11 424.94 L1278.13 423.31 L1280.13 421.68 L1282.09 420.04 L1284.03 418.41 L1285.94 416.78 L1287.81 415.15 L1289.66 413.52 L1291.48 411.89 L1293.27 410.25 L1295.03 408.62 L1296.77 406.99 L1298.47 405.36 L1300.14 403.73 L1301.78 402.09 L1303.39 400.46 L1304.97 398.83 L1306.51 397.2 L1308.03 395.57 L1309.52 393.93 L1310.97 392.3 L1312.4 390.67 L1313.79 389.04 L1315.16 387.41 L1316.49 385.78 L1317.79 384.14 L1319.05 382.51 L1320.29 380.88 L1321.49 379.25 L1322.67 377.62 L1323.81 375.98 L1324.91 374.35 L1325.99 372.72 L1327.03 371.09 L1328.05 369.46 L1329.02 367.82 L1329.97 366.19 L1330.88 364.56 L1331.77 362.93 L1332.61 361.3 L1333.43 359.67 L1334.21 358.03 L1334.96 356.4 L1335.68 354.77 L1336.36 353.14 L1337.02 351.51 L1337.63 349.87 L1338.22 348.24 L1338.77 346.61 L1339.29 344.98 L1339.77 343.35 L1340.23 341.71 L1340.64 340.08 L1341.03 338.45 L1341.38 336.82 L1341.7 335.19 L1341.99 333.56 L1342.24 331.92 L1342.45 330.29 L1342.64 328.66 L1342.79 327.03 L1342.91 325.4 L1342.99 323.76 L1343.04 322.13 L1343.06 320.5 L1343.04 318.87 L1342.99 317.24 L1342.91 315.6 L1342.79 313.97 L1342.64 312.34 L1342.45 310.71 L1342.24 309.08 L1341.99 307.44 L1341.7 305.81 L1341.38 304.18 L1341.03 302.55 L1340.64 300.92 L1340.23 299.29 L1339.77 297.65 L1339.29 296.02 L1338.77 294.39 L1338.22 292.76 L1337.63 291.13 L1337.02 289.49 L1336.36 287.86 L1335.68 286.23 L1334.96 284.6 L1334.21 282.97 L1333.43 281.33 L1332.61 279.7 L1331.77 278.07 L1330.88 276.44 L1329.97 274.81 L1329.02 273.18 L1328.05 271.54 L1327.03 269.91 L1325.99 268.28 L1324.91 266.65 L1323.81 265.02 L1322.67 263.38 L1321.49 261.75 L1320.29 260.12 L1319.05 258.49 L1317.79 256.86 L1316.49 255.22 L1315.16 253.59 L1313.79 251.96 L1312.4 250.33 L1310.97 248.7 L1309.52 247.07 L1308.03 245.43 L1306.51 243.8 L1304.97 242.17 L1303.39 240.54 L1301.78 238.91 L1300.14 237.27 L1298.47 235.64 L1296.77 234.01 L1295.03 232.38 L1293.27 230.75 L1291.48 229.11 L1289.66 227.48 L1287.81 225.85 L1285.94 224.22 L1284.03 222.59 L1282.09 220.96 L1280.13 219.32 L1278.13 217.69 L1276.11 216.06 L1274.06 214.43 L1271.98 212.8 L1269.87 211.16 L1267.73 209.53 L1265.57 207.9 L1263.38 206.27 L1261.16 204.64 L1258.91 203 L1256.64 201.37 L1254.34 199.74 L1252.01 198.11 L1249.65 196.48 L1247.27 194.85 L1244.87 193.21 L1242.43 191.58 L1239.98 189.95 L1237.49 188.32 L1234.98 186.69 L1232.45 185.05 L1229.89 183.42 L1227.3 181.79 L1224.69 180.16 L1222.06 178.53 L1219.4 176.89 L1216.71 175.26 L1214.01 173.63 L1211.28 172 L1208.52 170.37 L1205.74 168.73 L1202.94 167.1 L1200.12 165.47 L1197.27 163.84 L1194.41 162.21 L1191.52 160.58 L1188.6 158.94 L1185.67 157.31 L1182.71 155.68 L1179.73 154.05 L1176.74 152.42 L1173.72 150.78 L1170.68 149.15 L1167.61 147.52 L1164.53 145.89 L1161.43 144.26 L1158.31 142.62 L1155.17 140.99 L1152.01 139.36 L1148.84 137.73 L1145.64 136.1 L1142.42 134.47 L1139.19 132.83 L1135.94 131.2 L1132.67 129.57 L1129.38 127.94 L1126.08 126.31 L1122.75 124.67 L1119.42 123.04 L1116.06 121.41 L1112.69 119.78 L1109.3 118.15 L1105.9 116.51 L1102.48 114.88 L1099.05 113.25 L1095.6 111.62 L1092.14 109.99 L1088.66 108.36 L1085.17 106.72 L1081.66 105.09 L1078.14 103.46 L1074.61 101.83 L1071.06 100.2 L1067.5 98.56 L1063.93 96.93 L1060.35 95.3 L1056.75 93.67 L1053.15 92.04 L1049.53 90.4 L1045.9 88.77 L1042.26 87.14 L1038.61 85.51 L1034.94 83.88 L1031.27 82.25 L1027.59 80.61 L1023.9 78.98 L1020.2 77.35 L1016.49 75.72 L1012.77 74.09 L1009.04 72.45 L1005.31 70.82 L1001.57 69.19 L997.82 67.56 L994.06 65.93 L990.29 64.29 L986.52 62.66 L982.74 61.03 L978.96 59.4 L975.17 57.77 L971.38 56.13 L967.58 54.5 L963.77 52.87 L959.96 51.24 L956.15 49.61 L952.33 47.98 L948.51 46.34 L944.68 44.71 L940.85 43.08 L937.02 41.45 L933.19 39.82 L929.35 38.18 L925.51 36.55 L921.67 34.92 L917.83 33.29 L913.98 31.66 L910.14 30.02 L906.29 28.39 L902.45 26.76"/>
<path d="M902.45 614.24 L906.72 612.61 L910.99 610.98 L915.27 609.34 L919.54 607.71 L923.8 606.08 L928.07 604.45 L932.34 602.82 L936.6 601.18 L940.86 599.55 L945.12 597.92 L949.37 596.29 L953.62 594.66 L957.87 593.02 L962.11 591.39 L966.35 589.76 L970.58 588.13 L974.81 586.5 L979.03 584.87 L983.25 583.23 L987.46 581.6 L991.67 579.97 L995.86 578.34 L1000.05 576.71 L1004.24 575.07 L1008.41 573.44 L1012.58 571.81 L1016.74 570.18 L1020.89 568.55 L1025.03 566.91 L1029.16 565.28 L1033.28 563.65 L1037.39 562.02 L1041.49 560.39 L1045.58 558.75 L1049.66 557.12 L1053.73 555.49 L1057.79 553.86 L1061.84 552.23 L1065.87 550.6 L1069.89 548.96 L1073.9 547.33 L1077.89 545.7 L1081.88 544.07 L1085.84 542.44 L1089.8 540.8 L1093.74 539.17 L1097.66 537.54 L1101.57 535.91 L1105.47 534.28 L1109.35 532.64 L1113.21 531.01 L1117.06 529.38 L1120.89 527.75 L1124.71 526.12 L1128.51 524.49 L1132.29 522.85 L1136.05 521.22 L1139.8 519.59 L1143.52 517.96 L1147.23 516.33 L1150.92 514.69 L1154.59 513.06 L1158.25 511.43 L1161.88 509.8 L1165.49 508.17 L1169.09 506.53 L1172.66 504.9 L1176.21 503.27 L1179.74 501.64 L1183.25 500.01 L1186.74 498.38 L1190.21 496.74 L1193.65 495.11 L1197.08 493.48 L1200.48 491.85 L1203.86 490.22 L1207.21 488.58 L1210.54 486.95 L1213.85 485.32 L1217.14 483.69 L1220.4 482.06 L1223.63 480.42 L1226.85 478.79 L1230.03 477.16 L1233.2 475.53 L1236.33 473.9 L1239.44 472.27 L1242.53 470.63 L1245.59 469 L1248.62 467.37 L1251.63 465.74 L1254.61 464.11 L1257.57 462.47 L1260.5 460.84 L1263.4 459.21 L1266.27 457.58 L1269.11 455.95 L1271.93 454.31 L1274.72 452.68 L1277.48 451.05 L1280.21 449.42 L1282.91 447.79 L1285.59 446.15 L1288.23 444.52 L1290.85 442.89 L1293.43 441.26 L1295.99 439.63 L1298.52 438 L1301.01 436.36 L1303.48 434.73 L1305.91 433.1 L1308.32 431.47 L1310.69 429.84 L1313.03 428.2 L1315.34 426.57 L1317.62 424.94 L1319.87 423.31 L1322.09 421.68 L1324.27 420.04 L1326.43 418.41 L1328.55 416.78 L1330.63 415.15 L1332.69 413.52 L1334.71 411.89 L1336.7 410.25 L1338.66 408.62 L1340.58 406.99 L1342.47 405.36 L1344.32 403.73 L1346.15 402.09 L1347.94 400.46 L1349.69 398.83 L1351.41 397.2 L1353.1 395.57 L1354.75 393.93 L1356.37 392.3 L1357.95 390.67 L1359.5 389.04 L1361.01 387.41 L1362.49 385.78 L1363.93 384.14 L1365.34 382.51 L1366.72 380.88 L1368.05 379.25 L1369.36 377.62 L1370.62 375.98 L1371.85 374.35 L1373.05 372.72 L1374.21 371.09 L1375.33 369.46 L1376.42 367.82 L1377.47 366.19 L1378.49 364.56 L1379.47 362.93 L1380.41 361.3 L1381.32 359.67 L1382.19 358.03 L1383.02 356.4 L1383.82 354.77 L1384.58 353.14 L1385.3 351.51 L1385.99 349.87 L1386.64 348.24 L1387.25 346.61 L1387.83 344.98 L1388.37 343.35 L1388.87 341.71 L1389.33 340.08 L1389.76 338.45 L1390.15 336.82 L1390.51 335.19 L1390.82 333.56 L1391.1 331.92 L1391.34 330.29 L1391.55 328.66 L1391.72 327.03 L1391.85 325.4 L1391.94 323.76 L1392 322.13 L1392.01 320.5 L1392 318.87 L1391.94 317.24 L1391.85 315.6 L1391.72 313.97 L1391.55 312.34 L1391.34 310.71 L1391.1 309.08 L1390.82 307.44 L1390.51 305.81 L1390.15 304.18 L1389.76 302.55 L1389.33 300.92 L1388.87 299.29 L1388.37 297.65 L1387.83 296.02 L1387.25 294.39 L1386.64 292.76 L1385.99 291.13 L1385.3 289.49 L1384.58 287.86 L1383.82 286.23 L1383.02 284.6 L1382.19 282.97 L1381.32 281.33 L1380.41 279.7 L1379.47 278.07 L1378.49 276.44 L1377.47 274.81 L1376.42 273.18 L1375.33 271.54 L1374.21 269.91 L1373.05 268.28 L1371.85 266.65 L1370.62 265.02 L1369.36 263.38 L1368.05 261.75 L1366.72 260.12 L1365.34 258.49 L1363.93 256.86 L1362.49 255.22 L1361.01 253.59 L1359.5 251.96 L1357.95 250.33 L1356.37 248.7 L1354.75 247.07 L1353.1 245.43 L1351.41 243.8 L1349.69 242.17 L1347.94 240.54 L1346.15 238.91 L1344.32 237.27 L1342.47 235.64 L1340.58 234.01 L1338.66 232.38 L1336.7 230.75 L1334.71 229.11 L1332.69 227.48 L1330.63 225.85 L1328.55 224.22 L1326.43 222.59 L1324.27 220.96 L1322.09 219.32 L1319.87 217.69 L1317.62 216.06 L1315.34 214.43 L1313.03 212.8 L1310.69 211.16 L1308.32 209.53 L1305.91 207.9 L1303.48 206.27 L1301.01 204.64 L1298.52 203 L1295.99 201.37 L1293.43 199.74 L1290.85 198.11 L1288.23 196.48 L1285.59 194.85 L1282.91 193.21 L1280.21 191.58 L1277.48 189.95 L1274.72 188.32 L1271.93 186.69 L1269.11 185.05 L1266.27 183.42 L1263.4 181.79 L1260.5 180.16 L1257.57 178.53 L1254.61 176.89 L1251.63 175.26 L1248.62 173.63 L1245.59 172 L1242.53 170.37 L1239.44 168.73 L1236.33 167.1 L1233.2 165.47 L1230.03 163.84 L1226.85 162.21 L1223.63 160.58 L1220.4 158.94 L1217.14 157.31 L1213.85 155.68 L1210.54 154.05 L1207.21 152.42 L1203.86 150.78 L1200.48 149.15 L1197.08 147.52 L1193.65 145.89 L1190.21 144.26 L1186.74 142.62 L1183.25 140.99 L1179.74 139.36 L1176.21 137.73 L1172.66 136.1 L1169.09 134.47 L1165.49 132.83 L1161.88 131.2 L1158.25 129.57 L1154.59 127.94 L1150.92 126.31 L1147.23 124.67 L1143.52 123.04 L1139.8 121.41 L1136.05 119.78 L1132.29 118.15 L1128.51 116.51 L1124.71 114.88 L1120.89 113.25 L1117.06 111.62 L1113.21 109.99 L1109.35 108.36 L1105.47 106.72 L1101.57 105.09 L1097.66 103.46 L1093.74 101.83 L1089.8 100.2 L1085.84 98.56 L1081.88 96.93 L1077.89 95.3 L1073.9 93.67 L1069.89 92.04 L1065.87 90.4 L1061.84 88.77 L1057.79 87.14 L1053.73 85.51 L1049.66 83.88 L1045.58 82.25 L1041.49 80.61 L1037.39 78.98 L1033.28 77.35 L1029.16 75.72 L1025.03 74.09 L1020.89 72.45 L1016.74 70.82 L1012.58 69.19 L1008.41 67.56 L1004.24 65.93 L1000.05 64.29 L995.86 62.66 L991.67 61.03 L987.46 59.4 L983.25 57.77 L979.03 56.13 L974.81 54.5 L970.58 52.87 L966.35 51.24 L962.11 49.61 L957.87 47.98 L953.62 46.34 L949.37 44.71 L945.12 43.08 L940.86 41.45 L936.6 39.82 L932.34 38.18 L928.07 36.55 L923.8 34.92 L919.54 33.29 L915.27 31.66 L910.99 30.02 L906.72 28.39 L902.45 26.76"/>
<path d="M902.45 614.24 L907.15 612.61 L911.85 610.98 L916.55 609.34 L921.24 607.71 L925.94 606.08 L930.63 604.45 L935.33 602.82 L940.02 601.18 L944.7 599.55 L949.39 597.92 L954.06 596.29 L958.74 594.66 L963.41 593.02 L968.08 591.39 L972.74 589.76 L977.4 588.13 L982.05 586.5 L986.69 584.87 L991.33 583.23 L995.96 581.6 L1000.59 579.97 L1005.2 578.34 L1009.81 576.71 L1014.41 575.07 L1019.01 573.44 L1023.59 571.81 L1028.17 570.18 L1032.73 568.55 L1037.28 566.91 L1041.83 565.28 L1046.36 563.65 L1050.89 562.02 L1055.4 560.39 L1059.9 558.75 L1064.39 557.12 L1068.86 555.49 L1073.33 553.86 L1077.78 552.23 L1082.21 550.6 L1086.64 548.96 L1091.04 547.33 L1095.44 545.7 L1099.82 544.07 L1104.18 542.44 L1108.53 540.8 L1112.87 539.17 L1117.18 537.54 L1121.49 535.91 L1125.77 534.28 L1130.04 532.64 L1134.29 531.01 L1138.52 529.38 L1142.74 527.75 L1146.93 526.12 L1151.11 524.49 L1155.27 522.85 L1159.41 521.22 L1163.53 519.59 L1167.63 517.96 L1171.71 516.33 L1175.77 514.69 L1179.81 513.06 L1183.83 511.43 L1187.82 509.8 L1191.8 508.17 L1195.75 506.53 L1199.68 504.9 L1203.59 503.27 L1207.47 501.64 L1211.33 500.01 L1215.17 498.38 L1218.98 496.74 L1222.77 495.11 L1226.54 493.48 L1230.28 491.85 L1234 490.22 L1237.69 488.58 L1241.35 486.95 L1244.99 485.32 L1248.6 483.69 L1252.19 482.06 L1255.75 480.42 L1259.29 478.79 L1262.79 477.16 L1266.27 475.53 L1269.72 473.9 L1273.14 472.27 L1276.54 470.63 L1279.9 469 L1283.24 467.37 L1286.55 465.74 L1289.83 464.11 L1293.08 462.47 L1296.3 460.84 L1299.49 459.21 L1302.65 457.58 L1305.78 455.95 L1308.88 454.31 L1311.94 452.68 L1314.98 451.05 L1317.99 449.42 L1320.96 447.79 L1323.9 446.15 L1326.81 444.52 L1329.69 442.89 L1332.53 441.26 L1335.34 439.63 L1338.12 438 L1340.87 436.36 L1343.58 434.73 L1346.26 433.1 L1348.9 431.47 L1351.52 429.84 L1354.09 428.2 L1356.63 426.57 L1359.14 424.94 L1361.61 423.31 L1364.05 421.68 L1366.46 420.04 L1368.82 418.41 L1371.16 416.78 L1373.45 415.15 L1375.71 413.52 L1377.94 411.89 L1380.12 410.25 L1382.28 408.62 L1384.39 406.99 L1386.47 405.36 L1388.51 403.73 L1390.52 402.09 L1392.48 400.46 L1394.41 398.83 L1396.31 397.2 L1398.16 395.57 L1399.98 393.93 L1401.76 392.3 L1403.5 390.67 L1405.2 389.04 L1406.87 387.41 L1408.49 385.78 L1410.08 384.14 L1411.63 382.51 L1413.14 380.88 L1414.61 379.25 L1416.05 377.62 L1417.44 375.98 L1418.79 374.35 L1420.11 372.72 L1421.39 371.09 L1422.62 369.46 L1423.82 367.82 L1424.97 366.19 L1426.09 364.56 L1427.17 362.93 L1428.21 361.3 L1429.2 359.67 L1430.16 358.03 L1431.08 356.4 L1431.95 354.77 L1432.79 353.14 L1433.59 351.51 L1434.34 349.87 L1435.06 348.24 L1435.73 346.61 L1436.36 344.98 L1436.96 343.35 L1437.51 341.71 L1438.02 340.08 L1438.49 338.45 L1438.92 336.82 L1439.31 335.19 L1439.66 333.56 L1439.97 331.92 L1440.23 330.29 L1440.46 328.66 L1440.64 327.03 L1440.79 325.4 L1440.89 323.76 L1440.95 322.13 L1440.97 320.5 L1440.95 318.87 L1440.89 317.24 L1440.79 315.6 L1440.64 313.97 L1440.46 312.34 L1440.23 310.71 L1439.97 309.08 L1439.66 307.44 L1439.31 305.81 L1438.92 304.18 L1438.49 302.55 L1438.02 300.92 L1437.51 299.29 L1436.96 297.65 L1436.36 296.02 L1435.73 294.39 L1435.06 292.76 L1434.34 291.13 L1433.59 289.49 L1432.79 287.86 L1431.95 286.23 L1431.08 284.6 L1430.16 282.97 L1429.2 281.33 L1428.21 279.7 L1427.17 278.07 L1426.09 276.44 L1424.97 274.81 L1423.82 273.18 L1422.62 271.54 L1421.39 269.91 L1420.11 268.28 L1418.79 266.65 L1417.44 265.02 L1416.05 263.38 L1414.61 261.75 L1413.14 260.12 L1411.63 258.49 L1410.08 256.86 L1408.49 255.22 L1406.87 253.59 L1405.2 251.96 L1403.5 250.33 L1401.76 248.7 L1399.98 247.07 L1398.16 245.43 L1396.31 243.8 L1394.41 242.17 L1392.48 240.54 L1390.52 238.91 L1388.51 237.27 L1386.47 235.64 L1384.39 234.01 L1382.28 232.38 L1380.12 230.75 L1377.94 229.11 L1375.71 227.48 L1373.45 225.85 L1371.16 224.22 L1368.82 222.59 L1366.46 220.96 L1364.05 219.32 L1361.61 217.69 L1359.14 216.06 L1356.63 214.43 L1354.09 212.8 L1351.52 211.16 L1348.9 209.53 L1346.26 207.9 L1343.58 206.27 L1340.87 204.64 L1338.12 203 L1335.34 201.37 L1332.53 199.74 L1329.69 198.11 L1326.81 196.48 L1323.9 194.85 L1320.96 193.21 L1317.99 191.58 L1314.98 189.95 L1311.94 188.32 L1308.88 186.69 L1305.78 185.05 L1302.65 183.42 L1299.49 181.79 L1296.3 180.16 L1293.08 178.53 L1289.83 176.89 L1286.55 175.26 L1283.24 173.63 L1279.9 172 L1276.54 170.37 L1273.14 168.73 L1269.72 167.1 L1266.27 165.47 L1262.79 163.84 L1259.29 162.21 L1255.75 160.58 L1252.19 158.94 L1248.6 157.31 L1244.99 155.68 L1241.35 154.05 L1237.69 152.42 L1234 150.78 L1230.28 149.15 L1226.54 147.52 L1222.77 145.89 L1218.98 144.26 L1215.17 142.62 L1211.33 140.99 L1207.47 139.36 L1203.59 137.73 L1199.68 136.1 L1195.75 134.47 L1191.8 132.83 L1187.82 131.2 L1183.83 129.57 L1179.81 127.94 L1175.77 126.31 L1171.71 124.67 L1167.63 123.04 L1163.53 121.41 L1159.41 119.78 L1155.27 118.15 L1151.11 116.51 L1146.93 114.88 L1142.74 113.25 L1138.52 111.62 L1134.29 109.99 L1130.04 108.36 L1125.77 106.72 L1121.49 105.09 L1117.18 103.46 L1112.87 101.83 L1108.53 100.2 L1104.18 98.56 L1099.82 96.93 L1095.44 95.3 L1091.04 93.67 L1086.64 92.04 L1082.21 90.4 L1077.78 88.77 L1073.33 87.14 L1068.86 85.51 L1064.39 83.88 L1059.9 82.25 L1055.4 80.61 L1050.89 78.98 L1046.36 77.35 L1041.83 75.72 L1037.28 74.09 L1032.73 72.45 L1028.17 70.82 L1023.59 69.19 L1019.01 67.56 L1014.41 65.93 L1009.81 64.29 L1005.2 62.66 L1000.59 61.03 L995.96 59.4 L991.33 57.77 L986.69 56.13 L982.05 54.5 L977.4 52.87 L972.74 51.24 L968.08 49.61 L963.41 47.98 L958.74 46.34 L954.06 44.71 L949.39 43.08 L944.7 41.45 L940.02 39.82 L935.33 38.18 L930.63 36.55 L925.94 34.92 L921.24 33.29 L916.55 31.66 L911.85 30.02 L907.15 28.39 L902.45 26.76"/>
<path d="M902.45 614.24 L907.58 612.61 L912.7 610.98 L917.83 609.34 L922.95 607.71 L928.08 606.08 L933.2 604.45 L938.31 602.82 L943.43 601.18 L948.54 599.55 L953.65 597.92 L958.76 596.29 L963.86 594.66 L968.95 593.02 L974.05 591.39 L979.13 589.76 L984.21 588.13 L989.28 586.5 L994.35 584.87 L999.41 583.23 L1004.46 581.6 L1009.51 579.97 L1014.55 578.34 L1019.57 576.71 L1024.59 575.07 L1029.6 573.44 L1034.6 571.81 L1039.59 570.18 L1044.57 568.55 L1049.54 566.91 L1054.5 565.28 L1059.45 563.65 L1064.38 562.02 L1069.3 560.39 L1074.21 558.75 L1079.11 557.12 L1083.99 555.49 L1088.86 553.86 L1093.71 552.23 L1098.55 550.6 L1103.38 548.96 L1108.19 547.33 L1112.98 545.7 L1117.76 544.07 L1122.52 542.44 L1127.27 540.8 L1132 539.17 L1136.71 537.54 L1141.4 535.91 L1146.07 534.28 L1150.73 532.64 L1155.37 531.01 L1159.98 529.38 L1164.58 527.75 L1169.16 526.12 L1173.72 524.49 L1178.25 522.85 L1182.77 521.22 L1187.26 519.59 L1191.74 517.96 L1196.19 516.33 L1200.62 514.69 L1205.02 513.06 L1209.41 511.43 L1213.77 509.8 L1218.1 508.17 L1222.41 506.53 L1226.7 504.9 L1230.96 503.27 L1235.2 501.64 L1239.41 500.01 L1243.6 498.38 L1247.76 496.74 L1251.9 495.11 L1256 493.48 L1260.08 491.85 L1264.14 490.22 L1268.16 488.58 L1272.16 486.95 L1276.13 485.32 L1280.07 483.69 L1283.99 482.06 L1287.87 480.42 L1291.72 478.79 L1295.55 477.16 L1299.34 475.53 L1303.11 473.9 L1306.84 472.27 L1310.55 470.63 L1314.22 469 L1317.86 467.37 L1321.47 465.74 L1325.05 464.11 L1328.59 462.47 L1332.1 460.84 L1335.58 459.21 L1339.03 457.58 L1342.44 455.95 L1345.83 454.31 L1349.17 452.68 L1352.48 451.05 L1355.76 449.42 L1359.01 447.79 L1362.21 446.15 L1365.39 444.52 L1368.53 442.89 L1371.63 441.26 L1374.7 439.63 L1377.73 438 L1380.72 436.36 L1383.68 434.73 L1386.61 433.1 L1389.49 431.47 L1392.34 429.84 L1395.15 428.2 L1397.92 426.57 L1400.66 424.94 L1403.36 423.31 L1406.02 421.68 L1408.64 420.04 L1411.22 418.41 L1413.76 416.78 L1416.27 415.15 L1418.74 413.52 L1421.16 411.89 L1423.55 410.25 L1425.9 408.62 L1428.2 406.99 L1430.47 405.36 L1432.7 403.73 L1434.89 402.09 L1437.03 400.46 L1439.14 398.83 L1441.2 397.2 L1443.23 395.57 L1445.21 393.93 L1447.15 392.3 L1449.05 390.67 L1450.91 389.04 L1452.72 387.41 L1454.5 385.78 L1456.23 384.14 L1457.92 382.51 L1459.57 380.88 L1461.17 379.25 L1462.74 377.62 L1464.26 375.98 L1465.74 374.35 L1467.17 372.72 L1468.56 371.09 L1469.91 369.46 L1471.22 367.82 L1472.48 366.19 L1473.7 364.56 L1474.87 362.93 L1476 361.3 L1477.09 359.67 L1478.13 358.03 L1479.13 356.4 L1480.09 354.77 L1481 353.14 L1481.87 351.51 L1482.69 349.87 L1483.47 348.24 L1484.21 346.61 L1484.9 344.98 L1485.55 343.35 L1486.15 341.71 L1486.71 340.08 L1487.22 338.45 L1487.69 336.82 L1488.12 335.19 L1488.5 333.56 L1488.83 331.92 L1489.12 330.29 L1489.37 328.66 L1489.57 327.03 L1489.73 325.4 L1489.84 323.76 L1489.91 322.13 L1489.93 320.5 L1489.91 318.87 L1489.84 317.24 L1489.73 315.6 L1489.57 313.97 L1489.37 312.34 L1489.12 310.71 L1488.83 309.08 L1488.5 307.44 L1488.12 305.81 L1487.69 304.18 L1487.22 302.55 L1486.71 300.92 L1486.15 299.29 L1485.55 297.65 L1484.9 296.02 L1484.21 294.39 L1483.47 292.76 L1482.69 291.13 L1481.87 289.49 L1481 287.86 L1480.09 286.23 L1479.13 284.6 L1478.13 282.97 L1477.09 281.33 L1476 279.7 L1474.87 278.07 L1473.7 276.44 L1472.48 274.81 L1471.22 273.18 L1469.91 271.54 L1468.56 269.91 L1467.17 268.28 L1465.74 266.65 L1464.26 265.02 L1462.74 263.38 L1461.17 261.75 L1459.57 260.12 L1457.92 258.49 L1456.23 256.86 L1454.5 255.22 L1452.72 253.59 L1450.91 251.96 L1449.05 250.33 L1447.15 248.7 L1445.21 247.07 L1443.23 245.43 L1441.2 243.8 L1439.14 242.17 L1437.03 240.54 L1434.89 238.91 L1432.7 237.27 L1430.47 235.64 L1428.2 234.01 L1425.9 232.38 L1423.55 230.75 L1421.16 229.11 L1418.74 227.48 L1416.27 225.85 L1413.76 224.22 L1411.22 222.59 L1408.64 220.96 L1406.02 219.32 L1403.36 217.69 L1400.66 216.06 L1397.92 214.43 L1395.15 212.8 L1392.34 211.16 L1389.49 209.53 L1386.61 207.9 L1383.68 206.27 L1380.72 204.64 L1377.73 203 L1374.7 201.37 L1371.63 199.74 L1368.53 198.11 L1365.39 196.48 L1362.21 194.85 L1359.01 193.21 L1355.76 191.58 L1352.48 189.95 L1349.17 188.32 L1345.83 186.69 L1342.44 185.05 L1339.03 183.42 L1335.58 181.79 L1332.1 180.16 L1328.59 178.53 L1325.05 176.89 L1321.47 175.26 L1317.86 173.63 L1314.22 172 L1310.55 170.37 L1306.84 168.73 L1303.11 167.1 L1299.34 165.47 L1295.55 163.84 L1291.72 162.21 L1287.87 160.58 L1283.99 158.94 L1280.07 157.31 L1276.13 155.68 L1272.16 154.05 L1268.16 152.42 L1264.14 150.78 L1260.08 149.15 L1256 147.52 L1251.9 145.89 L1247.76 144.26 L1243.6 142.62 L1239.41 140.99 L1235.2 139.36 L1230.96 137.73 L1226.7 136.1 L1222.41 134.47 L1218.1 132.83 L1213.77 131.2 L1209.41 129.57 L1205.02 127.94 L1200.62 126.31 L1196.19 124.67 L1191.74 123.04 L1187.26 121.41 L1182.77 119.78 L1178.25 118.15 L1173.72 116.51 L1169.16 114.88 L1164.58 113.25 L1159.98 111.62 L1155.37 109.99 L1150.73 108.36 L1146.07 106.72 L1141.4 105.09 L1136.71 103.46 L1132 101.83 L1127.27 100.2 L1122.52 98.56 L1117.76 96.93 L1112.98 95.3 L1108.19 93.67 L1103.38 92.04 L1098.55 90.4 L1093.71 88.77 L1088.86 87.14 L1083.99 85.51 L1079.11 83.88 L1074.21 82.25 L1069.3 80.61 L1064.38 78.98 L1059.45 77.35 L1054.5 75.72 L1049.54 74.09 L1044.57 72.45 L1039.59 70.82 L1034.6 69.19 L1029.6 67.56 L1024.59 65.93 L1019.57 64.29 L1014.55 62.66 L1009.51 61.03 L1004.46 59.4 L999.41 57.77 L994.35 56.13 L989.28 54.5 L984.21 52.87 L979.13 51.24 L974.05 49.61 L968.95 47.98 L963.86 46.34 L958.76 44.71 L953.65 43.08 L948.54 41.45 L943.43 39.82 L938.31 38.18 L933.2 36.55 L928.08 34.92 L922.95 33.29 L917.83 31.66 L912.7 30.02 L907.58 28.39 L902.45 26.76"/>
<path d="M1054.5 565.28 L1052.81 565.28 L1051.12 565.28 L1049.43 565.28 L1047.74 565.28 L1046.05 565.28 L1044.36 565.28 L1042.67 565.28 L1040.98 565.28 L1039.3 565.28 L1037.61 565.28 L1035.92 565.28 L1034.23 565.28 L1032.54 565.28 L1030.85 565.28 L1029.16 565.28 L1027.47 565.28 L1025.78 565.28 L1024.09 565.28 L1022.4 565.28 L1020.71 565.28 L1019.02 565.28 L1017.33 565.28 L1015.64 565.28 L1013.95 565.28 L1012.26 565.28 L1010.57 565.28 L1008.89 565.28 L1007.2 565.28 L1005.51 565.28 L1003.82 565.28 L1002.13 565.28 L1000.44 565.28 L998.75 565.28 L997.06 565.28 L995.37 565.28 L993.68 565.28 L991.99 565.28 L990.3 565.28 L988.61 565.28 L986.92 565.28 L985.23 565.28 L983.54 565.28 L981.85 565.28 L980.16 565.28 L978.48 565.28 L976.79 565.28 L975.1 565.28 L973.41 565.28 L971.72 565.28 L970.03 565.28 L968.34 565.28 L966.65 565.28 L964.96 565.28 L963.27 565.28 L961.58 565.28 L959.89 565.28 L958.2 565.28 L956.51 565.28 L954.82 565.28 L953.13 565.28 L951.44 565.28 L949.75 565.28 L948.07 565.28 L946.38 565.28 L944.69 565.28 L943 565.28 L941.31 565.28 L939.62 565.28 L937.93 565.28 L936.24 565.28 L934.55 565.28 L932.86 565.28 L931.17 565.28 L929.48 565.28 L927.79 565.28 L926.1 565.28 L924.41 565.28 L922.72 565.28 L921.03 565.28 L919.34 565.28 L917.66 565.28 L915.97 565.28 L914.28 565.28 L912.59 565.28 L910.9 565.28 L909.21 565.28 L907.52 565.28 L905.83 565.28 L904.14 565.28 L902.45 565.28 L900.76 565.28 L899.07 565.28 L897.38 565.28 L895.69 565.28 L894 565.28 L892.31 565.28 L890.62 565.28 L888.93 565.28 L887.24 565.28 L885.56 565.28 L883.87 565.28 L882.18 565.28 L880.49 565.28 L878.8 565.28 L877.11 565.28 L875.42 565.28 L873.73 565.28 L872.04 565.28 L870.35 565.28 L868.66 565.28 L866.97 565.28 L865.28 565.28 L863.59 565.28 L861.9 565.28 L860.21 565.28 L858.52 565.28 L856.83 565.28 L855.15 565.28 L853.46 565.28 L851.77 565.28 L850.08 565.28 L848.39 565.28 L846.7 565.28 L845.01 565.28 L843.32 565.28 L841.63 565.28 L839.94 565.28 L838.25 565.28 L836.56 565.28 L834.87 565.28 L833.18 565.28 L831.49 565.28 L829.8 565.28 L828.11 565.28 L826.42 565.28 L824.74 565.28 L823.05 565.28 L821.36 565.28 L819.67 565.28 L817.98 565.28 L816.29 565.28 L814.6 565.28 L812.91 565.28 L811.22 565.28 L809.53 565.28 L807.84 565.28 L806.15 565.28 L804.46 565.28 L802.77 565.28 L801.08 565.28 L799.39 565.28 L797.7 565.28 L796.01 565.28 L794.33 565.28 L792.64 565.28 L790.95 565.28 L789.26 565.28 L787.57 565.28 L785.88 565.28 L784.19 565.28 L782.5 565.28 L780.81 565.28 L779.12 565.28 L777.43 565.28 L775.74 565.28 L774.05 565.28 L772.36 565.28 L770.67 565.28 L768.98 565.28 L767.29 565.28 L765.6 565.28 L763.92 565.28 L762.23 565.28 L760.54 565.28 L758.85 565.28 L757.16 565.28 L755.47 565.28 L753.78 565.28 L752.09 565.28 L750.4 565.28"/>
<path d="M1196.19 516.33 L1192.93 516.33 L1189.66 516.33 L1186.4 516.33 L1183.13 516.33 L1179.87 516.33 L1176.61 516.33 L1173.34 516.33 L1170.08 516.33 L1166.82 516.33 L1163.55 516.33 L1160.29 516.33 L1157.02 516.33 L1153.76 516.33 L1150.5 516.33 L1147.23 516.33 L1143.97 516.33 L1140.7 516.33 L1137.44 516.33 L1134.18 516.33 L1130.91 516.33 L1127.65 516.33 L1124.39 516.33 L1121.12 516.33 L1117.86 516.33 L1114.59 516.33 L1111.33 516.33 L1108.07 516.33 L1104.8 516.33 L1101.54 516.33 L1098.28 516.33 L1095.01 516.33 L1091.75 516.33 L1088.48 516.33 L1085.22 516.33 L1081.96 516.33 L1078.69 516.33 L1075.43 516.33 L1072.17 516.33 L1068.9 516.33 L1065.64 516.33 L1062.37 516.33 L1059.11 516.33 L1055.85 516.33 L1052.58 516.33 L1049.32 516.33 L1046.06 516.33 L1042.79 516.33 L1039.53 516.33 L1036.26 516.33 L1033 516.33 L1029.74 516.33 L1026.47 516.33 L1023.21 516.33 L1019.95 516.33 L1016.68 516.33 L1013.42 516.33 L1010.15 516.33 L1006.89 516.33 L1003.63 516.33 L1000.36 516.33 L997.1 516.33 L993.84 516.33 L990.57 516.33 L987.31 516.33 L984.04 516.33 L980.78 516.33 L977.52 516.33 L974.25 516.33 L970.99 516.33 L967.73 516.33 L964.46 516.33 L961.2 516.33 L957.93 516.33 L954.67 516.33 L951.41 516.33 L948.14 516.33 L944.88 516.33 L941.62 516.33 L938.35 516.33 L935.09 516.33 L931.82 516.33 L928.56 516.33 L925.3 516.33 L922.03 516.33 L918.77 516.33 L915.51 516.33 L912.24 516.33 L908.98 516.33 L905.71 516.33 L902.45 516.33 L899.19 516.33 L895.92 516.33 L892.66 516.33 L889.39 516.33 L886.13 516.33 L882.87 516.33 L879.6 516.33 L876.34 516.33 L873.08 516.33 L869.81 516.33 L866.55 516.33 L863.28 516.33 L860.02 516.33 L856.76 516.33 L853.49 516.33 L850.23 516.33 L846.97 516.33 L843.7 516.33 L840.44 516.33 L837.17 516.33 L833.91 516.33 L830.65 516.33 L827.38 516.33 L824.12 516.33 L820.86 516.33 L817.59 516.33 L814.33 516.33 L811.06 516.33 L807.8 516.33 L804.54 516.33 L801.27 516.33 L798.01 516.33 L794.75 516.33 L791.48 516.33 L788.22 516.33 L784.95 516.33 L781.69 516.33 L778.43 516.33 L775.16 516.33 L771.9 516.33 L768.64 516.33 L765.37 516.33 L762.11 516.33 L758.84 516.33 L755.58 516.33 L752.32 516.33 L749.05 516.33 L745.79 516.33 L742.53 516.33 L739.26 516.33 L736 516.33 L732.73 516.33 L729.47 516.33 L726.21 516.33 L722.94 516.33 L719.68 516.33 L716.42 516.33 L713.15 516.33 L709.89 516.33 L706.62 516.33 L703.36 516.33 L700.1 516.33 L696.83 516.33 L693.57 516.33 L690.31 516.33 L687.04 516.33 L683.78 516.33 L680.51 516.33 L677.25 516.33 L673.99 516.33 L670.72 516.33 L667.46 516.33 L664.2 516.33 L660.93 516.33 L657.67 516.33 L654.4 516.33 L651.14 516.33 L647.88 516.33 L644.61 516.33 L641.35 516.33 L638.08 516.33 L634.82 516.33 L631.56 516.33 L628.29 516.33 L625.03 516.33 L621.77 516.33 L618.5 516.33 L615.24 516.33 L611.97 516.33 L608.71 516.33"/>
<path d="M1317.86 467.37 L1313.24 467.37 L1308.63 467.37 L1304.01 467.37 L1299.4 467.37 L1294.78 467.37 L1290.17 467.37 L1285.55 467.37 L1280.93 467.37 L1276.32 467.37 L1271.7 467.37 L1267.09 467.37 L1262.47 467.37 L1257.86 467.37 L1253.24 467.37 L1248.62 467.37 L1244.01 467.37 L1239.39 467.37 L1234.78 467.37 L1230.16 467.37 L1225.55 467.37 L1220.93 467.37 L1216.31 467.37 L1211.7 467.37 L1207.08 467.37 L1202.47 467.37 L1197.85 467.37 L1193.24 467.37 L1188.62 467.37 L1184.01 467.37 L1179.39 467.37 L1174.77 467.37 L1170.16 467.37 L1165.54 467.37 L1160.93 467.37 L1156.31 467.37 L1151.7 467.37 L1147.08 467.37 L1142.46 467.37 L1137.85 467.37 L1133.23 467.37 L1128.62 467.37 L1124 467.37 L1119.39 467.37 L1114.77 467.37 L1110.15 467.37 L1105.54 467.37 L1100.92 467.37 L1096.31 467.37 L1091.69 467.37 L1087.08 467.37 L1082.46 467.37 L1077.85 467.37 L1073.23 467.37 L1068.61 467.37 L1064 467.37 L1059.38 467.37 L1054.77 467.37 L1050.15 467.37 L1045.54 467.37 L1040.92 467.37 L1036.3 467.37 L1031.69 467.37 L1027.07 467.37 L1022.46 467.37 L1017.84 467.37 L1013.23 467.37 L1008.61 467.37 L1003.99 467.37 L999.38 467.37 L994.76 467.37 L990.15 467.37 L985.53 467.37 L980.92 467.37 L976.3 467.37 L971.68 467.37 L967.07 467.37 L962.45 467.37 L957.84 467.37 L953.22 467.37 L948.61 467.37 L943.99 467.37 L939.38 467.37 L934.76 467.37 L930.14 467.37 L925.53 467.37 L920.91 467.37 L916.3 467.37 L911.68 467.37 L907.07 467.37 L902.45 467.37 L897.83 467.37 L893.22 467.37 L888.6 467.37 L883.99 467.37 L879.37 467.37 L874.76 467.37 L870.14 467.37 L865.52 467.37 L860.91 467.37 L856.29 467.37 L851.68 467.37 L847.06 467.37 L842.45 467.37 L837.83 467.37 L833.22 467.37 L828.6 467.37 L823.98 467.37 L819.37 467.37 L814.75 467.37 L810.14 467.37 L805.52 467.37 L800.91 467.37 L796.29 467.37 L791.67 467.37 L787.06 467.37 L782.44 467.37 L777.83 467.37 L773.21 467.37 L768.6 467.37 L763.98 467.37 L759.36 467.37 L754.75 467.37 L750.13 467.37 L745.52 467.37 L740.9 467.37 L736.29 467.37 L731.67 467.37 L727.05 467.37 L722.44 467.37 L717.82 467.37 L713.21 467.37 L708.59 467.37 L703.98 467.37 L699.36 467.37 L694.75 467.37 L690.13 467.37 L685.51 467.37 L680.9 467.37 L676.28 467.37 L671.67 467.37 L667.05 467.37 L662.44 467.37 L657.82 467.37 L653.2 467.37 L648.59 467.37 L643.97 467.37 L639.36 467.37 L634.74 467.37 L630.13 467.37 L625.51 467.37 L620.89 467.37 L616.28 467.37 L611.66 467.37 L607.05 467.37 L602.43 467.37 L597.82 467.37 L593.2 467.37 L588.59 467.37 L583.97 467.37 L579.35 467.37 L574.74 467.37 L570.12 467.37 L565.51 467.37 L560.89 467.37 L556.28 467.37 L551.66 467.37 L547.04 467.37 L542.43 467.37 L537.81 467.37 L533.2 467.37 L528.58 467.37 L523.97 467.37 L519.35 467.37 L514.73 467.37 L510.12 467.37 L505.5 467.37 L500.89 467.37 L496.27 467.37 L491.66 467.37 L487.04 467.37"/>
<path d="M1411.22 418.41 L1405.57 418.41 L1399.91 418.41 L1394.26 418.41 L1388.61 418.41 L1382.96 418.41 L1377.3 418.41 L1371.65 418.41 L1366 418.41 L1360.34 418.41 L1354.69 418.41 L1349.04 418.41 L1343.38 418.41 L1337.73 418.41 L1332.08 418.41 L1326.43 418.41 L1320.77 418.41 L1315.12 418.41 L1309.47 418.41 L1303.81 418.41 L1298.16 418.41 L1292.51 418.41 L1286.85 418.41 L1281.2 418.41 L1275.55 418.41 L1269.9 418.41 L1264.24 418.41 L1258.59 418.41 L1252.94 418.41 L1247.28 418.41 L1241.63 418.41 L1235.98 418.41 L1230.32 418.41 L1224.67 418.41 L1219.02 418.41 L1213.37 418.41 L1207.71 418.41 L1202.06 418.41 L1196.41 418.41 L1190.75 418.41 L1185.1 418.41 L1179.45 418.41 L1173.79 418.41 L1168.14 418.41 L1162.49 418.41 L1156.84 418.41 L1151.18 418.41 L1145.53 418.41 L1139.88 418.41 L1134.22 418.41 L1128.57 418.41 L1122.92 418.41 L1117.26 418.41 L1111.61 418.41 L1105.96 418.41 L1100.31 418.41 L1094.65 418.41 L1089 418.41 L1083.35 418.41 L1077.69 418.41 L1072.04 418.41 L1066.39 418.41 L1060.73 418.41 L1055.08 418.41 L1049.43 418.41 L1043.78 418.41 L1038.12 418.41 L1032.47 418.41 L1026.82 418.41 L1021.16 418.41 L1015.51 418.41 L1009.86 418.41 L1004.2 418.41 L998.55 418.41 L992.9 418.41 L987.25 418.41 L981.59 418.41 L975.94 418.41 L970.29 418.41 L964.63 418.41 L958.98 418.41 L953.33 418.41 L947.67 418.41 L942.02 418.41 L936.37 418.41 L930.72 418.41 L925.06 418.41 L919.41 418.41 L913.76 418.41 L908.1 418.41 L902.45 418.41 L896.8 418.41 L891.14 418.41 L885.49 418.41 L879.84 418.41 L874.18 418.41 L868.53 418.41 L862.88 418.41 L857.23 418.41 L851.57 418.41 L845.92 418.41 L840.27 418.41 L834.61 418.41 L828.96 418.41 L823.31 418.41 L817.65 418.41 L812 418.41 L806.35 418.41 L800.7 418.41 L795.04 418.41 L789.39 418.41 L783.74 418.41 L778.08 418.41 L772.43 418.41 L766.78 418.41 L761.12 418.41 L755.47 418.41 L749.82 418.41 L744.17 418.41 L738.51 418.41 L732.86 418.41 L727.21 418.41 L721.55 418.41 L715.9 418.41 L710.25 418.41 L704.59 418.41 L698.94 418.41 L693.29 418.41 L687.64 418.41 L681.98 418.41 L676.33 418.41 L670.68 418.41 L665.02 418.41 L659.37 418.41 L653.72 418.41 L648.06 418.41 L642.41 418.41 L636.76 418.41 L631.11 418.41 L625.45 418.41 L619.8 418.41 L614.15 418.41 L608.49 418.41 L602.84 418.41 L597.19 418.41 L591.53 418.41 L585.88 418.41 L580.23 418.41 L574.58 418.41 L568.92 418.41 L563.27 418.41 L557.62 418.41 L551.96 418.41 L546.31 418.41 L540.66 418.41 L535 418.41 L529.35 418.41 L523.7 418.41 L518.05 418.41 L512.39 418.41 L506.74 418.41 L501.09 418.41 L495.43 418.41 L489.78 418.41 L484.13 418.41 L478.47 418.41 L472.82 418.41 L467.17 418.41 L461.52 418.41 L455.86 418.41 L450.21 418.41 L444.56 418.41 L438.9 418.41 L433.25 418.41 L427.6 418.41 L421.94 418.41 L416.29 418.41 L410.64 418.41 L404.99 418.41 L399.33 418.41 L393.68 418.41"/>
<path d="M1469.91 369.46 L1463.6 369.46 L1457.3 369.46 L1450.99 369.46 L1444.69 369.46 L1438.38 369.46 L1432.08 369.46 L1425.77 369.46 L1419.47 369.46 L1413.16 369.46 L1406.86 369.46 L1400.55 369.46 L1394.25 369.46 L1387.94 369.46 L1381.64 369.46 L1375.33 369.46 L1369.03 369.46 L1362.72 369.46 L1356.42 369.46 L1350.11 369.46 L1343.81 369.46 L1337.5 369.46 L1331.2 369.46 L1324.89 369.46 L1318.59 369.46 L1312.28 369.46 L1305.98 369.46 L1299.67 369.46 L1293.37 369.46 L1287.06 369.46 L1280.76 369.46 L1274.45 369.46 L1268.15 369.46 L1261.84 369.46 L1255.54 369.46 L1249.23 369.46 L1242.93 369.46 L1236.62 369.46 L1230.32 369.46 L1224.01 369.46 L1217.71 369.46 L1211.4 369.46 L1205.1 369.46 L1198.79 369.46 L1192.49 369.46 L1186.18 369.46 L1179.87 369.46 L1173.57 369.46 L1167.26 369.46 L1160.96 369.46 L1154.65 369.46 L1148.35 369.46 L1142.04 369.46 L1135.74 369.46 L1129.43 369.46 L1123.13 369.46 L1116.82 369.46 L1110.52 369.46 L1104.21 369.46 L1097.91 369.46 L1091.6 369.46 L1085.3 369.46 L1078.99 369.46 L1072.69 369.46 L1066.38 369.46 L1060.08 369.46 L1053.77 369.46 L1047.47 369.46 L1041.16 369.46 L1034.86 369.46 L1028.55 369.46 L1022.25 369.46 L1015.94 369.46 L1009.64 369.46 L1003.33 369.46 L997.03 369.46 L990.72 369.46 L984.42 369.46 L978.11 369.46 L971.81 369.46 L965.5 369.46 L959.2 369.46 L952.89 369.46 L946.59 369.46 L940.28 369.46 L933.98 369.46 L927.67 369.46 L921.37 369.46 L915.06 369.46 L908.76 369.46 L902.45 369.46 L896.14 369.46 L889.84 369.46 L883.53 369.46 L877.23 369.46 L870.92 369.46 L864.62 369.46 L858.31 369.46 L852.01 369.46 L845.7 369.46 L839.4 369.46 L833.09 369.46 L826.79 369.46 L820.48 369.46 L814.18 369.46 L807.87 369.46 L801.57 369.46 L795.26 369.46 L788.96 369.46 L782.65 369.46 L776.35 369.46 L770.04 369.46 L763.74 369.46 L757.43 369.46 L751.13 369.46 L744.82 369.46 L738.52 369.46 L732.21 369.46 L725.91 369.46 L719.6 369.46 L713.3 369.46 L706.99 369.46 L700.69 369.46 L694.38 369.46 L688.08 369.46 L681.77 369.46 L675.47 369.46 L669.16 369.46 L662.86 369.46 L656.55 369.46 L650.25 369.46 L643.94 369.46 L637.64 369.46 L631.33 369.46 L625.03 369.46 L618.72 369.46 L612.41 369.46 L606.11 369.46 L599.8 369.46 L593.5 369.46 L587.19 369.46 L580.89 369.46 L574.58 369.46 L568.28 369.46 L561.97 369.46 L555.67 369.46 L549.36 369.46 L543.06 369.46 L536.75 369.46 L530.45 369.46 L524.14 369.46 L517.84 369.46 L511.53 369.46 L505.23 369.46 L498.92 369.46 L492.62 369.46 L486.31 369.46 L480.01 369.46 L473.7 369.46 L467.4 369.46 L461.09 369.46 L454.79 369.46 L448.48 369.46 L442.18 369.46 L435.87 369.46 L429.57 369.46 L423.26 369.46 L416.96 369.46 L410.65 369.46 L404.35 369.46 L398.04 369.46 L391.74 369.46 L385.43 369.46 L379.13 369.46 L372.82 369.46 L366.52 369.46 L360.21 369.46 L353.91 369.46 L347.6 369.46 L341.3 369.46 L334.99 369.46"/>
<path d="M1489.93 320.5 L1483.4 320.5 L1476.87 320.5 L1470.35 320.5 L1463.82 320.5 L1457.29 320.5 L1450.76 320.5 L1444.24 320.5 L1437.71 320.5 L1431.18 320.5 L1424.65 320.5 L1418.12 320.5 L1411.6 320.5 L1405.07 320.5 L1398.54 320.5 L1392.01 320.5 L1385.49 320.5 L1378.96 320.5 L1372.43 320.5 L1365.9 320.5 L1359.38 320.5 L1352.85 320.5 L1346.32 320.5 L1339.79 320.5 L1333.27 320.5 L1326.74 320.5 L1320.21 320.5 L1313.68 320.5 L1307.16 320.5 L1300.63 320.5 L1294.1 320.5 L1287.57 320.5 L1281.05 320.5 L1274.52 320.5 L1267.99 320.5 L1261.46 320.5 L1254.94 320.5 L1248.41 320.5 L1241.88 320.5 L1235.35 320.5 L1228.83 320.5 L1222.3 320.5 L1215.77 320.5 L1209.24 320.5 L1202.72 320.5 L1196.19 320.5 L1189.66 320.5 L1183.13 320.5 L1176.61 320.5 L1170.08 320.5 L1163.55 320.5 L1157.02 320.5 L1150.5 320.5 L1143.97 320.5 L1137.44 320.5 L1130.91 320.5 L1124.39 320.5 L1117.86 320.5 L1111.33 320.5 L1104.8 320.5 L1098.28 320.5 L1091.75 320.5 L1085.22 320.5 L1078.69 320.5 L1072.17 320.5 L1065.64 320.5 L1059.11 320.5 L1052.58 320.5 L1046.06 320.5 L1039.53 320.5 L1033 320.5 L1026.47 320.5 L1019.95 320.5 L1013.42 320.5 L1006.89 320.5 L1000.36 320.5 L993.84 320.5 L987.31 320.5 L980.78 320.5 L974.25 320.5 L967.73 320.5 L961.2 320.5 L954.67 320.5 L948.14 320.5 L941.62 320.5 L935.09 320.5 L928.56 320.5 L922.03 320.5 L915.51 320.5 L908.98 320.5 L902.45 320.5 L895.92 320.5 L889.39 320.5 L882.87 320.5 L876.34 320.5 L869.81 320.5 L863.28 320.5 L856.76 320.5 L850.23 320.5 L843.7 320.5 L837.17 320.5 L830.65 320.5 L824.12 320.5 L817.59 320.5 L811.06 320.5 L804.54 320.5 L798.01 320.5 L791.48 320.5 L784.95 320.5 L778.43 320.5 L771.9 320.5 L765.37 320.5 L758.84 320.5 L752.32 320.5 L745.79 320.5 L739.26 320.5 L732.73 320.5 L726.21 320.5 L719.68 320.5 L713.15 320.5 L706.62 320.5 L700.1 320.5 L693.57 320.5 L687.04 320.5 L680.51 320.5 L673.99 320.5 L667.46 320.5 L660.93 320.5 L654.4 320.5 L647.88 320.5 L641.35 320.5 L634.82 320.5 L628.29 320.5 L621.77 320.5 L615.24 320.5 L608.71 320.5 L602.18 320.5 L595.66 320.5 L589.13 320.5 L582.6 320.5 L576.07 320.5 L569.55 320.5 L563.02 320.5 L556.49 320.5 L549.96 320.5 L543.44 320.5 L536.91 320.5 L530.38 320.5 L523.85 320.5 L517.33 320.5 L510.8 320.5 L504.27 320.5 L497.74 320.5 L491.22 320.5 L484.69 320.5 L478.16 320.5 L471.63 320.5 L465.11 320.5 L458.58 320.5 L452.05 320.5 L445.52 320.5 L439 320.5 L432.47 320.5 L425.94 320.5 L419.41 320.5 L412.89 320.5 L406.36 320.5 L399.83 320.5 L393.3 320.5 L386.78 320.5 L380.25 320.5 L373.72 320.5 L367.19 320.5 L360.66 320.5 L354.14 320.5 L347.61 320.5 L341.08 320.5 L334.55 320.5 L328.03 320.5 L321.5 320.5 L314.97 320.5"/>
<path d="M1469.91 271.54 L1463.6 271.54 L1457.3 271.54 L1450.99 271.54 L1444.69 271.54 L1438.38 271.54 L1432.08 271.54 L1425.77 271.54 L1419.47 271.54 L1413.16 271.54 L1406.86 271.54 L1400.55 271.54 L1394.25 271.54 L1387.94 271.54 L1381.64 271.54 L1375.33 271.54 L1369.03 271.54 L1362.72 271.54 L1356.42 271.54 L1350.11 271.54 L1343.81 271.54 L1337.5 271.54 L1331.2 271.54 L1324.89 271.54 L1318.59 271.54 L1312.28 271.54 L1305.98 271.54 L1299.67 271.54 L1293.37 271.54 L1287.06 271.54 L1280.76 271.54 L1274.45 271.54 L1268.15 271.54 L1261.84 271.54 L1255.54 271.54 L1249.23 271.54 L1242.93 271.54 L1236.62 271.54 L1230.32 271.54 L1224.01 271.54 L1217.71 271.54 L1211.4 271.54 L1205.1 271.54 L1198.79 271.54 L1192.49 271.54 L1186.18 271.54 L1179.87 271.54 L1173.57 271.54 L1167.26 271.54 L1160.96 271.54 L1154.65 271.54 L1148.35 271.54 L1142.04 271.54 L1135.74 271.54 L1129.43 271.54 L1123.13 271.54 L1116.82 271.54 L1110.52 271.54 L1104.21 271.54 L1097.91 271.54 L1091.6 271.54 L1085.3 271.54 L1078.99 271.54 L1072.69 271.54 L1066.38 271.54 L1060.08 271.54 L1053.77 271.54 L1047.47 271.54 L1041.16 271.54 L1034.86 271.54 L1028.55 271.54 L1022.25 271.54 L1015.94 271.54 L1009.64 271.54 L1003.33 271.54 L997.03 271.54 L990.72 271.54 L984.42 271.54 L978.11 271.54 L971.81 271.54 L965.5 271.54 L959.2 271.54 L952.89 271.54 L946.59 271.54 L940.28 271.54 L933.98 271.54 L927.67 271.54 L921.37 271.54 L915.06 271.54 L908.76 271.54 L902.45 271.54 L896.14 271.54 L889.84 271.54 L883.53 271.54 L877.23 271.54 L870.92 271.54 L864.62 271.54 L858.31 271.54 L852.01 271.54 L845.7 271.54 L839.4 271.54 L833.09 271.54 L826.79 271.54 L820.48 271.54 L814.18 271.54 L807.87 271.54 L801.57 271.54 L795.26 271.54 L788.96 271.54 L782.65 271.54 L776.35 271.54 L770.04 271.54 L763.74 271.54 L757.43 271.54 L751.13 271.54 L744.82 271.54 L738.52 271.54 L732.21 271.54 L725.91 271.54 L719.6 271.54 L713.3 271.54 L706.99 271.54 L700.69 271.54 L694.38 271.54 L688.08 271.54 L681.77 271.54 L675.47 271.54 L669.16 271.54 L662.86 271.54 L656.55 271.54 L650.25 271.54 L643.94 271.54 L637.64 271.54 L631.33 271.54 L625.03 271.54 L618.72 271.54 L612.41 271.54 L606.11 271.54 L599.8 271.54 L593.5 271.54 L587.19 271.54 L580.89 271.54 L574.58 271.54 L568.28 271.54 L561.97 271.54 L555.67 271.54 L549.36 271.54 L543.06 271.54 L536.75 271.54 L530.45 271.54 L524.14 271.54 L517.84 271.54 L511.53 271.54 L505.23 271.54 L498.92 271.54 L492.62 271.54 L486.31 271.54 L480.01 271.54 L473.7 271.54 L467.4 271.54 L461.09 271.54 L454.79 271.54 L448.48 271.54 L442.18 271.54 L435.87 271.54 L429.57 271.54 L423.26 271.54 L416.96 271.54 L410.65 271.54 L404.35 271.54 L398.04 271.54 L391.74 271.54 L385.43 271.54 L379.13 271.54 L372.82 271.54 L366.52 271.54 L360.21 271.54 L353.91 271.54 L347.6 271.54 L341.3 271.54 L334.99 271.54"/>
<path d="M1411.22 222.59 L1405.57 222.59 L1399.91 222.59 L1394.26 222.59 L1388.61 222.59 L1382.96 222.59 L1377.3 222.59 L1371.65 222.59 L1366 222.59 L1360.34 222.59 L1354.69 222.59 L1349.04 222.59 L1343.38 222.59 L1337.73 222.59 L1332.08 222.59 L1326.43 222.59 L1320.77 222.59 L1315.12 222.59 L1309.47 222.59 L1303.81 222.59 L1298.16 222.59 L1292.51 222.59 L1286.85 222.59 L1281.2 222.59 L1275.55 222.59 L1269.9 222.59 L1264.24 222.59 L1258.59 222.59 L1252.94 222.59 L1247.28 222.59 L1241.63 222.59 L1235.98 222.59 L1230.32 222.59 L1224.67 222.59 L1219.02 222.59 L1213.37 222.59 L1207.71 222.59 L1202.06 222.59 L1196.41 222.59 L1190.75 222.59 L1185.1 222.59 L1179.45 222.59 L1173.79 222.59 L1168.14 222.59 L1162.49 222.59 L1156.84 222.59 L1151.18 222.59 L1145.53 222.59 L1139.88 222.59 L1134.22 222.59 L1128.57 222.59 L1122.92 222.59 L1117.26 222.59 L1111.61 222.59 L1105.96 222.59 L1100.31 222.59 L1094.65 222.59 L1089 222.59 L1083.35 222.59 L1077.69 222.59 L1072.04 222.59 L1066.39 222.59 L1060.73 222.59 L1055.08 222.59 L1049.43 222.59 L1043.78 222.59 L1038.12 222.59 L1032.47 222.59 L1026.82 222.59 L1021.16 222.59 L1015.51 222.59 L1009.86 222.59 L1004.2 222.59 L998.55 222.59 L992.9 222.59 L987.25 222.59 L981.59 222.59 L975.94 222.59 L970.29 222.59 L964.63 222.59 L958.98 222.59 L953.33 222.59 L947.67 222.59 L942.02 222.59 L936.37 222.59 L930.72 222.59 L925.06 222.59 L919.41 222.59 L913.76 222.59 L908.1 222.59 L902.45 222.59 L896.8 222.59 L891.14 222.59 L885.49 222.59 L879.84 222.59 L874.18 222.59 L868.53 222.59 L862.88 222.59 L857.23 222.59 L851.57 222.59 L845.92 222.59 L840.27 222.59 L834.61 222.59 L828.96 222.59 L823.31 222.59 L817.65 222.59 L812 222.59 L806.35 222.59 L800.7 222.59 L795.04 222.59 L789.39 222.59 L783.74 222.59 L778.08 222.59 L772.43 222.59 L766.78 222.59 L761.12 222.59 L755.47 222.59 L749.82 222.59 L744.17 222.59 L738.51 222.59 L732.86 222.59 L727.21 222.59 L721.55 222.59 L715.9 222.59 L710.25 222.59 L704.59 222.59 L698.94 222.59 L693.29 222.59 L687.64 222.59 L681.98 222.59 L676.33 222.59 L670.68 222.59 L665.02 222.59 L659.37 222.59 L653.72 222.59 L648.06 222.59 L642.41 222.59 L636.76 222.59 L631.11 222.59 L625.45 222.59 L619.8 222.59 L614.15 222.59 L608.49 222.59 L602.84 222.59 L597.19 222.59 L591.53 222.59 L585.88 222.59 L580.23 222.59 L574.58 222.59 L568.92 222.59 L563.27 222.59 L557.62 222.59 L551.96 222.59 L546.31 222.59 L540.66 222.59 L535 222.59 L529.35 222.59 L523.7 222.59 L518.05 222.59 L512.39 222.59 L506.74 222.59 L501.09 222.59 L495.43 222.59 L489.78 222.59 L484.13 222.59 L478.47 222.59 L472.82 222.59 L467.17 222.59 L461.52 222.59 L455.86 222.59 L450.21 222.59 L444.56 222.59 L438.9 222.59 L433.25 222.59 L427.6 222.59 L421.94 222.59 L416.29 222.59 L410.64 222.59 L404.99 222.59 L399.33 222.59 L393.68 222.59"/>
<path d="M1317.86 173.63 L1313.24 173.63 L1308.63 173.63 L1304.01 173.63 L1299.4 173.63 L1294.78 173.63 L1290.17 173.63 L1285.55 173.63 L1280.93 173.63 L1276.32 173.63 L1271.7 173.63 L1267.09 173.63 L1262.47 173.63 L1257.86 173.63 L1253.24 173.63 L1248.62 173.63 L1244.01 173.63 L1239.39 173.63 L1234.78 173.63 L1230.16 173.63 L1225.55 173.63 L1220.93 173.63 L1216.31 173.63 L1211.7 173.63 L1207.08 173.63 L1202.47 173.63 L1197.85 173.63 L1193.24 173.63 L1188.62 173.63 L1184.01 173.63 L1179.39 173.63 L1174.77 173.63 L1170.16 173.63 L1165.54 173.63 L1160.93 173.63 L1156.31 173.63 L1151.7 173.63 L1147.08 173.63 L1142.46 173.63 L1137.85 173.63 L1133.23 173.63 L1128.62 173.63 L1124 173.63 L1119.39 173.63 L1114.77 173.63 L1110.15 173.63 L1105.54 173.63 L1100.92 173.63 L1096.31 173.63 L1091.69 173.63 L1087.08 173.63 L1082.46 173.63 L1077.85 173.63 L1073.23 173.63 L1068.61 173.63 L1064 173.63 L1059.38 173.63 L1054.77 173.63 L1050.15 173.63 L1045.54 173.63 L1040.92 173.63 L1036.3 173.63 L1031.69 173.63 L1027.07 173.63 L1022.46 173.63 L1017.84 173.63 L1013.23 173.63 L1008.61 173.63 L1003.99 173.63 L999.38 173.63 L994.76 173.63 L990.15 173.63 L985.53 173.63 L980.92 173.63 L976.3 173.63 L971.68 173.63 L967.07 173.63 L962.45 173.63 L957.84 173.63 L953.22 173.63 L948.61 173.63 L943.99 173.63 L939.38 173.63 L934.76 173.63 L930.14 173.63 L925.53 173.63 L920.91 173.63 L916.3 173.63 L911.68 173.63 L907.07 173.63 L902.45 173.63 L897.83 173.63 L893.22 173.63 L888.6 173.63 L883.99 173.63 L879.37 173.63 L874.76 173.63 L870.14 173.63 L865.52 173.63 L860.91 173.63 L856.29 173.63 L851.68 173.63 L847.06 173.63 L842.45 173.63 L837.83 173.63 L833.22 173.63 L828.6 173.63 L823.98 173.63 L819.37 173.63 L814.75 173.63 L810.14 173.63 L805.52 173.63 L800.91 173.63 L796.29 173.63 L791.67 173.63 L787.06 173.63 L782.44 173.63 L777.83 173.63 L773.21 173.63 L768.6 173.63 L763.98 173.63 L759.36 173.63 L754.75 173.63 L750.13 173.63 L745.52 173.63 L740.9 173.63 L736.29 173.63 L731.67 173.63 L727.05 173.63 L722.44 173.63 L717.82 173.63 L713.21 173.63 L708.59 173.63 L703.98 173.63 L699.36 173.63 L694.75 173.63 L690.13 173.63 L685.51 173.63 L680.9 173.63 L676.28 173.63 L671.67 173.63 L667.05 173.63 L662.44 173.63 L657.82 173.63 L653.2 173.63 L648.59 173.63 L643.97 173.63 L639.36 173.63 L634.74 173.63 L630.13 173.63 L625.51 173.63 L620.89 173.63 L616.28 173.63 L611.66 173.63 L607.05 173.63 L602.43 173.63 L597.82 173.63 L593.2 173.63 L588.59 173.63 L583.97 173.63 L579.35 173.63 L574.74 173.63 L570.12 173.63 L565.51 173.63 L560.89 173.63 L556.28 173.63 L551.66 173.63 L547.04 173.63 L542.43 173.63 L537.81 173.63 L533.2 173.63 L528.58 173.63 L523.97 173.63 L519.35 173.63 L514.73 173.63 L510.12 173.63 L505.5 173.63 L500.89 173.63 L496.27 173.63 L491.66 173.63 L487.04 173.63"/>
<path d="M1196.19 124.67 L1192.93 124.67 L1189.66 124.67 L1186.4 124.67 L1183.13 124.67 L1179.87 124.67 L1176.61 124.67 L1173.34 124.67 L1170.08 124.67 L1166.82 124.67 L1163.55 124.67 L1160.29 124.67 L1157.02 124.67 L1153.76 124.67 L1150.5 124.67 L1147.23 124.67 L1143.97 124.67 L1140.7 124.67 L1137.44 124.67 L1134.18 124.67 L1130.91 124.67 L1127.65 124.67 L1124.39 124.67 L1121.12 124.67 L1117.86 124.67 L1114.59 124.67 L1111.33 124.67 L1108.07 124.67 L1104.8 124.67 L1101.54 124.67 L1098.28 124.67 L1095.01 124.67 L1091.75 124.67 L1088.48 124.67 L1085.22 124.67 L1081.96 124.67 L1078.69 124.67 L1075.43 124.67 L1072.17 124.67 L1068.9 124.67 L1065.64 124.67 L1062.37 124.67 L1059.11 124.67 L1055.85 124.67 L1052.58 124.67 L1049.32 124.67 L1046.06 124.67 L1042.79 124.67 L1039.53 124.67 L1036.26 124.67 L1033 124.67 L1029.74 124.67 L1026.47 124.67 L1023.21 124.67 L1019.95 124.67 L1016.68 124.67 L1013.42 124.67 L1010.15 124.67 L1006.89 124.67 L1003.63 124.67 L1000.36 124.67 L997.1 124.67 L993.84 124.67 L990.57 124.67 L987.31 124.67 L984.04 124.67 L980.78 124.67 L977.52 124.67 L974.25 124.67 L970.99 124.67 L967.73 124.67 L964.46 124.67 L961.2 124.67 L957.93 124.67 L954.67 124.67 L951.41 124.67 L948.14 124.67 L944.88 124.67 L941.62 124.67 L938.35 124.67 L935.09 124.67 L931.82 124.67 L928.56 124.67 L925.3 124.67 L922.03 124.67 L918.77 124.67 L915.51 124.67 L912.24 124.67 L908.98 124.67 L905.71 124.67 L902.45 124.67 L899.19 124.67 L895.92 124.67 L892.66 124.67 L889.39 124.67 L886.13 124.67 L882.87 124.67 L879.6 124.67 L876.34 124.67 L873.08 124.67 L869.81 124.67 L866.55 124.67 L863.28 124.67 L860.02 124.67 L856.76 124.67 L853.49 124.67 L850.23 124.67 L846.97 124.67 L843.7 124.67 L840.44 124.67 L837.17 124.67 L833.91 124.67 L830.65 124.67 L827.38 124.67 L824.12 124.67 L820.86 124.67 L817.59 124.67 L814.33 124.67 L811.06 124.67 L807.8 124.67 L804.54 124.67 L801.27 124.67 L798.01 124.67 L794.75 124.67 L791.48 124.67 L788.22 124.67 L784.95 124.67 L781.69 124.67 L778.43 124.67 L775.16 124.67 L771.9 124.67 L768.64 124.67 L765.37 124.67 L762.11 124.67 L758.84 124.67 L755.58 124.67 L752.32 124.67 L749.05 124.67 L745.79 124.67 L742.53 124.67 L739.26 124.67 L736 124.67 L732.73 124.67 L729.47 124.67 L726.21 124.67 L722.94 124.67 L719.68 124.67 L716.42 124.67 L713.15 124.67 L709.89 124.67 L706.62 124.67 L703.36 124.67 L700.1 124.67 L696.83 124.67 L693.57 124.67 L690.31 124.67 L687.04 124.67 L683.78 124.67 L680.51 124.67 L677.25 124.67 L673.99 124.67 L670.72 124.67 L667.46 124.67 L664.2 124.67 L660.93 124.67 L657.67 124.67 L654.4 124.67 L651.14 124.67 L647.88 124.67 L644.61 124.67 L641.35 124.67 L638.08 124.67 L634.82 124.67 L631.56 124.67 L628.29 124.67 L625.03 124.67 L621.77 124.67 L618.5 124.67 L615.24 124.67 L611.97 124.67 L608.71 124.67"/>
<path d="M1054.5 75.72 L1052.81 75.72 L1051.12 75.72 L1049.43 75.72 L1047.74 75.72 L1046.05 75.72 L1044.36 75.72 L1042.67 75.72 L1040.98 75.72 L1039.3 75.72 L1037.61 75.72 L1035.92 75.72 L1034.23 75.72 L1032.54 75.72 L1030.85 75.72 L1029.16 75.72 L1027.47 75.72 L1025.78 75.72 L1024.09 75.72 L1022.4 75.72 L1020.71 75.72 L1019.02 75.72 L1017.33 75.72 L1015.64 75.72 L1013.95 75.72 L1012.26 75.72 L1010.57 75.72 L1008.89 75.72 L1007.2 75.72 L1005.51 75.72 L1003.82 75.72 L1002.13 75.72 L1000.44 75.72 L998.75 75.72 L997.06 75.72 L995.37 75.72 L993.68 75.72 L991.99 75.72 L990.3 75.72 L988.61 75.72 L986.92 75.72 L985.23 75.72 L983.54 75.72 L981.85 75.72 L980.16 75.72 L978.48 75.72 L976.79 75.72 L975.1 75.72 L973.41 75.72 L971.72 75.72 L970.03 75.72 L968.34 75.72 L966.65 75.72 L964.96 75.72 L963.27 75.72 L961.58 75.72 L959.89 75.72 L958.2 75.72 L956.51 75.72 L954.82 75.72 L953.13 75.72 L951.44 75.72 L949.75 75.72 L948.07 75.72 L946.38 75.72 L944.69 75.72 L943 75.72 L941.31 75.72 L939.62 75.72 L937.93 75.72 L936.24 75.72 L934.55 75.72 L932.86 75.72 L931.17 75.72 L929.48 75.72 L927.79 75.72 L926.1 75.72 L924.41 75.72 L922.72 75.72 L921.03 75.72 L919.34 75.72 L917.66 75.72 L915.97 75.72 L914.28 75.72 L912.59 75.72 L910.9 75.72 L909.21 75.72 L907.52 75.72 L905.83 75.72 L904.14 75.72 L902.45 75.72 L900.76 75.72 L899.07 75.72 L897.38 75.72 L895.69 75.72 L894 75.72 L892.31 75.72 L890.62 75.72 L888.93 75.72 L887.24 75.72 L885.56 75.72 L883.87 75.72 L882.18 75.72 L880.49 75.72 L878.8 75.72 L877.11 75.72 L875.42 75.72 L873.73 75.72 L872.04 75.72 L870.35 75.72 L868.66 75.72 L866.97 75.72 L865.28 75.72 L863.59 75.72 L861.9 75.72 L860.21 75.72 L858.52 75.72 L856.83 75.72 L855.15 75.72 L853.46 75.72 L851.77 75.72 L850.08 75.72 L848.39 75.72 L846.7 75.72 L845.01 75.72 L843.32 75.72 L841.63 75.72 L839.94 75.72 L838.25 75.72 L836.56 75.72 L834.87 75.72 L833.18 75.72 L831.49 75.72 L829.8 75.72 L828.11 75.72 L826.42 75.72 L824.74 75.72 L823.05 75.72 L821.36 75.72 L819.67 75.72 L817.98 75.72 L816.29 75.72 L814.6 75.72 L812.91 75.72 L811.22 75.72 L809.53 75.72 L807.84 75.72 L806.15 75.72 L804.46 75.72 L802.77 75.72 L801.08 75.72 L799.39 75.72 L797.7 75.72 L796.01 75.72 L794.33 75.72 L792.64 75.72 L790.95 75.72 L789.26 75.72 L787.57 75.72 L785.88 75.72 L784.19 75.72 L782.5 75.72 L780.81 75.72 L779.12 75.72 L777.43 75.72 L775.74 75.72 L774.05 75.72 L772.36 75.72 L770.67 75.72 L768.98 75.72 L767.29 75.72 L765.6 75.72 L763.92 75.72 L762.23 75.72 L760.54 75.72 L758.85 75.72 L757.16 75.72 L755.47 75.72 L753.78 75.72 L752.09 75.72 L750.4 75.72"/>
</g>
<g fill="none" stroke="#474747" stroke-width="1.4" stroke-dasharray="1.4 2.1">
<path d="M823 179 L825.74 182.35 L829.34 186.76 L833.62 192.01 L838.41 197.86 L843.52 204.1 L848.77 210.49 L853.99 216.8 L859 222.8 L864 228.65 L869.25 234.61 L874.64 240.67 L880.09 246.8 L885.5 252.96 L890.77 259.14 L895.8 265.29 L900.5 271.4 L904.82 277.47 L908.83 283.55 L912.62 289.62 L916.26 295.7 L919.83 301.77 L923.43 307.85 L927.12 313.92 L931 320 L935.1 326.19 L939.38 332.55 L943.74 338.98 L948.13 345.38 L952.47 351.63 L956.67 357.66 L960.67 363.35 L964.4 368.6 L967.98 373.56 L971.54 378.4 L975 383.01 L978.29 387.34 L981.31 391.28 L983.99 394.76 L986.25 397.7 L988 400"/>
<path d="M893 189 L894.33 186.36 L896.1 182.82 L898.22 178.61 L900.56 173.94 L903.02 169.02 L905.49 164.09 L907.85 159.34 L910 155 L911.97 150.91 L913.89 146.78 L915.77 142.67 L917.62 138.62 L919.46 134.69 L921.3 130.91 L923.14 127.33 L925 124 L926.9 120.91 L928.83 118.02 L930.78 115.31 L932.72 112.77 L934.63 110.38 L936.5 108.13 L938.29 106.01 L940 104 L941.6 102.14 L943.1 100.46 L944.52 98.92 L945.91 97.52 L947.27 96.22 L948.64 95 L950.04 93.83 L951.5 92.7 L953.02 91.6 L954.57 90.57 L956.14 89.6 L957.72 88.71 L959.31 87.89 L960.89 87.17 L962.45 86.53 L964 86 L965.51 85.58 L966.99 85.28 L968.45 85.08 L969.91 84.96 L971.38 84.9 L972.87 84.91 L974.41 84.94 L976 85 L977.58 85.06 L979.1 85.14 L980.62 85.24 L982.19 85.41 L983.86 85.64 L985.68 85.97 L987.71 86.42 L990 87 L992.35 87.64 L994.63 88.27 L996.99 88.96 L999.56 89.78 L1002.5 90.78 L1005.96 92.03 L1010.08 93.58 L1015 95.5 L1020.77 97.88 L1027.25 100.69 L1034.36 103.84 L1042 107.22 L1050.08 110.73 L1058.5 114.26 L1067.17 117.72 L1076 121 L1085.22 124.11 L1095.03 127.17 L1105.26 130.19 L1115.75 133.22 L1126.33 136.28 L1136.84 139.41 L1147.12 142.64 L1157 146 L1166.51 149.49 L1175.81 153.08 L1184.96 156.75 L1194 160.5 L1202.98 164.31 L1211.94 168.17 L1220.93 172.07 L1230 176 L1239.25 179.93 L1248.67 183.88 L1258.17 187.85 L1267.62 191.88 L1276.94 195.98 L1286.02 200.19 L1294.74 204.52 L1303 209 L1310.76 213.64 L1318.09 218.41 L1325.08 223.31 L1331.81 228.31 L1338.39 233.4 L1344.88 238.55 L1351.39 243.76 L1358 249 L1365 254.61 L1372.43 260.75 L1380 267.14 L1387.44 273.5 L1394.44 279.55 L1400.73 285 L1406.01 289.58 L1410 293"/>
</g>
<g stroke="#9a9a9a" stroke-width="1.4" fill="none">
<path d="M801 160 L823 179"/>
<path d="M889 195.5 L893 189"/>
</g>
<g fill="none" stroke="#22a68f" stroke-width="1.6" stroke-dasharray="1.6 2.3">
<path d="M716 129 Q770 90 819 54"/>
<path d="M980 54 Q1030 95 1075 134"/>
</g>
<path d="M692 148 L716 129" stroke="#22a68f" stroke-width="1.8" fill="none"/>
<circle cx="692" cy="148" r="1.1" fill="#e8603c"/>
<ellipse cx="1060.7" cy="133.1" rx="45.8" ry="12.6" transform="rotate(27.2 1060.7 133.1)" fill="none" stroke="#22a68f" stroke-width="2.1"/>
<text x="1059.3" y="137" font-family="Liberation Sans" font-size="10.4" fill="#ffffff" text-anchor="middle" textLength="21.49" lengthAdjust="spacingAndGlyphs">DRA</text>
<path d="M1073.9 137.6 H1080.9 M1077.4 134.1 V141.1" stroke="#ff0000" stroke-width="1.5"/>
<text x="890.81" y="25.4" font-family="Liberation Sans" font-size="11.1" fill="#8a8a8a" textLength="19.68" lengthAdjust="spacingAndGlyphs">+90</text>
<rect x="912.69" y="17.2" width="2" height="1.9" fill="#8a8a8a"/>
<text x="890.81" y="123.2" font-family="Liberation Sans" font-size="11.1" fill="#8a8a8a" textLength="19.68" lengthAdjust="spacingAndGlyphs">+60</text>
<rect x="912.69" y="115" width="2" height="1.9" fill="#8a8a8a"/>
<text x="890.81" y="221.2" font-family="Liberation Sans" font-size="11.1" fill="#8a8a8a" textLength="19.68" lengthAdjust="spacingAndGlyphs">+30</text>
<rect x="912.69" y="213" width="2" height="1.9" fill="#8a8a8a"/>
<text x="893.78" y="330.3" font-family="Liberation Sans" font-size="11.1" fill="#8a8a8a" textLength="13.74" lengthAdjust="spacingAndGlyphs">+0</text>
<rect x="909.72" y="322.1" width="2" height="1.9" fill="#8a8a8a"/>
<text x="890.81" y="428.3" font-family="Liberation Sans" font-size="11.1" fill="#8a8a8a" textLength="19.68" lengthAdjust="spacingAndGlyphs">−30</text>
<rect x="912.69" y="420.1" width="2" height="1.9" fill="#8a8a8a"/>
<text x="890.81" y="526.3" font-family="Liberation Sans" font-size="11.1" fill="#8a8a8a" textLength="19.68" lengthAdjust="spacingAndGlyphs">−60</text>
<rect x="912.69" y="518.1" width="2" height="1.9" fill="#8a8a8a"/>
<text x="890.81" y="624.3" font-family="Liberation Sans" font-size="11.1" fill="#8a8a8a" textLength="19.68" lengthAdjust="spacingAndGlyphs">−90</text>
<rect x="912.69" y="616.1" width="2" height="1.9" fill="#8a8a8a"/>
<text x="300.37" y="330.3" font-family="Liberation Sans" font-size="11.1" fill="#8a8a8a" textLength="25.61" lengthAdjust="spacingAndGlyphs">+180</text>
<rect x="328.18" y="322.1" width="2" height="1.9" fill="#8a8a8a"/>
<text x="398.28" y="330.3" font-family="Liberation Sans" font-size="11.1" fill="#8a8a8a" textLength="25.61" lengthAdjust="spacingAndGlyphs">+150</text>
<rect x="426.09" y="322.1" width="2" height="1.9" fill="#8a8a8a"/>
<text x="496.19" y="330.3" font-family="Liberation Sans" font-size="11.1" fill="#8a8a8a" textLength="25.61" lengthAdjust="spacingAndGlyphs">+120</text>
<rect x="524" y="322.1" width="2" height="1.9" fill="#8a8a8a"/>
<text x="597.07" y="330.3" font-family="Liberation Sans" font-size="11.1" fill="#8a8a8a" textLength="19.68" lengthAdjust="spacingAndGlyphs">+90</text>
<rect x="618.95" y="322.1" width="2" height="1.9" fill="#8a8a8a"/>
<text x="694.99" y="330.3" font-family="Liberation Sans" font-size="11.1" fill="#8a8a8a" textLength="19.68" lengthAdjust="spacingAndGlyphs">+60</text>
<rect x="716.86" y="322.1" width="2" height="1.9" fill="#8a8a8a"/>
<text x="792.9" y="330.3" font-family="Liberation Sans" font-size="11.1" fill="#8a8a8a" textLength="19.68" lengthAdjust="spacingAndGlyphs">+30</text>
<rect x="814.78" y="322.1" width="2" height="1.9" fill="#8a8a8a"/>
<text x="893.78" y="330.3" font-family="Liberation Sans" font-size="11.1" fill="#8a8a8a" textLength="13.74" lengthAdjust="spacingAndGlyphs">+0</text>
<rect x="909.72" y="322.1" width="2" height="1.9" fill="#8a8a8a"/>
<text x="985.76" y="330.3" font-family="Liberation Sans" font-size="11.1" fill="#8a8a8a" textLength="25.61" lengthAdjust="spacingAndGlyphs">+330</text>
<rect x="1013.57" y="322.1" width="2" height="1.9" fill="#8a8a8a"/>
<text x="1083.67" y="330.3" font-family="Liberation Sans" font-size="11.1" fill="#8a8a8a" textLength="25.61" lengthAdjust="spacingAndGlyphs">+300</text>
<rect x="1111.48" y="322.1" width="2" height="1.9" fill="#8a8a8a"/>
<text x="1181.58" y="330.3" font-family="Liberation Sans" font-size="11.1" fill="#8a8a8a" textLength="25.61" lengthAdjust="spacingAndGlyphs">+270</text>
<rect x="1209.39" y="322.1" width="2" height="1.9" fill="#8a8a8a"/>
<text x="1279.5" y="330.3" font-family="Liberation Sans" font-size="11.1" fill="#8a8a8a" textLength="25.61" lengthAdjust="spacingAndGlyphs">+240</text>
<rect x="1307.31" y="322.1" width="2" height="1.9" fill="#8a8a8a"/>
<text x="1377.41" y="330.3" font-family="Liberation Sans" font-size="11.1" fill="#8a8a8a" textLength="25.61" lengthAdjust="spacingAndGlyphs">+210</text>
<rect x="1405.22" y="322.1" width="2" height="1.9" fill="#8a8a8a"/>
<text x="1475.32" y="330.3" font-family="Liberation Sans" font-size="11.1" fill="#8a8a8a" textLength="25.61" lengthAdjust="spacingAndGlyphs">+180</text>
<rect x="1503.13" y="322.1" width="2" height="1.9" fill="#8a8a8a"/>
<text x="315.8" y="29.8" font-family="Liberation Mono" font-size="13.9" fill="#ffffff" xml:space="preserve" textLength="50.1" lengthAdjust="spacingAndGlyphs">US001J</text>
<text x="315.8" y="42.8" font-family="Liberation Mono" font-size="13.9" fill="#ffffff" xml:space="preserve" textLength="317.3" lengthAdjust="spacingAndGlyphs">Beg: 20251010 05:18:56 (sol = 196.81°)</text>
<text x="315.8" y="55.8" font-family="Liberation Mono" font-size="13.9" fill="#ffffff" xml:space="preserve" textLength="317.3" lengthAdjust="spacingAndGlyphs">End: 20251010 06:33:19 (sol = 196.86°)</text>
<text x="315.8" y="68.8" font-family="Liberation Mono" font-size="13.9" fill="#ffffff" xml:space="preserve" textLength="317.3" lengthAdjust="spacingAndGlyphs">--------------------------------------</text>
<text x="315.8" y="81.8" font-family="Liberation Mono" font-size="13.9" fill="#ffffff" xml:space="preserve" textLength="50.1" lengthAdjust="spacingAndGlyphs">...: 2</text>
<text x="315.8" y="94.8" font-family="Liberation Mono" font-size="13.9" fill="#ffffff" xml:space="preserve" textLength="50.1" lengthAdjust="spacingAndGlyphs">DRA: 1</text>
<g stroke="#5c5c5c" stroke-width="2.083" stroke-dasharray="2.083 3.4375">
<path d="M75 842.5 V641.4"/>
<path d="M219 842.5 V641.4"/>
<path d="M364.7 842.5 V641.4"/>
<path d="M506.3 842.5 V641.4"/>
<path d="M651 842.5 V641.4"/>
<path d="M796.8 842.5 V641.4"/>
<path d="M939.8 842.5 V641.4"/>
<path d="M1090.8 842.5 V641.4"/>
<path d="M1239 842.5 V641.4"/>
<path d="M1394 842.5 V641.4"/>
<path d="M1547.7 842.5 V641.4"/>
<path d="M1687 842.5 V641.4"/>
</g>
<text transform="translate(149.4 696.8) rotate(-90)" x="0" y="0" font-family="Liberation Sans" font-size="30" fill="#555555" stroke="#555555" stroke-width="0.35" textLength="53.61" lengthAdjust="spacingAndGlyphs">APR</text>
<text transform="translate(295 701.09) rotate(-90)" x="0" y="0" font-family="Liberation Sans" font-size="30" fill="#555555" stroke="#555555" stroke-width="0.35" textLength="56.33" lengthAdjust="spacingAndGlyphs">MAY</text>
<text transform="translate(436.4 691.04) rotate(-90)" x="0" y="0" font-family="Liberation Sans" font-size="30" fill="#555555" stroke="#555555" stroke-width="0.35" textLength="49.95" lengthAdjust="spacingAndGlyphs">JUN</text>
<text transform="translate(576.6 685.61) rotate(-90)" x="0" y="0" font-family="Liberation Sans" font-size="30" fill="#555555" stroke="#555555" stroke-width="0.35" textLength="44.01" lengthAdjust="spacingAndGlyphs">JUL</text>
<text transform="translate(723.8 700.39) rotate(-90)" x="0" y="0" font-family="Liberation Sans" font-size="30" fill="#555555" stroke="#555555" stroke-width="0.35" textLength="56.84" lengthAdjust="spacingAndGlyphs">AUG</text>
<text transform="translate(871.6 693.85) rotate(-90)" x="0" y="0" font-family="Liberation Sans" font-size="30" fill="#555555" stroke="#555555" stroke-width="0.35" textLength="49.89" lengthAdjust="spacingAndGlyphs">SEP</text>
<text transform="translate(1016.6 700.63) rotate(-90)" x="0" y="0" font-family="Liberation Sans" font-size="30" fill="#555555" stroke="#555555" stroke-width="0.35" textLength="57.44" lengthAdjust="spacingAndGlyphs">OCT</text>
<text transform="translate(1169.6 703.86) rotate(-90)" x="0" y="0" font-family="Liberation Sans" font-size="30" fill="#555555" stroke="#555555" stroke-width="0.35" textLength="58.46" lengthAdjust="spacingAndGlyphs">NOV</text>
<text transform="translate(1319.4 700.91) rotate(-90)" x="0" y="0" font-family="Liberation Sans" font-size="30" fill="#555555" stroke="#555555" stroke-width="0.35" textLength="55.78" lengthAdjust="spacingAndGlyphs">DEC</text>
<text transform="translate(1469.4 689.03) rotate(-90)" x="0" y="0" font-family="Liberation Sans" font-size="30" fill="#555555" stroke="#555555" stroke-width="0.35" textLength="47.73" lengthAdjust="spacingAndGlyphs">JAN</text>
<text transform="translate(1628.4 696.18) rotate(-90)" x="0" y="0" font-family="Liberation Sans" font-size="30" fill="#555555" stroke="#555555" stroke-width="0.35" textLength="50.48" lengthAdjust="spacingAndGlyphs">FEB</text>
<text transform="translate(1765.8 704.69) rotate(-90)" x="0" y="0" font-family="Liberation Sans" font-size="30" fill="#555555" stroke="#555555" stroke-width="0.35" textLength="60.12" lengthAdjust="spacingAndGlyphs">MAR</text>
<path d="M985.5 842.5 V641.4" stroke="#ff0000" stroke-width="1.6" stroke-dasharray="5.14 2.22"/>
<rect x="106.2" y="832" width="23.8" height="4" fill="#bddf26"/>
<rect x="165" y="832" width="179.9" height="4" fill="#bddf26"/>
<rect x="365.9" y="832" width="259" height="4" fill="#bddf26"/>
<rect x="635.8" y="832" width="151" height="4" fill="#bddf26"/>
<rect x="806.9" y="832" width="93.1" height="4" fill="#bddf26"/>
<rect x="920" y="832" width="53" height="4" fill="#bddf26"/>
<rect x="984" y="832" width="81.9" height="4" fill="#bddf26"/>
<rect x="1082" y="832" width="122" height="4" fill="#bddf26"/>
<rect x="1244.1" y="832" width="81.7" height="4" fill="#bddf26"/>
<rect x="1337" y="832" width="18.7" height="4" fill="#bddf26"/>
<rect x="1380.9" y="832" width="63" height="4" fill="#bddf26"/>
<rect x="1458.8" y="832" width="53.2" height="4" fill="#bddf26"/>
<rect x="1523.2" y="832" width="23.8" height="4" fill="#bddf26"/>
<rect x="1723.9" y="832" width="24" height="4" fill="#bddf26"/>
<rect x="1758.1" y="832" width="24" height="4" fill="#bddf26"/>
<rect x="165" y="815.66" width="24" height="4" fill="#81d34d"/>
<rect x="224" y="815.66" width="63" height="4" fill="#81d34d"/>
<rect x="312" y="815.66" width="28.7" height="4" fill="#81d34d"/>
<rect x="365.9" y="815.66" width="126.9" height="4" fill="#81d34d"/>
<rect x="508" y="815.66" width="145.8" height="4" fill="#81d34d"/>
<rect x="704" y="815.66" width="33.8" height="4" fill="#81d34d"/>
<rect x="772.8" y="815.66" width="73" height="4" fill="#81d34d"/>
<rect x="871" y="815.66" width="116.7" height="4" fill="#81d34d"/>
<rect x="1002.9" y="815.66" width="13.7" height="4" fill="#81d34d"/>
<rect x="1061.7" y="815.66" width="151.1" height="4" fill="#81d34d"/>
<rect x="1244" y="815.66" width="23" height="4" fill="#81d34d"/>
<rect x="1293" y="815.66" width="23" height="4" fill="#81d34d"/>
<rect x="1342" y="815.66" width="23" height="4" fill="#81d34d"/>
<rect x="1386" y="815.66" width="42.7" height="4" fill="#81d34d"/>
<rect x="1458.8" y="815.66" width="24" height="4" fill="#81d34d"/>
<rect x="1548" y="815.66" width="22.7" height="4" fill="#81d34d"/>
<rect x="165" y="799.32" width="24" height="4" fill="#4ec36b"/>
<rect x="257.8" y="799.32" width="229.9" height="4" fill="#4ec36b"/>
<rect x="508" y="799.32" width="106.8" height="4" fill="#4ec36b"/>
<rect x="625.8" y="799.32" width="92.2" height="4" fill="#4ec36b"/>
<rect x="729.2" y="799.32" width="96.3" height="4" fill="#4ec36b"/>
<rect x="949" y="799.32" width="200.9" height="4" fill="#4ec36b"/>
<rect x="1160" y="799.32" width="87.9" height="4" fill="#4ec36b"/>
<rect x="1258" y="799.32" width="185.9" height="4" fill="#4ec36b"/>
<rect x="1458.8" y="799.32" width="24" height="4" fill="#4ec36b"/>
<rect x="1553.3" y="799.32" width="22.7" height="4" fill="#4ec36b"/>
<rect x="194" y="782.98" width="24" height="4" fill="#2ab07f"/>
<rect x="322" y="782.98" width="184.8" height="4" fill="#2ab07f"/>
<rect x="518" y="782.98" width="23.8" height="4" fill="#2ab07f"/>
<rect x="557" y="782.98" width="126.7" height="4" fill="#2ab07f"/>
<rect x="807.3" y="782.98" width="23.4" height="4" fill="#2ab07f"/>
<rect x="953.8" y="782.98" width="19.2" height="4" fill="#2ab07f"/>
<rect x="988.8" y="782.98" width="135.9" height="4" fill="#2ab07f"/>
<rect x="1155" y="782.98" width="63" height="4" fill="#2ab07f"/>
<rect x="1244" y="782.98" width="23" height="4" fill="#2ab07f"/>
<rect x="1317.2" y="782.98" width="23.8" height="4" fill="#2ab07f"/>
<rect x="1396" y="782.98" width="23" height="4" fill="#2ab07f"/>
<rect x="1464" y="782.98" width="185.7" height="4" fill="#2ab07f"/>
<rect x="341" y="766.64" width="28.8" height="4" fill="#1e9b8a"/>
<rect x="410" y="766.64" width="38" height="4" fill="#1e9b8a"/>
<rect x="469" y="766.64" width="23.8" height="4" fill="#1e9b8a"/>
<rect x="528" y="766.64" width="18" height="4" fill="#1e9b8a"/>
<rect x="561.9" y="766.64" width="28.9" height="4" fill="#1e9b8a"/>
<rect x="616" y="766.64" width="32.7" height="4" fill="#1e9b8a"/>
<rect x="959" y="766.64" width="28.7" height="4" fill="#1e9b8a"/>
<rect x="1061.7" y="766.64" width="24" height="4" fill="#1e9b8a"/>
<rect x="1100.9" y="766.64" width="23.8" height="4" fill="#1e9b8a"/>
<rect x="1160" y="766.64" width="34" height="4" fill="#1e9b8a"/>
<rect x="1249" y="766.64" width="22.7" height="4" fill="#1e9b8a"/>
<rect x="1425" y="766.64" width="87" height="4" fill="#1e9b8a"/>
<rect x="420" y="750.3" width="23.8" height="4" fill="#25858e"/>
<rect x="533" y="750.3" width="22.8" height="4" fill="#25858e"/>
<rect x="567" y="750.3" width="23.8" height="4" fill="#25858e"/>
<rect x="621" y="750.3" width="121.7" height="4" fill="#25858e"/>
<rect x="969" y="750.3" width="165.7" height="4" fill="#25858e"/>
<rect x="1184.9" y="750.3" width="160.9" height="4" fill="#25858e"/>
<rect x="1468.8" y="750.3" width="24.1" height="4" fill="#25858e"/>
<rect x="430" y="733.96" width="23" height="4" fill="#2d708e"/>
<rect x="576.8" y="733.96" width="155.9" height="4" fill="#2d708e"/>
<rect x="994" y="733.96" width="110.8" height="4" fill="#2d708e"/>
<rect x="1116" y="733.96" width="106.7" height="4" fill="#2d708e"/>
<rect x="1262.8" y="733.96" width="29.2" height="4" fill="#2d708e"/>
<rect x="1489" y="733.96" width="23" height="4" fill="#2d708e"/>
<rect x="592" y="717.62" width="22.8" height="4" fill="#375a8c"/>
<rect x="655" y="717.62" width="116.9" height="4" fill="#375a8c"/>
<rect x="1072" y="717.62" width="171" height="4" fill="#375a8c"/>
<rect x="1262.8" y="717.62" width="24" height="4" fill="#375a8c"/>
<rect x="596.2" y="701.28" width="136.5" height="4" fill="#424086"/>
<rect x="1092" y="701.28" width="28" height="4" fill="#424086"/>
<rect x="1200" y="701.28" width="22.7" height="4" fill="#424086"/>
<rect x="1272.8" y="701.28" width="53.2" height="4" fill="#424086"/>
<rect x="1111" y="684.94" width="23.7" height="4" fill="#482475"/>
<path d="M113.8 834 h8 M117.8 830 v8 M240.5 834 h8 M244.5 830 v8 M510.5 834 h8 M514.5 830 v8 M706.5 834 h8 M710.5 830 v8 M833.7 834 h8 M837.7 830 v8 M962 834 h8 M966 830 v8 M986.5 834 h8 M990.5 830 v8 M1116.7 834 h8 M1120.7 830 v8 M1295.7 834 h8 M1299.7 830 v8 M1341.9 834 h8 M1345.9 830 v8 M1412.8 834 h8 M1416.8 830 v8 M1481.9 834 h8 M1485.9 830 v8 M1530.8 834 h8 M1534.8 830 v8 M1731.9 834 h8 M1735.9 830 v8 M1765.8 834 h8 M1769.8 830 v8 M172.6 817.66 h8 M176.6 813.66 v8 M255.5 817.66 h8 M259.5 813.66 v8 M323.8 817.66 h8 M327.8 813.66 v8 M437.7 817.66 h8 M441.7 813.66 v8 M598.7 817.66 h8 M602.7 813.66 v8 M717 817.66 h8 M721 813.66 v8 M793.5 817.66 h8 M797.5 813.66 v8 M939.8 817.66 h8 M943.8 813.66 v8 M1005.9 817.66 h8 M1009.9 813.66 v8 M1152.6 817.66 h8 M1156.6 813.66 v8 M1250.6 817.66 h8 M1254.6 813.66 v8 M1299.6 817.66 h8 M1303.6 813.66 v8 M1349.3 817.66 h8 M1353.3 813.66 v8 M1402.5 817.66 h8 M1406.5 813.66 v8 M1466.7 817.66 h8 M1470.7 813.66 v8 M1554.7 817.66 h8 M1558.7 813.66 v8 M174.5 801.32 h8 M178.5 797.32 v8 M378.7 801.32 h8 M382.7 797.32 v8 M544.8 801.32 h8 M548.8 797.32 v8 M682.7 801.32 h8 M686.7 797.32 v8 M741.5 801.32 h8 M745.5 797.32 v8 M1074.7 801.32 h8 M1078.7 797.32 v8 M1216.8 801.32 h8 M1220.8 797.32 v8 M1304.5 801.32 h8 M1308.5 797.32 v8 M1466.7 801.32 h8 M1470.7 797.32 v8 M1559.8 801.32 h8 M1563.8 797.32 v8 M201.3 784.98 h8 M205.3 780.98 v8 M400.4 784.98 h8 M404.4 780.98 v8 M525.7 784.98 h8 M529.7 780.98 v8 M638.5 784.98 h8 M642.5 780.98 v8 M814.5 784.98 h8 M818.5 780.98 v8 M959.7 784.98 h8 M963.7 780.98 v8 M1040.6 784.98 h8 M1044.6 780.98 v8 M1187.6 784.98 h8 M1191.6 780.98 v8 M1250.6 784.98 h8 M1254.6 780.98 v8 M1324.8 784.98 h8 M1328.8 780.98 v8 M1402.5 784.98 h8 M1406.5 780.98 v8 M1545.8 784.98 h8 M1549.8 780.98 v8 M355.6 768.64 h8 M359.6 764.64 v8 M426.5 768.64 h8 M430.5 764.64 v8 M476.7 768.64 h8 M480.7 764.64 v8 M535.5 768.64 h8 M539.5 764.64 v8 M570.5 768.64 h8 M574.5 764.64 v8 M630.5 768.64 h8 M634.5 764.64 v8 M973.8 768.64 h8 M977.8 764.64 v8 M1069.8 768.64 h8 M1073.8 764.64 v8 M1108.5 768.64 h8 M1112.5 764.64 v8 M1177.8 768.64 h8 M1181.8 764.64 v8 M1255.5 768.64 h8 M1259.5 764.64 v8 M1466.7 768.64 h8 M1470.7 764.64 v8 M427.7 752.3 h8 M431.7 748.3 v8 M539.7 752.3 h8 M543.7 748.3 v8 M574.7 752.3 h8 M578.7 748.3 v8 M703.7 752.3 h8 M707.7 748.3 v8 M1094.5 752.3 h8 M1098.5 748.3 v8 M1270.7 752.3 h8 M1274.7 748.3 v8 M1476.5 752.3 h8 M1480.5 748.3 v8 M437.7 735.96 h8 M441.7 731.96 v8 M630.7 735.96 h8 M634.7 731.96 v8 M1038.5 735.96 h8 M1042.5 731.96 v8 M1167.8 735.96 h8 M1171.8 731.96 v8 M1274.7 735.96 h8 M1278.7 731.96 v8 M1496.8 735.96 h8 M1500.8 731.96 v8 M598.7 719.62 h8 M602.7 715.62 v8 M726.8 719.62 h8 M730.8 715.62 v8 M1187.6 719.62 h8 M1191.6 715.62 v8 M1270.7 719.62 h8 M1274.7 715.62 v8 M687.8 703.28 h8 M691.8 699.28 v8 M1101.5 703.28 h8 M1105.5 699.28 v8 M1206.5 703.28 h8 M1210.5 699.28 v8 M1299.6 703.28 h8 M1303.6 699.28 v8 M1118.8 686.94 h8 M1122.8 682.94 v8" stroke="#ffffff" stroke-width="2.1" fill="none"/>
<g font-family="Liberation Sans" font-size="10.9" fill="#ffffff" stroke="#ffffff" stroke-width="0.12" text-anchor="middle">
<text x="117.76" y="831.4" textLength="19.8" lengthAdjust="spacingAndGlyphs">KSE</text>
<text x="255.04" y="831.4" textLength="19.85" lengthAdjust="spacingAndGlyphs">ETA</text>
<text x="495.29" y="831.4" textLength="21.95" lengthAdjust="spacingAndGlyphs">NZC</text>
<text x="711.02" y="831.4" textLength="22.68" lengthAdjust="spacingAndGlyphs">NDA</text>
<text x="853.21" y="831.4" textLength="19.26" lengthAdjust="spacingAndGlyphs">SPE</text>
<text x="946.37" y="831.4" textLength="22.13" lengthAdjust="spacingAndGlyphs">ARD</text>
<text x="1024.81" y="831.4" textLength="21" lengthAdjust="spacingAndGlyphs">EGE</text>
<text x="1142.49" y="831.4" textLength="21.04" lengthAdjust="spacingAndGlyphs">NTA</text>
<text x="1284.67" y="831.4" textLength="24.7" lengthAdjust="spacingAndGlyphs">MON</text>
<text x="1343.51" y="831.4" textLength="21.23" lengthAdjust="spacingAndGlyphs">URS</text>
<text x="1412.15" y="831.4" textLength="21.08" lengthAdjust="spacingAndGlyphs">AHY</text>
<text x="1485.7" y="831.4" textLength="24.41" lengthAdjust="spacingAndGlyphs">GUM</text>
<text x="1534.73" y="831.4" textLength="22.14" lengthAdjust="spacingAndGlyphs">OHY</text>
<text x="1735.75" y="831.4" textLength="21.31" lengthAdjust="spacingAndGlyphs">XHE</text>
<text x="1770.07" y="831.4" textLength="16.59" lengthAdjust="spacingAndGlyphs">EVI</text>
<text x="176.6" y="815.06" textLength="21.16" lengthAdjust="spacingAndGlyphs">AVB</text>
<text x="255.04" y="815.06" textLength="18.54" lengthAdjust="spacingAndGlyphs">ELY</text>
<text x="323.69" y="815.06" textLength="23.12" lengthAdjust="spacingAndGlyphs">CAM</text>
<text x="431.55" y="815.06" textLength="21.06" lengthAdjust="spacingAndGlyphs">SSG</text>
<text x="578.64" y="815.06" textLength="20.45" lengthAdjust="spacingAndGlyphs">PCA</text>
<text x="720.83" y="815.06" textLength="22.52" lengthAdjust="spacingAndGlyphs">AUD</text>
<text x="809.08" y="815.06" textLength="21.74" lengthAdjust="spacingAndGlyphs">AUR</text>
<text x="931.66" y="815.06" textLength="21.53" lengthAdjust="spacingAndGlyphs">DSX</text>
<text x="1010.11" y="815.06" textLength="22.84" lengthAdjust="spacingAndGlyphs">OCU</text>
<text x="1137.58" y="815.06" textLength="21.77" lengthAdjust="spacingAndGlyphs">OER</text>
<text x="1255.26" y="815.06" textLength="22.62" lengthAdjust="spacingAndGlyphs">DKD</text>
<text x="1304.29" y="815.06" textLength="21.52" lengthAdjust="spacingAndGlyphs">DSV</text>
<text x="1353.32" y="815.06" textLength="19.08" lengthAdjust="spacingAndGlyphs">ALY</text>
<text x="1407.25" y="815.06" textLength="15.28" lengthAdjust="spacingAndGlyphs">ILE</text>
<text x="1470.99" y="815.06" textLength="20.92" lengthAdjust="spacingAndGlyphs">SCC</text>
<text x="1559.24" y="815.06" textLength="19.48" lengthAdjust="spacingAndGlyphs">FEV</text>
<text x="176.6" y="798.72" textLength="19.19" lengthAdjust="spacingAndGlyphs">LYR</text>
<text x="372.72" y="798.72" textLength="19.12" lengthAdjust="spacingAndGlyphs">JMC</text>
<text x="559.03" y="798.72" textLength="15.76" lengthAdjust="spacingAndGlyphs">JPE</text>
<text x="671.8" y="798.72" textLength="20.8" lengthAdjust="spacingAndGlyphs">PAU</text>
<text x="774.76" y="798.72" textLength="17.79" lengthAdjust="spacingAndGlyphs">NIA</text>
<text x="1049.33" y="798.72" textLength="19.88" lengthAdjust="spacingAndGlyphs">STA</text>
<text x="1206.23" y="798.72" textLength="23.92" lengthAdjust="spacingAndGlyphs">NOO</text>
<text x="1353.32" y="798.72" textLength="24.19" lengthAdjust="spacingAndGlyphs">COM</text>
<text x="1470.99" y="798.72" textLength="22.09" lengthAdjust="spacingAndGlyphs">NCC</text>
<text x="1564.14" y="798.72" textLength="20.36" lengthAdjust="spacingAndGlyphs">FED</text>
<text x="206.01" y="782.38" textLength="17.83" lengthAdjust="spacingAndGlyphs">HVI</text>
<text x="411.94" y="782.38" textLength="17.24" lengthAdjust="spacingAndGlyphs">ARI</text>
<text x="529.61" y="782.38" textLength="20.79" lengthAdjust="spacingAndGlyphs">SZC</text>
<text x="617.87" y="782.38" textLength="20.45" lengthAdjust="spacingAndGlyphs">CAP</text>
<text x="818.89" y="782.38" textLength="21.75" lengthAdjust="spacingAndGlyphs">NUE</text>
<text x="961.08" y="782.38" textLength="21.59" lengthAdjust="spacingAndGlyphs">OCT</text>
<text x="1059.14" y="782.38" textLength="18.3" lengthAdjust="spacingAndGlyphs">ORI</text>
<text x="1186.61" y="782.38" textLength="24.04" lengthAdjust="spacingAndGlyphs">AMO</text>
<text x="1255.26" y="782.38" textLength="21.33" lengthAdjust="spacingAndGlyphs">DPC</text>
<text x="1328.8" y="782.38" textLength="17.14" lengthAdjust="spacingAndGlyphs">XVI</text>
<text x="1407.25" y="782.38" textLength="22.69" lengthAdjust="spacingAndGlyphs">QUA</text>
<text x="1559.24" y="782.38" textLength="21.8" lengthAdjust="spacingAndGlyphs">AAN</text>
<text x="353.1" y="766.04" textLength="21.08" lengthAdjust="spacingAndGlyphs">TAH</text>
<text x="431.55" y="766.04" textLength="16.59" lengthAdjust="spacingAndGlyphs">JEA</text>
<text x="480.58" y="766.04" textLength="12.29" lengthAdjust="spacingAndGlyphs">JIP</text>
<text x="539.42" y="766.04" textLength="18.96" lengthAdjust="spacingAndGlyphs">PPS</text>
<text x="578.64" y="766.04" textLength="20.79" lengthAdjust="spacingAndGlyphs">ZCS</text>
<text x="632.58" y="766.04" textLength="23.07" lengthAdjust="spacingAndGlyphs">GDR</text>
<text x="970.88" y="766.04" textLength="22.13" lengthAdjust="spacingAndGlyphs">DRA</text>
<text x="1073.85" y="766.04" textLength="22.16" lengthAdjust="spacingAndGlyphs">LUM</text>
<text x="1113.07" y="766.04" textLength="20.91" lengthAdjust="spacingAndGlyphs">RPU</text>
<text x="1176.81" y="766.04" textLength="21.08" lengthAdjust="spacingAndGlyphs">THA</text>
<text x="1260.16" y="766.04" textLength="20.29" lengthAdjust="spacingAndGlyphs">PSU</text>
<text x="1470.99" y="766.04" textLength="21.31" lengthAdjust="spacingAndGlyphs">XCB</text>
<text x="431.55" y="749.7" textLength="17.39" lengthAdjust="spacingAndGlyphs">JRC</text>
<text x="544.32" y="749.7" textLength="21.94" lengthAdjust="spacingAndGlyphs">CAN</text>
<text x="578.64" y="749.7" textLength="20.68" lengthAdjust="spacingAndGlyphs">FAN</text>
<text x="681.61" y="749.7" textLength="19.88" lengthAdjust="spacingAndGlyphs">PER</text>
<text x="1049.33" y="749.7" textLength="20.53" lengthAdjust="spacingAndGlyphs">CTA</text>
<text x="1265.06" y="749.7" textLength="21.97" lengthAdjust="spacingAndGlyphs">HYD</text>
<text x="1480.79" y="749.7" textLength="23.48" lengthAdjust="spacingAndGlyphs">XUM</text>
<text x="441.36" y="733.36" textLength="22.46" lengthAdjust="spacingAndGlyphs">COR</text>
<text x="657.09" y="733.36" textLength="21.52" lengthAdjust="spacingAndGlyphs">SDA</text>
<text x="1049.33" y="733.36" textLength="17.66" lengthAdjust="spacingAndGlyphs">LMI</text>
<text x="1167" y="733.36" textLength="20.35" lengthAdjust="spacingAndGlyphs">LEO</text>
<text x="1274.87" y="733.36" textLength="20.54" lengthAdjust="spacingAndGlyphs">EHY</text>
<text x="1500.41" y="733.36" textLength="20.75" lengthAdjust="spacingAndGlyphs">ECV</text>
<text x="603.16" y="717.02" textLength="17.14" lengthAdjust="spacingAndGlyphs">JXA</text>
<text x="715.93" y="717.02" textLength="21.93" lengthAdjust="spacingAndGlyphs">KCG</text>
<text x="1157.2" y="717.02" textLength="22.68" lengthAdjust="spacingAndGlyphs">AND</text>
<text x="1274.87" y="717.02" textLength="22.91" lengthAdjust="spacingAndGlyphs">DAD</text>
<text x="666.9" y="700.68" textLength="16.7" lengthAdjust="spacingAndGlyphs">ERI</text>
<text x="1108.17" y="700.68" textLength="20.21" lengthAdjust="spacingAndGlyphs">SLD</text>
<text x="1211.13" y="700.68" textLength="21.8" lengthAdjust="spacingAndGlyphs">ORS</text>
<text x="1299.38" y="700.68" textLength="23.38" lengthAdjust="spacingAndGlyphs">GEM</text>
<text x="1122.88" y="684.34" textLength="23.18" lengthAdjust="spacingAndGlyphs">KUM</text>
</g>
<rect x="20.4" y="641.4" width="1765.3" height="201.1" fill="none" stroke="#ffffff" stroke-width="1.1"/>
<path d="M20.4 842.5 V847.6" stroke="#ffffff" stroke-width="1.1"/>
<text x="20.4" y="862" font-family="Liberation Sans" font-size="13.9" fill="#ffffff" text-anchor="middle" textLength="8.84" lengthAdjust="spacingAndGlyphs">0</text>
<path d="M265.55 842.5 V847.6" stroke="#ffffff" stroke-width="1.1"/>
<text x="265.55" y="862" font-family="Liberation Sans" font-size="13.9" fill="#ffffff" text-anchor="middle" textLength="17.69" lengthAdjust="spacingAndGlyphs">50</text>
<path d="M510.7 842.5 V847.6" stroke="#ffffff" stroke-width="1.1"/>
<text x="510.7" y="862" font-family="Liberation Sans" font-size="13.9" fill="#ffffff" text-anchor="middle" textLength="26.53" lengthAdjust="spacingAndGlyphs">100</text>
<path d="M755.85 842.5 V847.6" stroke="#ffffff" stroke-width="1.1"/>
<text x="755.85" y="862" font-family="Liberation Sans" font-size="13.9" fill="#ffffff" text-anchor="middle" textLength="26.53" lengthAdjust="spacingAndGlyphs">150</text>
<path d="M1001 842.5 V847.6" stroke="#ffffff" stroke-width="1.1"/>
<text x="1001" y="862" font-family="Liberation Sans" font-size="13.9" fill="#ffffff" text-anchor="middle" textLength="26.53" lengthAdjust="spacingAndGlyphs">200</text>
<path d="M1246.15 842.5 V847.6" stroke="#ffffff" stroke-width="1.1"/>
<text x="1246.15" y="862" font-family="Liberation Sans" font-size="13.9" fill="#ffffff" text-anchor="middle" textLength="26.53" lengthAdjust="spacingAndGlyphs">250</text>
<path d="M1491.3 842.5 V847.6" stroke="#ffffff" stroke-width="1.1"/>
<text x="1491.3" y="862" font-family="Liberation Sans" font-size="13.9" fill="#ffffff" text-anchor="middle" textLength="26.53" lengthAdjust="spacingAndGlyphs">300</text>
<path d="M1736.45 842.5 V847.6" stroke="#ffffff" stroke-width="1.1"/>
<text x="1736.45" y="862" font-family="Liberation Sans" font-size="13.9" fill="#ffffff" text-anchor="middle" textLength="26.53" lengthAdjust="spacingAndGlyphs">350</text>
<text x="902.5" y="881.8" font-family="Liberation Sans" font-size="13.9" fill="#ffffff" text-anchor="middle" textLength="146.8" lengthAdjust="spacingAndGlyphs">Solar longitude (deg)</text>
</g>
</svg>
</body></html>
